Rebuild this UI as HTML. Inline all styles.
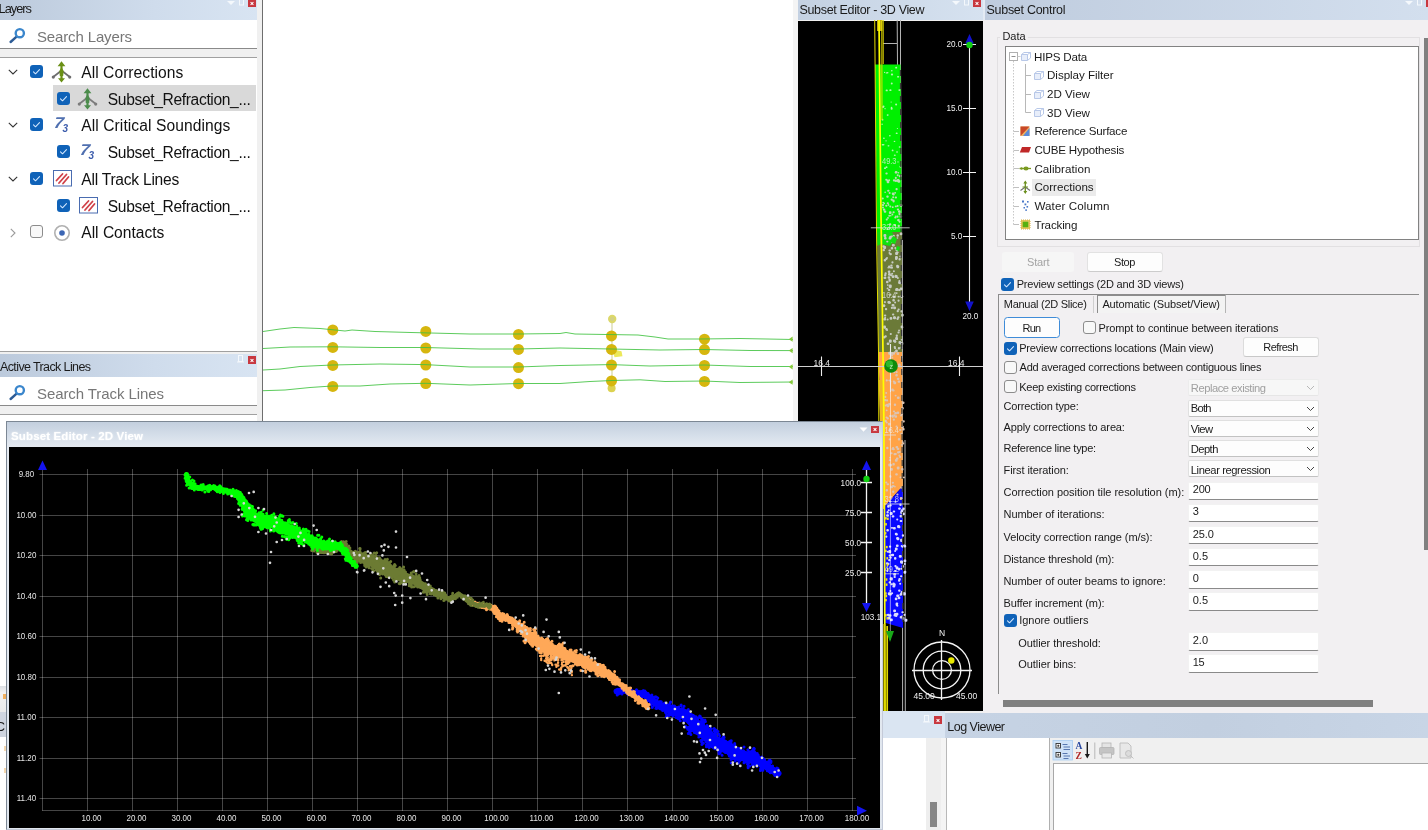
<!DOCTYPE html><html><head><meta charset="utf-8"><title>Subset Editor</title><style>
*{box-sizing:border-box;margin:0;padding:0}
html,body{width:1428px;height:830px;overflow:hidden;background:#f0f0f0;font-family:"Liberation Sans",sans-serif;}
.abs{position:absolute}
#root{position:relative;width:1428px;height:830px;overflow:hidden;background:#f0f0f0;will-change:transform;-webkit-font-smoothing:antialiased}
.hdr{position:absolute;background:linear-gradient(90deg,#bccadc 0%,#cfdcec 60%,#d8e4f2 100%)}
.t{position:absolute;white-space:nowrap}
.close{position:absolute;width:8px;height:8px;background:#c8383f}
.close:before,.close:after{content:"";position:absolute;left:2px;top:3.5px;width:4px;height:1px;background:#fff;transform:rotate(45deg)}
.close:after{transform:rotate(-45deg)}
.cb{position:absolute;width:13px;height:13px;border-radius:3px;background:#0f62b8}
.cb svg{position:absolute;left:0;top:0}
.cbe{position:absolute;width:13px;height:13px;border-radius:3px;background:#f8f8f8;border:1px solid #8c8c8c}
</style></head><body><div id="root">
<div class="abs" style="left:0;top:0;width:257px;height:352px;background:#fff"></div><div class="hdr" style="left:0;top:0;width:257px;height:20px"></div><div class="t" style="left:-1.5px;top:2.3px;font-size:12.8px;line-height:14.7072px;color:#1a1a1a;letter-spacing:-0.983px;">Layers</div><div class="close" style="left:248px;top:-1px"></div><svg class="abs" style="left:226px;top:0" width="20" height="8"><path d="M1 1 H9 L5 5Z" fill="#f4f8fc"/><rect x="13.5" y="-1" width="4" height="6" fill="none" stroke="#f4f8fc"/></svg><div class="t" style="left:37.0px;top:28.4px;font-size:15px;line-height:17.235px;color:#777;letter-spacing:-0.143px;">Search Layers</div><svg class="abs" style="left:8.3px;top:25.6px" width="20" height="20" viewBox="0 0 20 20"><path d="M8.6 10.6 L2.6 16" stroke="#2d5c96" stroke-width="2.4" stroke-linecap="round"/><circle cx="11.8" cy="7.2" r="4.1" fill="#fff" stroke="#3a86cc" stroke-width="2.4"/></svg><div class="abs" style="left:0;top:48px;width:257px;height:1px;background:#8a8a8a"></div><div class="abs" style="left:0;top:49px;width:257px;height:8px;background:#f0f0f0"></div><div class="abs" style="left:0;top:57px;width:257px;height:1px;background:#a0a0a0"></div><div class="abs" style="left:0;top:351px;width:257px;height:1px;background:#a0a0a0"></div><div class="abs" style="left:53px;top:85px;width:203px;height:26px;background:#d9d9d9"></div><div class="cb" style="left:30px;top:64.9px"><svg width="13" height="13" viewBox="0 0 13 13"><path d="M3.5 6.8 L5.5 8.8 L9.5 4.6" fill="none" stroke="#d4e8ff" stroke-width="1.05" stroke-linecap="round" stroke-linejoin="round"/></svg></div><svg class="abs" style="left:50.8px;top:60.8px" width="21" height="22" viewBox="0 0 21 22"><path d="M10.5 9.5 L2.2 16 M10.5 9.5 L18.8 16" stroke="#6e6e6e" stroke-width="1.7" stroke-linecap="round" fill="none"/><circle cx="2.3" cy="16.1" r="1.6" fill="#6e6e6e"/><circle cx="18.7" cy="16.1" r="1.6" fill="#6e6e6e"/><path d="M10.5 3 V19" stroke="#6a9016" stroke-width="2.2"/><path d="M10.5 6 L12.6 10 L12.2 15 H8.8 L8.4 10Z" fill="#6a9016"/><path d="M10.5 0.3 L14.4 5.2 H6.6Z M10.5 21.6 L14 17.2 H7Z" fill="#6a9016"/></svg><div class="t" style="left:81.3px;top:64.0px;font-size:15.6px;line-height:17.9244px;color:#111;letter-spacing:0.041px;">All Corrections</div><svg class="abs" style="left:7.8px;top:68.8px" width="10" height="6" viewBox="0 0 10 6"><path d="M0.8 0.8 L5 5 L9.2 0.8" fill="none" stroke="#333" stroke-width="1.1"/></svg><div class="cb" style="left:56.5px;top:91.62px"><svg width="13" height="13" viewBox="0 0 13 13"><path d="M3.5 6.8 L5.5 8.8 L9.5 4.6" fill="none" stroke="#d4e8ff" stroke-width="1.05" stroke-linecap="round" stroke-linejoin="round"/></svg></div><svg class="abs" style="left:77.3px;top:87.52px" width="21" height="22" viewBox="0 0 21 22"><path d="M10.5 9.5 L2.2 16 M10.5 9.5 L18.8 16" stroke="#7c7c7c" stroke-width="1.7" stroke-linecap="round" fill="none"/><circle cx="2.3" cy="16.1" r="1.6" fill="#7c7c7c"/><circle cx="18.7" cy="16.1" r="1.6" fill="#7c7c7c"/><path d="M10.5 3 V19" stroke="#4c8c4c" stroke-width="2.2"/><path d="M10.5 6 L12.6 10 L12.2 15 H8.8 L8.4 10Z" fill="#4c8c4c"/><path d="M10.5 0.3 L14.4 5.2 H6.6Z M10.5 21.6 L14 17.2 H7Z" fill="#4c8c4c"/></svg><div class="t" style="left:107.8px;top:90.7px;font-size:15.6px;line-height:17.9244px;color:#111;letter-spacing:-0.351px;">Subset_Refraction_...</div><div class="cb" style="left:30px;top:118.34px"><svg width="13" height="13" viewBox="0 0 13 13"><path d="M3.5 6.8 L5.5 8.8 L9.5 4.6" fill="none" stroke="#d4e8ff" stroke-width="1.05" stroke-linecap="round" stroke-linejoin="round"/></svg></div><svg class="abs" style="left:52.5px;top:115.24px" width="20" height="20" viewBox="0 0 20 20"><text x="2.2" y="12.6" font-family="Liberation Sans,sans-serif" font-size="15.5" font-style="italic" font-weight="bold" fill="#5070b0" transform="skewX(-8)" textLength="9.5" lengthAdjust="spacingAndGlyphs">7</text><text x="9.6" y="17.3" font-family="Liberation Sans,sans-serif" font-size="10" font-weight="bold" font-style="italic" fill="#3c5cac">3</text></svg><div class="t" style="left:81.3px;top:117.4px;font-size:15.6px;line-height:17.9244px;color:#111;letter-spacing:0.076px;">All Critical Soundings</div><svg class="abs" style="left:7.8px;top:122.24px" width="10" height="6" viewBox="0 0 10 6"><path d="M0.8 0.8 L5 5 L9.2 0.8" fill="none" stroke="#333" stroke-width="1.1"/></svg><div class="cb" style="left:56.5px;top:145.06px"><svg width="13" height="13" viewBox="0 0 13 13"><path d="M3.5 6.8 L5.5 8.8 L9.5 4.6" fill="none" stroke="#d4e8ff" stroke-width="1.05" stroke-linecap="round" stroke-linejoin="round"/></svg></div><svg class="abs" style="left:79px;top:141.96px" width="20" height="20" viewBox="0 0 20 20"><text x="2.2" y="12.6" font-family="Liberation Sans,sans-serif" font-size="15.5" font-style="italic" font-weight="bold" fill="#5070b0" transform="skewX(-8)" textLength="9.5" lengthAdjust="spacingAndGlyphs">7</text><text x="9.6" y="17.3" font-family="Liberation Sans,sans-serif" font-size="10" font-weight="bold" font-style="italic" fill="#3c5cac">3</text></svg><div class="t" style="left:107.8px;top:144.1px;font-size:15.6px;line-height:17.9244px;color:#111;letter-spacing:-0.351px;">Subset_Refraction_...</div><div class="cb" style="left:30px;top:171.78px"><svg width="13" height="13" viewBox="0 0 13 13"><path d="M3.5 6.8 L5.5 8.8 L9.5 4.6" fill="none" stroke="#d4e8ff" stroke-width="1.05" stroke-linecap="round" stroke-linejoin="round"/></svg></div><svg class="abs" style="left:52.5px;top:170.18px" width="20" height="18" viewBox="0 0 20 18"><rect x="0.5" y="0.5" width="18" height="15.5" fill="#fff" stroke="#4a6cb0" stroke-width="1"/><path d="M3.5 10.5 L9.5 4 M6 13 L13.5 4.5 M10 13.5 L15.5 7" stroke="#d04048" stroke-width="1.8" stroke-linecap="round"/></svg><div class="t" style="left:81.3px;top:170.9px;font-size:15.6px;line-height:17.9244px;color:#111;letter-spacing:-0.245px;">All Track Lines</div><svg class="abs" style="left:7.8px;top:175.68px" width="10" height="6" viewBox="0 0 10 6"><path d="M0.8 0.8 L5 5 L9.2 0.8" fill="none" stroke="#333" stroke-width="1.1"/></svg><div class="cb" style="left:56.5px;top:198.5px"><svg width="13" height="13" viewBox="0 0 13 13"><path d="M3.5 6.8 L5.5 8.8 L9.5 4.6" fill="none" stroke="#d4e8ff" stroke-width="1.05" stroke-linecap="round" stroke-linejoin="round"/></svg></div><svg class="abs" style="left:79px;top:196.9px" width="20" height="18" viewBox="0 0 20 18"><rect x="0.5" y="0.5" width="18" height="15.5" fill="#fff" stroke="#4a6cb0" stroke-width="1"/><path d="M3.5 10.5 L9.5 4 M6 13 L13.5 4.5 M10 13.5 L15.5 7" stroke="#d04048" stroke-width="1.8" stroke-linecap="round"/></svg><div class="t" style="left:107.8px;top:197.6px;font-size:15.6px;line-height:17.9244px;color:#111;letter-spacing:-0.351px;">Subset_Refraction_...</div><div class="cbe" style="left:30px;top:225.22px"></div><svg class="abs" style="left:52.5px;top:223.62px" width="18" height="18" viewBox="0 0 18 18"><circle cx="9" cy="9" r="7.2" fill="#fff" stroke="#b0b0b0" stroke-width="1.6"/><circle cx="9" cy="9" r="2.8" fill="#3c66b4"/></svg><div class="t" style="left:81.3px;top:224.3px;font-size:15.6px;line-height:17.9244px;color:#111;letter-spacing:-0.021px;">All Contacts</div><svg class="abs" style="left:10px;top:227.62px" width="6" height="10" viewBox="0 0 6 10"><path d="M0.8 0.8 L5 5 L0.8 9.2" fill="none" stroke="#9a9a9a" stroke-width="1.1"/></svg>
<div class="abs" style="left:0;top:352px;width:257px;height:69px;background:#f0f0f0"></div><div class="hdr" style="left:0;top:354px;width:257px;height:23px"></div><div class="t" style="left:0.0px;top:359.9px;font-size:12.5px;line-height:14.3625px;color:#1a1a1a;letter-spacing:-0.613px;">Active Track Lines</div><div class="close" style="left:248px;top:356px"></div><svg class="abs" style="left:236px;top:355px" width="10" height="9"><rect x="2.5" y="0.5" width="4" height="6" fill="none" stroke="#f4f8fc"/><path d="M1 7 H8" stroke="#f4f8fc"/></svg><div class="abs" style="left:0;top:377px;width:257px;height:28px;background:#fff"></div><div class="t" style="left:37.0px;top:385.4px;font-size:15px;line-height:17.235px;color:#777;letter-spacing:-0.082px;">Search Track Lines</div><svg class="abs" style="left:8.3px;top:382.8px" width="20" height="20" viewBox="0 0 20 20"><path d="M8.6 10.6 L2.6 16" stroke="#2d5c96" stroke-width="2.4" stroke-linecap="round"/><circle cx="11.8" cy="7.2" r="4.1" fill="#fff" stroke="#3a86cc" stroke-width="2.4"/></svg><div class="abs" style="left:0;top:405px;width:257px;height:1px;background:#8a8a8a"></div><div class="abs" style="left:0;top:414px;width:257px;height:1px;background:#a0a0a0"></div><div class="abs" style="left:0;top:415px;width:257px;height:8px;background:#fff"></div>
<div class="abs" style="left:261.5px;top:0;width:1.5px;height:421px;background:#6e6e6e"></div><div class="abs" style="left:263px;top:0;width:530px;height:421px;background:#fff"></div><div class="abs" style="left:793px;top:0;width:5px;height:421px;background:#f4f4f4"></div><svg class="abs" style="left:263px;top:300px" width="535" height="110" viewBox="263 300 535 110"><path d="M612 319 V388" stroke="#e6e6c8" stroke-width="2"/><circle cx="612.2" cy="319" r="4.2" fill="#dcd86a"/><circle cx="612.2" cy="319" r="2" fill="#c8c8a8" opacity=".5"/><circle cx="611.6" cy="388.3" r="4" fill="#dcd250"/><path d="M612.5 349.3 L621.5 351.3 L622.5 356.3 L614.5 357.3Z" fill="#ece85a"/><circle cx="332.8" cy="329.9" r="5.5" fill="#d6b60e"/><circle cx="332.8" cy="347.4" r="5.5" fill="#d6b60e"/><circle cx="332.8" cy="365.4" r="5.5" fill="#d6b60e"/><circle cx="332.8" cy="386.4" r="5.5" fill="#d6b60e"/><circle cx="425.8" cy="331.4" r="5.5" fill="#d6b60e"/><circle cx="425.8" cy="348" r="5.5" fill="#d6b60e"/><circle cx="425.8" cy="365" r="5.5" fill="#d6b60e"/><circle cx="425.8" cy="383.6" r="5.5" fill="#d6b60e"/><circle cx="518.5" cy="334.4" r="5.5" fill="#d6b60e"/><circle cx="518.5" cy="349.4" r="5.5" fill="#d6b60e"/><circle cx="518.5" cy="367.6" r="5.5" fill="#d6b60e"/><circle cx="518.5" cy="383.7" r="5.5" fill="#d6b60e"/><circle cx="611.5" cy="335.9" r="5.5" fill="#d6b60e"/><circle cx="611.5" cy="349.4" r="5.5" fill="#d6b60e"/><circle cx="611.5" cy="365" r="5.5" fill="#d6b60e"/><circle cx="611.5" cy="380.9" r="5.5" fill="#d6b60e"/><circle cx="704.5" cy="339.2" r="5.5" fill="#d6b60e"/><circle cx="704.5" cy="349.6" r="5.5" fill="#d6b60e"/><circle cx="704.5" cy="365.4" r="5.5" fill="#d6b60e"/><circle cx="704.5" cy="381.4" r="5.5" fill="#d6b60e"/><polyline points="263,331.5 280,329 294,327.5 320,328.5 345,331 352,330 375,331.5 411,332.5 470,334 517,334 560,333.5 566,332.5 575,334 638,335 655,337 668,339 700,339 740,338.5 793,339.5" fill="none" stroke="#3fc23f" stroke-width="1" opacity=".85"/><polyline points="263,348.5 290,347 332,346.8 380,347.5 425,347.5 480,349 518,349 560,348 611,349 660,350 704,349.5 750,350.5 793,350.6" fill="none" stroke="#3fc23f" stroke-width="1" opacity=".85"/><polyline points="263,370 280,369 300,366.5 332,365 380,364 425,364.6 470,367 518,367 560,365.5 611,364.6 650,366 704,365 750,366.5 793,366.5" fill="none" stroke="#3fc23f" stroke-width="1" opacity=".85"/><polyline points="263,390.7 285,390 310,387.5 332,386 360,386 390,384 426,383.3 470,385 518,383.5 560,383.5 590,381.5 612,380.5 640,379.8 665,381.5 704,381 740,382.5 793,382" fill="none" stroke="#3fc23f" stroke-width="1" opacity=".85"/><path d="M788.8 339.2 L792.6 336.6 V341.8Z" fill="#86c83c"/><path d="M788.8 350.6 L792.6 348 V353.2Z" fill="#86c83c"/><path d="M788.8 366.8 L792.6 364.2 V369.4Z" fill="#86c83c"/><path d="M788.8 382.2 L792.6 379.6 V384.8Z" fill="#86c83c"/></svg>
<div class="hdr" style="left:798px;top:0;width:185px;height:20px;background:linear-gradient(90deg,#c4d1e2,#d6e2f0)"></div><div class="t" style="left:799.5px;top:2.7px;font-size:12.5px;line-height:14.3625px;color:#1a1a1a;letter-spacing:-0.339px;">Subset Editor - 3D View</div><div class="close" style="left:973px;top:-1px"></div><svg class="abs" style="left:951px;top:0" width="20" height="8"><path d="M1 1 H9 L5 5Z" fill="#f4f8fc"/><rect x="13.5" y="-1" width="4" height="6" fill="none" stroke="#f4f8fc"/></svg><div class="abs" style="left:798px;top:20.5px;width:185px;height:690.5px;background:#000"></div><div class="abs" style="left:983px;top:0;width:2px;height:20px;background:#e4ebf4"></div><svg class="abs" style="left:798px;top:20px" width="185" height="692" viewBox="798 20 185 692" font-family="Liberation Sans,sans-serif"><path d="M897.2 20 L897.5 66 M900.5 20 V66 M902.4 240 L902.6 712 M900.5 66 L902.4 352 M905 440 L905.3 712" stroke="#b4b4b4" stroke-width="1" fill="none"/><path d="M883 43.5 H897" stroke="#b4b4b4" stroke-width="1"/><path d="M875 64.5 H900.5 L901.8 232 H877Z" fill="#00f000"/><path d="M877 232 H901.8 L902 352 H878.5Z" fill="#6b7a38"/><path d="M877 232 H892 L895 238 L890 246 L881 244 L877.2 246Z" fill="#10e010"/><path d="M878.5 352 H902 L902.8 486 L893 497 L882.5 509 Z" fill="#ffa347"/><path d="M882.5 509 L893 497 L902.8 486 L903 628 L884 622.5 Z" fill="#0808ff"/><path d="M878.7 380 L884 380 L884.5 509 H882.5Z" fill="#f0b428"/><rect x="893.1" y="316.6" width="2.9" height="2.7" rx="1" fill="#c8ccc4"/><rect x="894.0" y="347.3" width="2.1" height="2.0" rx="1" fill="#c8ccc4"/><rect x="883.5" y="234.1" width="2.8" height="2.8" rx="1" fill="#c8ccc4"/><rect x="898.4" y="89.2" width="1.9" height="1.8" rx="1" fill="#b4f4b0"/><rect x="894.8" y="532.7" width="2.7" height="2.6" rx="1" fill="#dcdcff"/><rect x="904.5" y="618.7" width="2.9" height="3.0" rx="1" fill="#dcdcff"/><rect x="886.2" y="240.7" width="2.2" height="1.8" rx="1" fill="#c8ccc4"/><rect x="892.1" y="490.5" width="2.2" height="2.4" rx="1" fill="#dcc4b4"/><rect x="885.2" y="535.4" width="2.2" height="2.4" rx="1" fill="#dcdcff"/><rect x="901.0" y="326.4" width="2.3" height="1.9" rx="1" fill="#c8ccc4"/><rect x="886.7" y="114.3" width="2.0" height="1.6" rx="1" fill="#b4f4b0"/><rect x="883.4" y="202.5" width="1.7" height="1.7" rx="1" fill="#bcdcb4"/><rect x="894.7" y="171.6" width="1.7" height="1.7" rx="1" fill="#bcdcb4"/><rect x="899.6" y="215.5" width="2.5" height="2.2" rx="1" fill="#bcdcb4"/><rect x="889.3" y="556.2" width="2.4" height="2.6" rx="1" fill="#dcdcff"/><rect x="885.8" y="421.6" width="2.0" height="1.8" rx="1" fill="#dcc4b4"/><rect x="892.6" y="200.6" width="2.0" height="1.9" rx="1" fill="#bcdcb4"/><rect x="894.8" y="597.4" width="2.6" height="2.8" rx="1" fill="#dcdcff"/><rect x="884.0" y="167.3" width="2.0" height="1.8" rx="1" fill="#b4f4b0"/><rect x="894.9" y="171.1" width="2.6" height="2.3" rx="1" fill="#bcdcb4"/><rect x="902.1" y="592.4" width="2.7" height="2.5" rx="1" fill="#dcdcff"/><rect x="881.4" y="123.5" width="1.4" height="1.5" rx="1" fill="#b4f4b0"/><rect x="896.8" y="208.4" width="2.3" height="2.0" rx="1" fill="#bcdcb4"/><rect x="891.8" y="192.5" width="2.5" height="2.5" rx="1" fill="#bcdcb4"/><rect x="898.7" y="221.2" width="1.8" height="1.5" rx="1" fill="#bcdcb4"/><rect x="889.9" y="215.1" width="1.7" height="1.4" rx="1" fill="#bcdcb4"/><rect x="892.9" y="270.3" width="2.0" height="1.9" rx="1" fill="#c8ccc4"/><rect x="903.6" y="559.6" width="2.7" height="2.7" rx="1" fill="#dcdcff"/><rect x="897.0" y="75.9" width="2.2" height="1.7" rx="1" fill="#b4f4b0"/><rect x="892.8" y="418.4" width="2.1" height="2.3" rx="1" fill="#dcc4b4"/><rect x="890.6" y="107.7" width="2.1" height="2.1" rx="1" fill="#b4f4b0"/><rect x="899.0" y="455.8" width="2.2" height="2.2" rx="1" fill="#dcc4b4"/><rect x="901.6" y="565.1" width="2.5" height="2.6" rx="1" fill="#dcdcff"/><rect x="895.9" y="544.4" width="2.7" height="2.5" rx="1" fill="#dcdcff"/><rect x="902.3" y="420.2" width="2.5" height="2.3" rx="1" fill="#dcc4b4"/><rect x="895.2" y="473.2" width="2.6" height="2.2" rx="1" fill="#dcc4b4"/><rect x="885.1" y="481.6" width="2.3" height="2.0" rx="1" fill="#dcc4b4"/><rect x="893.5" y="452.9" width="2.7" height="2.4" rx="1" fill="#dcc4b4"/><rect x="885.7" y="72.3" width="1.4" height="1.2" rx="1" fill="#b4f4b0"/><rect x="897.8" y="567.8" width="2.5" height="2.7" rx="1" fill="#dcdcff"/><rect x="894.3" y="247.1" width="2.1" height="2.0" rx="1" fill="#c8ccc4"/><rect x="901.8" y="512.5" width="3.0" height="2.7" rx="1" fill="#dcdcff"/><rect x="898.5" y="341.0" width="2.8" height="2.9" rx="1" fill="#c8ccc4"/><rect x="890.9" y="592.3" width="2.2" height="2.0" rx="1" fill="#dcdcff"/><rect x="885.7" y="218.4" width="2.1" height="2.0" rx="1" fill="#bcdcb4"/><rect x="888.9" y="339.6" width="2.8" height="3.1" rx="1" fill="#c8ccc4"/><rect x="884.2" y="316.7" width="1.9" height="2.1" rx="1" fill="#c8ccc4"/><rect x="896.5" y="237.2" width="1.9" height="1.6" rx="1" fill="#c8ccc4"/><rect x="883.3" y="318.0" width="2.8" height="2.5" rx="1" fill="#c8ccc4"/><rect x="881.7" y="144.0" width="1.6" height="1.6" rx="1" fill="#b4f4b0"/><rect x="899.0" y="428.9" width="2.5" height="2.1" rx="1" fill="#dcc4b4"/><rect x="886.2" y="329.2" width="1.9" height="1.8" rx="1" fill="#c8ccc4"/><rect x="895.0" y="257.5" width="2.5" height="2.4" rx="1" fill="#c8ccc4"/><rect x="891.9" y="484.9" width="2.7" height="2.2" rx="1" fill="#dcc4b4"/><rect x="899.1" y="582.7" width="2.1" height="2.0" rx="1" fill="#dcdcff"/><rect x="900.7" y="412.6" width="2.4" height="2.5" rx="1" fill="#dcc4b4"/><rect x="902.3" y="507.4" width="2.5" height="2.5" rx="1" fill="#dcdcff"/><rect x="894.6" y="179.5" width="2.5" height="2.5" rx="1" fill="#bcdcb4"/><rect x="888.3" y="463.6" width="2.8" height="3.0" rx="1" fill="#dcc4b4"/><rect x="897.9" y="363.5" width="2.7" height="2.9" rx="1" fill="#dcc4b4"/><rect x="883.7" y="259.1" width="2.4" height="2.3" rx="1" fill="#c8ccc4"/><rect x="886.1" y="514.3" width="2.9" height="2.5" rx="1" fill="#dcdcff"/><rect x="896.6" y="251.6" width="2.1" height="1.7" rx="1" fill="#c8ccc4"/><rect x="896.6" y="352.2" width="2.5" height="2.7" rx="1" fill="#dcc4b4"/><rect x="900.6" y="338.9" width="2.0" height="1.7" rx="1" fill="#c8ccc4"/><rect x="888.6" y="357.8" width="2.4" height="2.3" rx="1" fill="#dcc4b4"/><rect x="895.5" y="533.4" width="2.3" height="2.1" rx="1" fill="#dcdcff"/><rect x="901.8" y="534.3" width="2.2" height="2.4" rx="1" fill="#dcdcff"/><rect x="895.6" y="602.5" width="2.6" height="2.3" rx="1" fill="#dcdcff"/><rect x="892.6" y="362.9" width="1.8" height="2.0" rx="1" fill="#dcc4b4"/><rect x="890.6" y="351.9" width="2.8" height="2.7" rx="1" fill="#c8ccc4"/><rect x="895.8" y="338.0" width="2.0" height="1.9" rx="1" fill="#c8ccc4"/><rect x="900.2" y="295.2" width="2.9" height="2.6" rx="1" fill="#c8ccc4"/><rect x="885.3" y="328.1" width="2.4" height="2.5" rx="1" fill="#c8ccc4"/><rect x="894.3" y="564.9" width="2.3" height="2.0" rx="1" fill="#dcdcff"/><rect x="894.1" y="191.9" width="2.0" height="1.8" rx="1" fill="#bcdcb4"/><rect x="885.7" y="409.4" width="1.9" height="1.8" rx="1" fill="#dcc4b4"/><rect x="885.2" y="204.8" width="2.2" height="2.0" rx="1" fill="#bcdcb4"/><rect x="890.0" y="274.2" width="2.5" height="2.1" rx="1" fill="#c8ccc4"/><rect x="892.9" y="179.2" width="2.3" height="2.2" rx="1" fill="#bcdcb4"/><rect x="896.5" y="537.6" width="2.9" height="2.6" rx="1" fill="#dcdcff"/><rect x="899.5" y="476.4" width="2.1" height="1.9" rx="1" fill="#dcc4b4"/><rect x="889.7" y="577.2" width="3.1" height="3.3" rx="1" fill="#dcdcff"/><rect x="885.3" y="140.2" width="1.5" height="1.2" rx="1" fill="#b4f4b0"/><rect x="892.9" y="527.0" width="2.9" height="2.4" rx="1" fill="#dcdcff"/><rect x="895.2" y="289.1" width="1.9" height="1.7" rx="1" fill="#c8ccc4"/><rect x="901.0" y="444.0" width="1.9" height="1.8" rx="1" fill="#dcc4b4"/><rect x="893.9" y="486.0" width="2.0" height="1.6" rx="1" fill="#dcc4b4"/><rect x="893.7" y="351.2" width="2.1" height="1.8" rx="1" fill="#c8ccc4"/><rect x="896.8" y="179.0" width="2.7" height="2.9" rx="1" fill="#bcdcb4"/><rect x="881.7" y="118.8" width="1.7" height="1.7" rx="1" fill="#b4f4b0"/><rect x="890.7" y="247.1" width="2.5" height="2.3" rx="1" fill="#c8ccc4"/><rect x="883.9" y="398.9" width="2.6" height="2.3" rx="1" fill="#dcc4b4"/><rect x="896.5" y="317.5" width="2.3" height="2.0" rx="1" fill="#c8ccc4"/><rect x="900.3" y="560.8" width="2.8" height="2.9" rx="1" fill="#dcdcff"/><rect x="891.3" y="414.7" width="2.3" height="2.5" rx="1" fill="#dcc4b4"/><rect x="889.7" y="511.9" width="3.0" height="3.1" rx="1" fill="#dcdcff"/><rect x="899.8" y="497.0" width="2.7" height="2.9" rx="1" fill="#dcc4b4"/><rect x="898.5" y="450.9" width="2.2" height="2.2" rx="1" fill="#dcc4b4"/><rect x="886.7" y="71.9" width="1.8" height="1.6" rx="1" fill="#b4f4b0"/><rect x="898.1" y="589.4" width="2.4" height="2.4" rx="1" fill="#dcdcff"/><rect x="893.4" y="381.5" width="2.8" height="2.8" rx="1" fill="#dcc4b4"/><rect x="898.4" y="454.5" width="1.8" height="1.8" rx="1" fill="#dcc4b4"/><rect x="889.3" y="475.3" width="1.9" height="1.6" rx="1" fill="#dcc4b4"/><rect x="884.1" y="274.1" width="2.2" height="2.3" rx="1" fill="#c8ccc4"/><rect x="892.8" y="370.7" width="2.4" height="2.6" rx="1" fill="#dcc4b4"/><rect x="888.6" y="581.3" width="2.5" height="2.1" rx="1" fill="#dcdcff"/><rect x="894.3" y="340.5" width="2.0" height="2.1" rx="1" fill="#c8ccc4"/><rect x="892.3" y="299.1" width="2.6" height="2.3" rx="1" fill="#c8ccc4"/><rect x="893.9" y="224.3" width="2.2" height="2.0" rx="1" fill="#bcdcb4"/><rect x="882.3" y="201.7" width="1.8" height="1.8" rx="1" fill="#bcdcb4"/><rect x="899.0" y="282.0" width="2.7" height="2.2" rx="1" fill="#c8ccc4"/><rect x="903.5" y="613.8" width="2.1" height="2.2" rx="1" fill="#dcdcff"/><rect x="891.5" y="304.0" width="3.0" height="2.6" rx="1" fill="#c8ccc4"/><rect x="900.6" y="355.9" width="2.3" height="2.5" rx="1" fill="#dcc4b4"/><rect x="896.2" y="518.4" width="2.1" height="2.1" rx="1" fill="#dcdcff"/><rect x="886.6" y="318.5" width="2.0" height="1.9" rx="1" fill="#c8ccc4"/><rect x="889.0" y="134.9" width="1.7" height="1.5" rx="1" fill="#b4f4b0"/><rect x="891.3" y="388.6" width="2.3" height="2.6" rx="1" fill="#dcc4b4"/><rect x="899.4" y="593.8" width="2.3" height="1.9" rx="1" fill="#dcdcff"/><rect x="900.0" y="560.6" width="2.7" height="2.4" rx="1" fill="#dcdcff"/><rect x="894.3" y="216.4" width="2.2" height="2.2" rx="1" fill="#bcdcb4"/><rect x="899.7" y="203.9" width="2.6" height="2.8" rx="1" fill="#bcdcb4"/><rect x="894.1" y="301.6" width="2.0" height="1.9" rx="1" fill="#c8ccc4"/><rect x="882.1" y="106.2" width="1.8" height="1.7" rx="1" fill="#b4f4b0"/><rect x="891.1" y="272.7" width="2.1" height="1.9" rx="1" fill="#c8ccc4"/><rect x="895.7" y="132.4" width="2.0" height="1.7" rx="1" fill="#b4f4b0"/><rect x="887.4" y="301.1" width="2.8" height="2.5" rx="1" fill="#c8ccc4"/><rect x="902.3" y="428.1" width="2.3" height="2.4" rx="1" fill="#dcc4b4"/><rect x="893.5" y="576.1" width="2.4" height="2.0" rx="1" fill="#dcdcff"/><rect x="886.8" y="550.8" width="2.1" height="2.0" rx="1" fill="#dcdcff"/><rect x="895.7" y="334.6" width="2.2" height="2.3" rx="1" fill="#c8ccc4"/><rect x="884.4" y="108.1" width="1.3" height="1.1" rx="1" fill="#b4f4b0"/><rect x="887.5" y="145.2" width="1.6" height="1.3" rx="1" fill="#b4f4b0"/><rect x="894.9" y="458.9" width="2.7" height="2.9" rx="1" fill="#dcc4b4"/><rect x="897.5" y="308.6" width="2.2" height="2.0" rx="1" fill="#c8ccc4"/><rect x="899.7" y="287.4" width="2.9" height="2.5" rx="1" fill="#c8ccc4"/><rect x="889.0" y="266.4" width="2.3" height="2.1" rx="1" fill="#c8ccc4"/><rect x="886.0" y="280.7" width="2.5" height="2.6" rx="1" fill="#c8ccc4"/><rect x="898.8" y="365.5" width="2.0" height="2.0" rx="1" fill="#dcc4b4"/><rect x="890.6" y="554.0" width="2.0" height="1.9" rx="1" fill="#dcdcff"/><rect x="893.8" y="367.5" width="2.5" height="2.6" rx="1" fill="#dcc4b4"/><rect x="890.5" y="101.5" width="1.3" height="1.1" rx="1" fill="#b4f4b0"/><rect x="886.5" y="417.3" width="2.4" height="2.1" rx="1" fill="#dcc4b4"/><rect x="895.5" y="188.1" width="2.2" height="2.2" rx="1" fill="#bcdcb4"/><rect x="888.7" y="284.5" width="3.0" height="3.0" rx="1" fill="#c8ccc4"/><rect x="893.0" y="339.5" width="2.7" height="2.7" rx="1" fill="#c8ccc4"/><rect x="893.2" y="572.9" width="2.9" height="2.9" rx="1" fill="#dcdcff"/><rect x="900.1" y="538.8" width="2.9" height="3.1" rx="1" fill="#dcdcff"/><rect x="897.7" y="596.6" width="2.6" height="2.6" rx="1" fill="#dcdcff"/><rect x="892.7" y="510.4" width="2.5" height="2.1" rx="1" fill="#dcdcff"/><rect x="902.9" y="476.6" width="2.0" height="1.7" rx="1" fill="#dcc4b4"/><rect x="888.0" y="301.4" width="3.0" height="2.4" rx="1" fill="#c8ccc4"/><rect x="884.0" y="236.9" width="2.6" height="2.7" rx="1" fill="#c8ccc4"/><rect x="894.7" y="196.4" width="2.3" height="2.0" rx="1" fill="#bcdcb4"/><rect x="890.4" y="485.7" width="2.6" height="2.5" rx="1" fill="#dcc4b4"/><rect x="898.0" y="210.3" width="2.6" height="2.4" rx="1" fill="#bcdcb4"/><rect x="901.1" y="369.2" width="2.0" height="1.6" rx="1" fill="#dcc4b4"/><rect x="900.6" y="590.9" width="2.4" height="2.3" rx="1" fill="#dcdcff"/><rect x="888.2" y="351.8" width="3.0" height="3.0" rx="1" fill="#c8ccc4"/><rect x="881.7" y="197.6" width="2.1" height="1.9" rx="1" fill="#bcdcb4"/><rect x="898.1" y="507.4" width="2.7" height="2.3" rx="1" fill="#dcdcff"/><rect x="894.9" y="547.6" width="2.7" height="3.0" rx="1" fill="#dcdcff"/><rect x="891.5" y="213.6" width="1.8" height="1.8" rx="1" fill="#bcdcb4"/><rect x="895.2" y="66.8" width="2.0" height="1.7" rx="1" fill="#b4f4b0"/><rect x="894.9" y="215.5" width="1.7" height="1.6" rx="1" fill="#bcdcb4"/><rect x="900.6" y="325.6" width="2.5" height="2.7" rx="1" fill="#c8ccc4"/><rect x="896.5" y="234.2" width="2.4" height="2.5" rx="1" fill="#c8ccc4"/><rect x="890.9" y="526.9" width="2.3" height="1.9" rx="1" fill="#dcdcff"/><rect x="890.5" y="235.4" width="2.7" height="2.4" rx="1" fill="#c8ccc4"/><rect x="886.2" y="446.7" width="2.3" height="2.5" rx="1" fill="#dcc4b4"/><rect x="897.2" y="525.7" width="2.0" height="1.8" rx="1" fill="#dcdcff"/><rect x="888.7" y="459.3" width="2.3" height="1.8" rx="1" fill="#dcc4b4"/><rect x="900.9" y="615.4" width="2.2" height="2.2" rx="1" fill="#dcdcff"/><rect x="888.7" y="226.9" width="2.2" height="2.0" rx="1" fill="#bcdcb4"/><rect x="889.3" y="252.9" width="2.6" height="2.3" rx="1" fill="#c8ccc4"/><rect x="894.8" y="176.8" width="2.0" height="2.1" rx="1" fill="#bcdcb4"/><rect x="896.8" y="377.8" width="2.6" height="2.2" rx="1" fill="#dcc4b4"/><rect x="882.6" y="144.0" width="1.9" height="1.6" rx="1" fill="#b4f4b0"/><rect x="898.0" y="288.9" width="2.6" height="2.1" rx="1" fill="#c8ccc4"/><rect x="884.3" y="191.5" width="1.7" height="1.6" rx="1" fill="#bcdcb4"/><rect x="895.1" y="349.4" width="2.7" height="2.9" rx="1" fill="#c8ccc4"/><rect x="888.5" y="279.8" width="2.4" height="1.9" rx="1" fill="#c8ccc4"/><rect x="895.4" y="288.0" width="3.0" height="3.1" rx="1" fill="#c8ccc4"/><rect x="888.4" y="249.4" width="2.6" height="2.2" rx="1" fill="#c8ccc4"/><rect x="891.7" y="275.2" width="2.8" height="2.9" rx="1" fill="#c8ccc4"/><rect x="886.7" y="404.7" width="2.7" height="2.6" rx="1" fill="#dcc4b4"/><rect x="891.4" y="261.3" width="2.1" height="2.1" rx="1" fill="#c8ccc4"/><rect x="895.6" y="612.7" width="2.8" height="2.9" rx="1" fill="#dcdcff"/><rect x="898.7" y="175.3" width="2.3" height="2.0" rx="1" fill="#bcdcb4"/><rect x="890.4" y="452.2" width="2.2" height="2.0" rx="1" fill="#dcc4b4"/><rect x="895.6" y="566.8" width="2.6" height="2.5" rx="1" fill="#dcdcff"/><rect x="898.5" y="212.5" width="2.7" height="2.8" rx="1" fill="#bcdcb4"/><rect x="886.0" y="399.2" width="2.1" height="2.2" rx="1" fill="#dcc4b4"/><rect x="892.1" y="199.4" width="2.5" height="2.2" rx="1" fill="#bcdcb4"/><rect x="899.4" y="165.8" width="1.9" height="1.7" rx="1" fill="#b4f4b0"/><rect x="897.8" y="437.9" width="2.4" height="2.5" rx="1" fill="#dcc4b4"/><rect x="889.6" y="380.7" width="1.8" height="1.8" rx="1" fill="#dcc4b4"/><rect x="898.7" y="146.2" width="1.7" height="1.5" rx="1" fill="#b4f4b0"/><rect x="896.6" y="411.6" width="2.6" height="2.4" rx="1" fill="#dcc4b4"/><rect x="901.6" y="617.0" width="2.9" height="2.7" rx="1" fill="#dcdcff"/><rect x="893.1" y="306.4" width="2.9" height="2.8" rx="1" fill="#c8ccc4"/><rect x="891.2" y="356.9" width="2.1" height="1.7" rx="1" fill="#dcc4b4"/><rect x="901.1" y="468.0" width="2.4" height="2.5" rx="1" fill="#dcc4b4"/><rect x="892.9" y="234.8" width="2.0" height="1.7" rx="1" fill="#c8ccc4"/><rect x="892.0" y="313.6" width="2.3" height="1.9" rx="1" fill="#c8ccc4"/><rect x="889.2" y="235.7" width="2.2" height="1.8" rx="1" fill="#c8ccc4"/><rect x="903.5" y="570.9" width="2.7" height="2.9" rx="1" fill="#dcdcff"/><rect x="897.5" y="299.5" width="2.1" height="2.2" rx="1" fill="#c8ccc4"/><rect x="887.1" y="505.0" width="2.6" height="2.8" rx="1" fill="#dcdcff"/><rect x="883.2" y="245.9" width="2.9" height="3.0" rx="1" fill="#c8ccc4"/><rect x="889.0" y="286.1" width="2.5" height="2.1" rx="1" fill="#c8ccc4"/><rect x="900.3" y="342.1" width="3.0" height="2.8" rx="1" fill="#c8ccc4"/><rect x="886.7" y="180.4" width="2.6" height="2.8" rx="1" fill="#bcdcb4"/><rect x="896.7" y="174.3" width="2.0" height="1.9" rx="1" fill="#bcdcb4"/><rect x="897.3" y="161.2" width="1.4" height="1.4" rx="1" fill="#b4f4b0"/><rect x="897.5" y="172.1" width="1.7" height="1.4" rx="1" fill="#bcdcb4"/><rect x="890.2" y="468.1" width="2.7" height="2.7" rx="1" fill="#dcc4b4"/><rect x="893.7" y="140.7" width="1.6" height="1.4" rx="1" fill="#b4f4b0"/><rect x="887.1" y="189.7" width="2.4" height="2.0" rx="1" fill="#bcdcb4"/><rect x="885.5" y="166.3" width="2.0" height="1.8" rx="1" fill="#b4f4b0"/><rect x="900.4" y="432.8" width="2.0" height="1.8" rx="1" fill="#dcc4b4"/><rect x="898.0" y="579.4" width="2.3" height="2.3" rx="1" fill="#dcdcff"/><rect x="886.5" y="511.0" width="2.3" height="2.4" rx="1" fill="#dcdcff"/><rect x="886.7" y="202.2" width="2.2" height="1.9" rx="1" fill="#bcdcb4"/><rect x="903.8" y="563.0" width="2.0" height="1.9" rx="1" fill="#dcdcff"/><rect x="891.7" y="481.8" width="2.3" height="2.0" rx="1" fill="#dcc4b4"/><rect x="895.3" y="374.0" width="2.5" height="2.5" rx="1" fill="#dcc4b4"/><rect x="892.5" y="352.3" width="2.5" height="2.4" rx="1" fill="#dcc4b4"/><rect x="889.0" y="593.1" width="2.9" height="2.4" rx="1" fill="#dcdcff"/><rect x="888.1" y="402.9" width="2.6" height="2.7" rx="1" fill="#dcc4b4"/><rect x="889.2" y="504.3" width="2.5" height="2.2" rx="1" fill="#dcdcff"/><rect x="896.9" y="396.6" width="2.7" height="2.3" rx="1" fill="#dcc4b4"/><rect x="890.8" y="306.8" width="2.2" height="2.3" rx="1" fill="#c8ccc4"/><rect x="893.4" y="240.2" width="2.5" height="2.2" rx="1" fill="#c8ccc4"/><rect x="885.2" y="392.1" width="2.0" height="1.7" rx="1" fill="#dcc4b4"/><rect x="893.8" y="154.5" width="2.0" height="1.6" rx="1" fill="#b4f4b0"/><rect x="889.3" y="293.5" width="2.1" height="2.3" rx="1" fill="#c8ccc4"/><rect x="889.3" y="89.3" width="2.2" height="1.8" rx="1" fill="#b4f4b0"/><rect x="896.6" y="318.2" width="1.9" height="1.7" rx="1" fill="#c8ccc4"/><rect x="888.1" y="559.1" width="2.4" height="2.2" rx="1" fill="#dcdcff"/><rect x="884.0" y="301.1" width="1.9" height="2.1" rx="1" fill="#c8ccc4"/><rect x="891.8" y="206.3" width="1.9" height="1.8" rx="1" fill="#bcdcb4"/><rect x="892.4" y="582.6" width="2.4" height="2.6" rx="1" fill="#dcdcff"/><rect x="884.5" y="404.4" width="2.4" height="2.0" rx="1" fill="#dcc4b4"/><rect x="895.0" y="256.1" width="2.9" height="2.8" rx="1" fill="#c8ccc4"/><rect x="894.0" y="557.1" width="2.4" height="2.6" rx="1" fill="#dcdcff"/><rect x="896.8" y="277.1" width="2.1" height="1.9" rx="1" fill="#c8ccc4"/><rect x="885.2" y="178.8" width="2.1" height="1.9" rx="1" fill="#bcdcb4"/><rect x="901.1" y="313.7" width="2.6" height="2.8" rx="1" fill="#c8ccc4"/><rect x="888.4" y="179.3" width="1.7" height="1.7" rx="1" fill="#bcdcb4"/><rect x="887.3" y="267.0" width="1.9" height="1.6" rx="1" fill="#c8ccc4"/><rect x="888.9" y="211.3" width="2.6" height="2.7" rx="1" fill="#bcdcb4"/><rect x="888.3" y="214.8" width="1.8" height="1.9" rx="1" fill="#bcdcb4"/><rect x="896.4" y="265.3" width="2.7" height="2.9" rx="1" fill="#c8ccc4"/><rect x="886.8" y="284.3" width="1.9" height="1.6" rx="1" fill="#c8ccc4"/><rect x="884.2" y="395.8" width="2.2" height="2.1" rx="1" fill="#dcc4b4"/><rect x="886.5" y="179.5" width="2.4" height="2.2" rx="1" fill="#bcdcb4"/><rect x="898.4" y="280.1" width="2.1" height="1.9" rx="1" fill="#c8ccc4"/><rect x="886.1" y="257.1" width="1.9" height="1.6" rx="1" fill="#c8ccc4"/><rect x="894.3" y="415.2" width="2.8" height="2.5" rx="1" fill="#dcc4b4"/><rect x="896.6" y="447.8" width="2.7" height="2.3" rx="1" fill="#dcc4b4"/><rect x="885.5" y="416.4" width="2.2" height="1.8" rx="1" fill="#dcc4b4"/><rect x="888.4" y="278.4" width="2.4" height="2.2" rx="1" fill="#c8ccc4"/><rect x="891.7" y="149.5" width="1.8" height="1.8" rx="1" fill="#b4f4b0"/><rect x="893.9" y="340.5" width="2.4" height="2.2" rx="1" fill="#c8ccc4"/><rect x="882.0" y="206.4" width="2.0" height="2.1" rx="1" fill="#bcdcb4"/><rect x="888.3" y="379.4" width="2.0" height="1.9" rx="1" fill="#dcc4b4"/><rect x="901.4" y="406.9" width="2.4" height="2.6" rx="1" fill="#dcc4b4"/><rect x="896.3" y="493.4" width="2.2" height="2.0" rx="1" fill="#dcc4b4"/><rect x="897.1" y="219.0" width="2.6" height="2.3" rx="1" fill="#bcdcb4"/><rect x="886.3" y="569.9" width="2.1" height="2.0" rx="1" fill="#dcdcff"/><rect x="888.6" y="237.0" width="3.0" height="2.5" rx="1" fill="#c8ccc4"/><rect x="885.4" y="172.6" width="2.3" height="2.0" rx="1" fill="#bcdcb4"/><rect x="890.6" y="198.6" width="2.3" height="2.2" rx="1" fill="#bcdcb4"/><rect x="894.2" y="411.9" width="2.8" height="2.5" rx="1" fill="#dcc4b4"/><rect x="898.5" y="258.1" width="2.2" height="2.3" rx="1" fill="#c8ccc4"/><rect x="897.0" y="451.2" width="2.6" height="2.2" rx="1" fill="#dcc4b4"/><rect x="892.9" y="410.4" width="2.2" height="1.9" rx="1" fill="#dcc4b4"/><rect x="887.6" y="204.1" width="1.8" height="1.7" rx="1" fill="#bcdcb4"/><rect x="897.1" y="316.2" width="2.4" height="2.1" rx="1" fill="#c8ccc4"/><rect x="901.4" y="545.9" width="2.1" height="1.8" rx="1" fill="#dcdcff"/><rect x="897.8" y="347.1" width="2.3" height="2.4" rx="1" fill="#c8ccc4"/><rect x="894.8" y="205.5" width="2.0" height="1.8" rx="1" fill="#bcdcb4"/><rect x="900.2" y="486.6" width="2.4" height="2.2" rx="1" fill="#dcc4b4"/><rect x="895.9" y="457.6" width="2.6" height="2.2" rx="1" fill="#dcc4b4"/><rect x="894.7" y="274.8" width="2.2" height="1.8" rx="1" fill="#c8ccc4"/><rect x="890.9" y="73.6" width="2.2" height="1.8" rx="1" fill="#b4f4b0"/><rect x="892.0" y="446.9" width="2.2" height="2.4" rx="1" fill="#dcc4b4"/><rect x="886.9" y="613.8" width="2.8" height="2.3" rx="1" fill="#dcdcff"/><rect x="885.6" y="89.5" width="2.2" height="1.8" rx="1" fill="#b4f4b0"/><rect x="882.5" y="248.9" width="2.5" height="2.4" rx="1" fill="#c8ccc4"/><rect x="888.0" y="272.9" width="2.8" height="2.9" rx="1" fill="#c8ccc4"/><rect x="889.0" y="223.2" width="2.3" height="2.3" rx="1" fill="#bcdcb4"/><rect x="893.2" y="609.5" width="2.8" height="2.7" rx="1" fill="#dcdcff"/><rect x="887.6" y="509.3" width="2.2" height="1.8" rx="1" fill="#dcdcff"/><rect x="890.4" y="583.2" width="2.5" height="2.1" rx="1" fill="#dcdcff"/><rect x="882.4" y="245.3" width="2.5" height="2.1" rx="1" fill="#c8ccc4"/><rect x="889.7" y="333.1" width="2.2" height="1.8" rx="1" fill="#c8ccc4"/><rect x="889.8" y="618.4" width="3.0" height="2.8" rx="1" fill="#dcdcff"/><rect x="897.5" y="295.7" width="2.3" height="1.9" rx="1" fill="#c8ccc4"/><rect x="895.5" y="371.0" width="2.1" height="2.2" rx="1" fill="#dcc4b4"/><rect x="903.7" y="545.0" width="2.5" height="2.6" rx="1" fill="#dcdcff"/><rect x="896.2" y="264.8" width="2.2" height="2.1" rx="1" fill="#c8ccc4"/><rect x="884.0" y="71.8" width="1.2" height="1.2" rx="1" fill="#b4f4b0"/><rect x="899.6" y="514.8" width="2.8" height="2.6" rx="1" fill="#dcdcff"/><rect x="900.2" y="510.9" width="2.8" height="3.1" rx="1" fill="#dcdcff"/><rect x="889.0" y="456.7" width="1.8" height="1.8" rx="1" fill="#dcc4b4"/><rect x="888.6" y="191.9" width="2.0" height="2.0" rx="1" fill="#bcdcb4"/><rect x="891.7" y="515.2" width="2.7" height="2.4" rx="1" fill="#dcdcff"/><rect x="898.5" y="220.7" width="2.0" height="1.6" rx="1" fill="#bcdcb4"/><rect x="895.8" y="251.5" width="2.1" height="2.2" rx="1" fill="#c8ccc4"/><rect x="882.8" y="304.6" width="2.5" height="2.3" rx="1" fill="#c8ccc4"/><rect x="891.9" y="244.1" width="2.9" height="2.5" rx="1" fill="#c8ccc4"/><rect x="891.3" y="553.8" width="2.8" height="2.4" rx="1" fill="#dcdcff"/><rect x="894.0" y="613.1" width="3.1" height="2.6" rx="1" fill="#dcdcff"/><rect x="895.6" y="292.2" width="2.1" height="1.8" rx="1" fill="#c8ccc4"/><rect x="901.7" y="441.2" width="2.0" height="1.8" rx="1" fill="#dcc4b4"/><rect x="888.8" y="614.2" width="2.7" height="2.5" rx="1" fill="#dcdcff"/><rect x="887.9" y="422.7" width="2.7" height="2.8" rx="1" fill="#dcc4b4"/><rect x="893.2" y="414.3" width="1.9" height="2.0" rx="1" fill="#dcc4b4"/><rect x="892.6" y="448.2" width="2.2" height="2.0" rx="1" fill="#dcc4b4"/><rect x="892.5" y="193.4" width="2.2" height="2.1" rx="1" fill="#bcdcb4"/><rect x="894.6" y="394.7" width="2.0" height="1.8" rx="1" fill="#dcc4b4"/><rect x="899.7" y="616.1" width="2.3" height="2.4" rx="1" fill="#dcdcff"/><rect x="893.5" y="614.1" width="3.0" height="2.5" rx="1" fill="#dcdcff"/><rect x="895.1" y="614.5" width="2.3" height="2.4" rx="1" fill="#dcdcff"/><rect x="901.3" y="425.7" width="2.6" height="2.5" rx="1" fill="#dcc4b4"/><rect x="887.3" y="616.5" width="3.0" height="3.0" rx="1" fill="#dcdcff"/><rect x="896.5" y="204.9" width="2.1" height="2.0" rx="1" fill="#bcdcb4"/><rect x="888.9" y="545.5" width="2.3" height="2.3" rx="1" fill="#dcdcff"/><rect x="890.7" y="106.7" width="1.7" height="1.5" rx="1" fill="#b4f4b0"/><rect x="900.7" y="509.2" width="2.8" height="2.7" rx="1" fill="#dcdcff"/><rect x="900.3" y="567.8" width="2.2" height="2.0" rx="1" fill="#dcdcff"/><rect x="900.7" y="545.1" width="2.1" height="1.8" rx="1" fill="#dcdcff"/><rect x="898.1" y="281.3" width="2.6" height="2.8" rx="1" fill="#c8ccc4"/><rect x="900.1" y="414.6" width="2.0" height="2.0" rx="1" fill="#dcc4b4"/><rect x="882.9" y="304.6" width="2.3" height="2.0" rx="1" fill="#c8ccc4"/><rect x="889.0" y="414.9" width="2.5" height="2.1" rx="1" fill="#dcc4b4"/><rect x="883.0" y="137.5" width="1.8" height="1.6" rx="1" fill="#b4f4b0"/><rect x="899.6" y="174.7" width="2.4" height="2.4" rx="1" fill="#bcdcb4"/><rect x="888.0" y="265.6" width="2.3" height="2.0" rx="1" fill="#c8ccc4"/><rect x="891.7" y="415.7" width="2.2" height="2.1" rx="1" fill="#dcc4b4"/><rect x="900.5" y="346.6" width="2.3" height="2.3" rx="1" fill="#c8ccc4"/><rect x="892.2" y="196.2" width="1.9" height="2.0" rx="1" fill="#bcdcb4"/><rect x="897.6" y="224.7" width="2.3" height="2.2" rx="1" fill="#bcdcb4"/><rect x="892.9" y="583.3" width="2.8" height="2.8" rx="1" fill="#dcdcff"/><rect x="883.9" y="314.4" width="2.4" height="2.1" rx="1" fill="#c8ccc4"/><rect x="900.4" y="310.3" width="2.2" height="2.2" rx="1" fill="#c8ccc4"/><rect x="888.6" y="438.3" width="1.9" height="2.1" rx="1" fill="#dcc4b4"/><rect x="889.3" y="205.4" width="2.0" height="2.1" rx="1" fill="#bcdcb4"/><rect x="896.1" y="537.1" width="2.6" height="2.2" rx="1" fill="#dcdcff"/><rect x="887.1" y="562.7" width="2.4" height="2.2" rx="1" fill="#dcdcff"/><rect x="896.8" y="466.6" width="2.7" height="2.9" rx="1" fill="#dcc4b4"/><rect x="890.8" y="266.4" width="2.2" height="2.3" rx="1" fill="#c8ccc4"/><rect x="901.7" y="401.5" width="2.8" height="2.6" rx="1" fill="#dcc4b4"/><rect x="897.1" y="525.1" width="2.8" height="3.0" rx="1" fill="#dcdcff"/><rect x="888.1" y="429.5" width="2.0" height="1.8" rx="1" fill="#dcc4b4"/><rect x="888.2" y="145.2" width="1.3" height="1.1" rx="1" fill="#b4f4b0"/><rect x="895.5" y="425.5" width="2.1" height="2.1" rx="1" fill="#dcc4b4"/><rect x="883.2" y="325.6" width="2.8" height="3.1" rx="1" fill="#c8ccc4"/><rect x="885.9" y="562.3" width="2.4" height="2.3" rx="1" fill="#dcdcff"/><rect x="885.3" y="361.7" width="2.1" height="2.0" rx="1" fill="#dcc4b4"/><rect x="889.3" y="496.7" width="1.9" height="1.6" rx="1" fill="#dcc4b4"/><rect x="893.1" y="316.2" width="2.4" height="2.5" rx="1" fill="#c8ccc4"/><rect x="895.6" y="603.6" width="2.4" height="2.4" rx="1" fill="#dcdcff"/><rect x="903.1" y="544.6" width="2.5" height="2.0" rx="1" fill="#dcdcff"/><rect x="896.1" y="151.2" width="1.9" height="1.6" rx="1" fill="#b4f4b0"/><rect x="899.7" y="232.6" width="2.6" height="2.7" rx="1" fill="#c8ccc4"/><rect x="883.7" y="210.5" width="2.6" height="2.3" rx="1" fill="#bcdcb4"/><rect x="895.1" y="336.9" width="2.9" height="3.1" rx="1" fill="#c8ccc4"/><rect x="892.8" y="380.6" width="2.2" height="2.0" rx="1" fill="#dcc4b4"/><rect x="889.3" y="475.6" width="2.2" height="2.1" rx="1" fill="#dcc4b4"/><rect x="890.2" y="264.6" width="2.4" height="2.0" rx="1" fill="#c8ccc4"/><rect x="886.3" y="529.0" width="2.6" height="2.5" rx="1" fill="#dcdcff"/><rect x="886.6" y="287.5" width="2.0" height="1.8" rx="1" fill="#c8ccc4"/><rect x="890.9" y="240.2" width="2.2" height="2.2" rx="1" fill="#c8ccc4"/><rect x="883.2" y="336.0" width="2.3" height="2.6" rx="1" fill="#c8ccc4"/><rect x="891.0" y="69.9" width="1.6" height="1.5" rx="1" fill="#b4f4b0"/><rect x="887.8" y="270.4" width="2.6" height="2.5" rx="1" fill="#c8ccc4"/><rect x="891.1" y="240.6" width="2.5" height="2.5" rx="1" fill="#c8ccc4"/><rect x="896.4" y="215.6" width="2.1" height="2.2" rx="1" fill="#bcdcb4"/><rect x="887.8" y="288.9" width="2.6" height="2.2" rx="1" fill="#c8ccc4"/><rect x="901.4" y="611.2" width="2.4" height="2.1" rx="1" fill="#dcdcff"/><rect x="899.6" y="519.9" width="2.7" height="2.2" rx="1" fill="#dcdcff"/><rect x="885.6" y="489.0" width="2.4" height="2.5" rx="1" fill="#dcc4b4"/><rect x="884.3" y="419.8" width="2.6" height="2.5" rx="1" fill="#dcc4b4"/><rect x="902.4" y="442.5" width="1.9" height="1.9" rx="1" fill="#dcc4b4"/><rect x="896.6" y="310.0" width="2.3" height="2.2" rx="1" fill="#c8ccc4"/><rect x="884.9" y="308.0" width="2.3" height="2.3" rx="1" fill="#c8ccc4"/><rect x="882.6" y="105.6" width="1.9" height="1.8" rx="1" fill="#b4f4b0"/><rect x="896.2" y="594.4" width="3.0" height="2.6" rx="1" fill="#dcdcff"/><rect x="892.5" y="295.8" width="2.8" height="2.4" rx="1" fill="#c8ccc4"/><rect x="894.1" y="550.0" width="2.0" height="1.9" rx="1" fill="#dcdcff"/><rect x="894.8" y="275.1" width="2.9" height="2.8" rx="1" fill="#c8ccc4"/><rect x="891.4" y="448.0" width="1.9" height="1.9" rx="1" fill="#dcc4b4"/><rect x="885.2" y="257.8" width="2.3" height="2.2" rx="1" fill="#c8ccc4"/><rect x="890.4" y="354.1" width="2.6" height="2.4" rx="1" fill="#dcc4b4"/><rect x="892.5" y="389.4" width="2.1" height="2.1" rx="1" fill="#dcc4b4"/><rect x="886.3" y="195.4" width="2.4" height="2.3" rx="1" fill="#bcdcb4"/><rect x="882.8" y="208.4" width="2.5" height="2.3" rx="1" fill="#bcdcb4"/><rect x="892.4" y="462.9" width="2.4" height="2.6" rx="1" fill="#dcc4b4"/><rect x="894.0" y="569.9" width="2.5" height="2.2" rx="1" fill="#dcdcff"/><rect x="886.5" y="483.2" width="2.6" height="2.1" rx="1" fill="#dcc4b4"/><rect x="894.8" y="453.0" width="2.1" height="1.8" rx="1" fill="#dcc4b4"/><rect x="900.0" y="592.8" width="2.9" height="2.4" rx="1" fill="#dcdcff"/><rect x="888.8" y="500.4" width="2.2" height="2.1" rx="1" fill="#dcdcff"/><rect x="886.0" y="403.8" width="2.4" height="2.5" rx="1" fill="#dcc4b4"/><rect x="898.4" y="577.9" width="2.4" height="2.6" rx="1" fill="#dcdcff"/><rect x="889.8" y="464.1" width="2.5" height="2.2" rx="1" fill="#dcc4b4"/><rect x="881.9" y="204.1" width="2.2" height="1.9" rx="1" fill="#bcdcb4"/><rect x="886.5" y="228.3" width="1.7" height="1.6" rx="1" fill="#bcdcb4"/><rect x="887.0" y="217.0" width="1.9" height="1.8" rx="1" fill="#bcdcb4"/><rect x="888.3" y="550.1" width="2.9" height="3.1" rx="1" fill="#dcdcff"/><rect x="893.8" y="403.6" width="2.3" height="2.3" rx="1" fill="#dcc4b4"/><rect x="900.0" y="575.3" width="2.3" height="1.9" rx="1" fill="#dcdcff"/><rect x="892.4" y="584.9" width="2.9" height="2.5" rx="1" fill="#dcdcff"/><rect x="889.6" y="316.9" width="2.7" height="2.9" rx="1" fill="#c8ccc4"/><rect x="893.6" y="346.1" width="2.3" height="2.0" rx="1" fill="#c8ccc4"/><rect x="887.9" y="592.2" width="3.0" height="3.0" rx="1" fill="#dcdcff"/><rect x="885.7" y="379.2" width="2.1" height="2.2" rx="1" fill="#dcc4b4"/><rect x="890.8" y="82.4" width="1.9" height="2.0" rx="1" fill="#b4f4b0"/><rect x="894.4" y="500.8" width="2.1" height="2.0" rx="1" fill="#dcdcff"/><rect x="886.7" y="342.4" width="2.7" height="2.5" rx="1" fill="#c8ccc4"/><rect x="884.4" y="335.2" width="2.4" height="2.4" rx="1" fill="#c8ccc4"/><rect x="896.3" y="604.8" width="2.1" height="1.9" rx="1" fill="#dcdcff"/><rect x="895.1" y="251.9" width="2.9" height="3.2" rx="1" fill="#c8ccc4"/><rect x="902.9" y="592.3" width="2.9" height="3.2" rx="1" fill="#dcdcff"/><rect x="895.5" y="445.9" width="2.7" height="2.3" rx="1" fill="#dcc4b4"/><rect x="896.8" y="127.9" width="1.2" height="1.0" rx="1" fill="#b4f4b0"/><rect x="897.8" y="525.7" width="2.6" height="2.5" rx="1" fill="#dcdcff"/><rect x="895.1" y="103.6" width="2.0" height="1.9" rx="1" fill="#b4f4b0"/><rect x="888.5" y="251.9" width="1.9" height="2.0" rx="1" fill="#c8ccc4"/><rect x="892.5" y="211.3" width="2.2" height="2.0" rx="1" fill="#bcdcb4"/><rect x="888.6" y="554.6" width="2.2" height="1.9" rx="1" fill="#dcdcff"/><rect x="897.4" y="331.4" width="2.3" height="2.0" rx="1" fill="#c8ccc4"/><rect x="888.8" y="428.5" width="2.1" height="2.2" rx="1" fill="#dcc4b4"/><rect x="895.5" y="248.6" width="2.6" height="2.7" rx="1" fill="#c8ccc4"/><rect x="884.8" y="365.2" width="2.0" height="1.8" rx="1" fill="#dcc4b4"/><rect x="900.9" y="295.6" width="2.3" height="2.1" rx="1" fill="#c8ccc4"/><rect x="903.9" y="570.7" width="2.4" height="2.0" rx="1" fill="#dcdcff"/><rect x="899.3" y="503.4" width="2.4" height="2.5" rx="1" fill="#dcdcff"/><rect x="887.6" y="276.2" width="2.6" height="2.6" rx="1" fill="#c8ccc4"/><rect x="898.1" y="329.6" width="1.9" height="1.8" rx="1" fill="#c8ccc4"/><rect x="883.5" y="276.7" width="2.9" height="2.4" rx="1" fill="#c8ccc4"/><rect x="897.5" y="179.9" width="2.7" height="2.9" rx="1" fill="#bcdcb4"/><rect x="899.3" y="255.4" width="2.1" height="2.1" rx="1" fill="#c8ccc4"/><rect x="889.3" y="589.9" width="2.1" height="2.2" rx="1" fill="#dcdcff"/><rect x="898.8" y="554.9" width="3.0" height="2.8" rx="1" fill="#dcdcff"/><rect x="884.5" y="272.3" width="2.2" height="2.4" rx="1" fill="#c8ccc4"/><rect x="897.6" y="380.5" width="2.7" height="2.3" rx="1" fill="#dcc4b4"/><path d="M881 246 L886 241 L893 247 L898 240 L901.8 244 V232 H885Z" fill="#6b7a38" opacity=".0"/><path d="M893 236 l4 3 l-2 5 l-5 -2z M897 246 l3 1 l-1 4 l-3 -1z" fill="#10e010"/><rect x="877" y="20" width="5.4" height="11" fill="#c4ae10"/><path d="M874.7 20 L876.6 240 L878.5 352 L879 470 M881.8 20 L882 120 M883.2 20 V64" stroke="#e4dc00" stroke-width="1" fill="none"/><path d="M879 20 L880.8 200 L882.8 340 L883.7 400 L884.5 520 L885 712" stroke="#ffff00" stroke-width="1.7" fill="none"/><path d="M884.3 624 V712 M887.2 626 V712" stroke="#e0d800" stroke-width="1.7" fill="none"/><rect x="885.1" y="523.1" width="1.8" height="2.4" fill="#e8e030"/><rect x="885.3" y="594.9" width="1.8" height="2.4" fill="#e8e030"/><rect x="886.8" y="567.9" width="1.8" height="2.4" fill="#e8e030"/><rect x="884.9" y="549.7" width="1.8" height="2.4" fill="#e8e030"/><rect x="885.9" y="545.9" width="1.8" height="2.4" fill="#e8e030"/><rect x="886.5" y="617.1" width="1.8" height="2.4" fill="#e8e030"/><rect x="885.6" y="578.3" width="1.8" height="2.4" fill="#e8e030"/><rect x="886.6" y="563.8" width="1.8" height="2.4" fill="#e8e030"/><rect x="885.0" y="614.1" width="1.8" height="2.4" fill="#e8e030"/><rect x="886.9" y="517.6" width="1.8" height="2.4" fill="#e8e030"/><rect x="886.4" y="557.1" width="1.8" height="2.4" fill="#e8e030"/><rect x="884.6" y="532.1" width="1.8" height="2.4" fill="#e8e030"/><rect x="884.9" y="592.3" width="1.8" height="2.4" fill="#e8e030"/><rect x="885.0" y="517.1" width="1.8" height="2.4" fill="#e8e030"/><rect x="885.0" y="598.9" width="1.8" height="2.4" fill="#e8e030"/><rect x="885.7" y="583.5" width="1.8" height="2.4" fill="#e8e030"/><path d="M890.5 392 L890.3 640" stroke="#fff" stroke-width="1" opacity=".55"/><rect x="899.8" y="70" width="1.2" height="6" fill="#3a3a3a"/><rect x="899.9" y="83" width="1.2" height="6" fill="#3a3a3a"/><rect x="899.9" y="96" width="1.2" height="6" fill="#3a3a3a"/><rect x="900.0" y="109" width="1.2" height="6" fill="#3a3a3a"/><rect x="900.1" y="122" width="1.2" height="6" fill="#3a3a3a"/><rect x="900.1" y="135" width="1.2" height="6" fill="#3a3a3a"/><rect x="900.2" y="148" width="1.2" height="6" fill="#3a3a3a"/><rect x="900.2" y="161" width="1.2" height="6" fill="#3a3a3a"/><rect x="900.3" y="174" width="1.2" height="6" fill="#3a3a3a"/><rect x="900.4" y="187" width="1.2" height="6" fill="#3a3a3a"/><rect x="900.4" y="200" width="1.2" height="6" fill="#3a3a3a"/><rect x="900.5" y="213" width="1.2" height="6" fill="#3a3a3a"/><rect x="900.5" y="226" width="1.2" height="6" fill="#3a3a3a"/><rect x="900.6" y="239" width="1.2" height="6" fill="#3a3a3a"/><rect x="900.6" y="252" width="1.2" height="6" fill="#3a3a3a"/><rect x="900.7" y="265" width="1.2" height="6" fill="#3a3a3a"/><rect x="900.8" y="278" width="1.2" height="6" fill="#3a3a3a"/><rect x="900.8" y="291" width="1.2" height="6" fill="#3a3a3a"/><rect x="900.9" y="304" width="1.2" height="6" fill="#3a3a3a"/><rect x="900.9" y="317" width="1.2" height="6" fill="#3a3a3a"/><rect x="901.0" y="330" width="1.2" height="6" fill="#3a3a3a"/><rect x="901.1" y="343" width="1.2" height="6" fill="#3a3a3a"/><rect x="901.1" y="356" width="1.2" height="6" fill="#3a3a3a"/><rect x="901.2" y="369" width="1.2" height="6" fill="#3a3a3a"/><rect x="901.2" y="382" width="1.2" height="6" fill="#3a3a3a"/><rect x="901.3" y="395" width="1.2" height="6" fill="#3a3a3a"/><rect x="901.3" y="408" width="1.2" height="6" fill="#3a3a3a"/><rect x="901.4" y="421" width="1.2" height="6" fill="#3a3a3a"/><rect x="901.5" y="434" width="1.2" height="6" fill="#3a3a3a"/><rect x="901.5" y="447" width="1.2" height="6" fill="#3a3a3a"/><rect x="901.6" y="460" width="1.2" height="6" fill="#3a3a3a"/><rect x="901.6" y="473" width="1.2" height="6" fill="#3a3a3a"/><rect x="901.7" y="486" width="1.2" height="6" fill="#3a3a3a"/><rect x="901.8" y="499" width="1.2" height="6" fill="#3a3a3a"/><rect x="901.8" y="512" width="1.2" height="6" fill="#3a3a3a"/><rect x="901.9" y="525" width="1.2" height="6" fill="#3a3a3a"/><rect x="901.9" y="538" width="1.2" height="6" fill="#3a3a3a"/><rect x="902.0" y="551" width="1.2" height="6" fill="#3a3a3a"/><rect x="902.0" y="564" width="1.2" height="6" fill="#3a3a3a"/><rect x="902.1" y="577" width="1.2" height="6" fill="#3a3a3a"/><rect x="902.2" y="590" width="1.2" height="6" fill="#3a3a3a"/><rect x="902.2" y="603" width="1.2" height="6" fill="#3a3a3a"/><rect x="902.3" y="616" width="1.2" height="6" fill="#3a3a3a"/><path d="M798 366.5 H983" stroke="#cfcfcf" stroke-width="1"/><path d="M821.5 356.5 V376 M959.5 356.5 V376 M890.5 344 V392" stroke="#ececec" stroke-width="1.1"/><circle cx="891" cy="366" r="6.8" fill="#0c8a0c"/><circle cx="889.5" cy="364" r="3.6" fill="#2cb82c"/><text x="889.5" y="369" font-size="7" fill="#bfe8bf">z</text><text x="813.5" y="366" font-size="8.5" fill="#e8e8e8">16.4</text><text x="948" y="366" font-size="8.5" fill="#e8e8e8">16.4</text><text x="882" y="164.2" font-size="8.4" fill="#ececec" opacity=".75" textLength="14.5" lengthAdjust="spacingAndGlyphs">49.3</text><text x="882" y="230.4" font-size="8.4" fill="#ececec" opacity=".75" textLength="14.5" lengthAdjust="spacingAndGlyphs">32.0</text><path d="M870.8 227.8 H909.7" stroke="#e0e0e0" stroke-width="1" opacity=".8"/><text x="882" y="298.2" font-size="8.4" fill="#ececec" opacity=".75" textLength="14.5" lengthAdjust="spacingAndGlyphs">16.4</text><text x="884.5" y="433.4" font-size="8.4" fill="#ececec" opacity=".75" textLength="14.5" lengthAdjust="spacingAndGlyphs">16.4</text><path d="M884 435 H896" stroke="#e0e0e0" stroke-width="1" opacity=".8"/><text x="884.5" y="502.4" font-size="8.4" fill="#ececec" opacity=".75" textLength="14.5" lengthAdjust="spacingAndGlyphs">32.8</text><path d="M884 504 H909.5" stroke="#e0e0e0" stroke-width="1" opacity=".8"/><text x="884.5" y="572.2" font-size="8.4" fill="#ececec" opacity=".75" textLength="14.5" lengthAdjust="spacingAndGlyphs">49.2</text><path d="M885 573.8 H899" stroke="#e0e0e0" stroke-width="1" opacity=".8"/><path d="M969.5 45 V303 M963 44.5 H976 M963 108.5 H976 M963 172.5 H976 M963 236.5 H976" stroke="#f4f4f4" stroke-width="1.1"/><path d="M969.5 34 L973.8 43.5 H965.2Z M969.5 311 L973.8 301.5 H965.2Z" fill="#1212cc"/><circle cx="969.5" cy="45" r="3.2" fill="#10d010"/><text x="962.3" y="47.3" font-size="8.6" fill="#f0f0f0" text-anchor="end" textLength="15.9" lengthAdjust="spacingAndGlyphs">20.0</text><text x="962.3" y="111.3" font-size="8.6" fill="#f0f0f0" text-anchor="end" textLength="15.9" lengthAdjust="spacingAndGlyphs">15.0</text><text x="962.3" y="175.3" font-size="8.6" fill="#f0f0f0" text-anchor="end" textLength="15.9" lengthAdjust="spacingAndGlyphs">10.0</text><text x="962.3" y="239.3" font-size="8.6" fill="#f0f0f0" text-anchor="end" textLength="11.4" lengthAdjust="spacingAndGlyphs">5.0</text><text x="962.5" y="318.5" font-size="8.6" fill="#f0f0f0" text-anchor="start" textLength="15.9" lengthAdjust="spacingAndGlyphs">20.0</text><path d="M886 631 H894 L890 642Z" fill="#18a818"/><g stroke="#f4f4f4" stroke-width="1.3" fill="none"><circle cx="942" cy="670" r="28"/><circle cx="942" cy="670" r="18.8"/><circle cx="942" cy="670" r="9.4"/><path d="M941.5 640 V700 M912 670.5 H972"/></g><circle cx="951.3" cy="660.5" r="3.2" fill="#e8e800"/><text x="942" y="636" font-size="8.5" fill="#f0f0f0" text-anchor="middle">N</text><text x="913.5" y="698.5" font-size="8.5" fill="#f0f0f0">45.00</text><text x="956" y="698.5" font-size="8.5" fill="#f0f0f0">45.00</text></svg>
<div class="hdr" style="left:985px;top:0;width:443px;height:20px;background:linear-gradient(90deg,#bfccde,#d3dfee)"></div><div class="t" style="left:986.5px;top:2.5px;font-size:12.5px;line-height:14.3625px;color:#1a1a1a;letter-spacing:-0.283px;">Subset Control</div><svg class="abs" style="left:1404px;top:0" width="24" height="8"><path d="M1 1 H9 L5 5Z" fill="#f4f8fc"/><rect x="13.5" y="-1" width="4" height="6" fill="none" stroke="#f4f8fc"/></svg><div class="close" style="left:1426px;top:-1px"></div><div class="abs" style="left:983px;top:20px;width:445px;height:693px;background:#f2f0f2"></div><div class="abs" style="left:997px;top:36.5px;width:423px;height:210px;border:1px solid #e2e0e2"></div><div class="abs" style="left:1000px;top:30px;width:28px;height:12px;background:#f2f0f2"></div><div class="t" style="left:1002.5px;top:30.0px;font-size:11px;line-height:12.639px;color:#1a1a1a;letter-spacing:-0.078px;">Data</div><div class="abs" style="left:1005px;top:46px;width:414px;height:194px;background:#fff;border:1px solid #828282"></div><div class="abs" style="left:1424px;top:38px;width:4px;height:512px;background:#808080"></div>
<svg class="abs" style="left:1005px;top:46px" width="60" height="194" viewBox="1005 46 60 194"><path d="M1013.5 61 V224.5" stroke="#c8c8c8" stroke-width="1" stroke-dasharray="1.5 1.5"/><path d="M1013.5 131.5 H1019" stroke="#c0c0c0" stroke-width="1"/><path d="M1013.5 150.5 H1019" stroke="#c0c0c0" stroke-width="1"/><path d="M1013.5 168.5 H1019" stroke="#c0c0c0" stroke-width="1"/><path d="M1013.5 187.5 H1019" stroke="#c0c0c0" stroke-width="1"/><path d="M1013.5 206.5 H1019" stroke="#c0c0c0" stroke-width="1"/><path d="M1013.5 224.5 H1019" stroke="#c0c0c0" stroke-width="1"/><path d="M1025.5 64 V112.5 H1031 M1025.5 75.5 H1031 M1025.5 94.5 H1031" stroke="#b8b8b8" stroke-width="1" fill="none"/><rect x="1009.5" y="52.5" width="8" height="8" fill="#fff" stroke="#b0b0b0"/><path d="M1011.5 56.5 H1015.5" stroke="#909090"/><path d="M1017.5 56.5 H1020.5" stroke="#c8c8c8"/></svg><svg class="abs" style="left:1021px;top:52px" width="10" height="9" viewBox="0 0 10 9"><path d="M0.5 2.5 H6.5 V8.5 H0.5Z" fill="#e8eefa" stroke="#b8c8e8" stroke-width="1"/><path d="M0.5 2.5 L3 0.5 H9.5 V6 L6.5 8.5 M6.5 2.5 L9.5 0.5" fill="none" stroke="#b8c8e8" stroke-width="1"/></svg><svg class="abs" style="left:1034px;top:70.5px" width="10" height="9" viewBox="0 0 10 9"><path d="M0.5 2.5 H6.5 V8.5 H0.5Z" fill="#e8eefa" stroke="#b8c8e8" stroke-width="1"/><path d="M0.5 2.5 L3 0.5 H9.5 V6 L6.5 8.5 M6.5 2.5 L9.5 0.5" fill="none" stroke="#b8c8e8" stroke-width="1"/></svg><svg class="abs" style="left:1034px;top:89.5px" width="10" height="9" viewBox="0 0 10 9"><path d="M0.5 2.5 H6.5 V8.5 H0.5Z" fill="#e8eefa" stroke="#b8c8e8" stroke-width="1"/><path d="M0.5 2.5 L3 0.5 H9.5 V6 L6.5 8.5 M6.5 2.5 L9.5 0.5" fill="none" stroke="#b8c8e8" stroke-width="1"/></svg><svg class="abs" style="left:1034px;top:108px" width="10" height="9" viewBox="0 0 10 9"><path d="M0.5 2.5 H6.5 V8.5 H0.5Z" fill="#e8eefa" stroke="#b8c8e8" stroke-width="1"/><path d="M0.5 2.5 L3 0.5 H9.5 V6 L6.5 8.5 M6.5 2.5 L9.5 0.5" fill="none" stroke="#b8c8e8" stroke-width="1"/></svg><div class="t" style="left:1034.0px;top:49.7px;font-size:11.6px;line-height:13.3284px;color:#1a1a1a;letter-spacing:-0.187px;">HIPS Data</div><div class="t" style="left:1047.0px;top:68.4px;font-size:11.6px;line-height:13.3284px;color:#1a1a1a;letter-spacing:-0.033px;">Display Filter</div><div class="t" style="left:1047.0px;top:87.1px;font-size:11.6px;line-height:13.3284px;color:#1a1a1a;letter-spacing:0.003px;">2D View</div><div class="t" style="left:1047.0px;top:105.7px;font-size:11.6px;line-height:13.3284px;color:#1a1a1a;letter-spacing:0.003px;">3D View</div><div class="abs" style="left:1032px;top:179px;width:64px;height:17px;background:#ebebeb"></div><div class="t" style="left:1034.4px;top:124.4px;font-size:11.6px;line-height:13.3284px;color:#1a1a1a;letter-spacing:-0.232px;">Reference Surface</div><div class="t" style="left:1034.4px;top:143.1px;font-size:11.6px;line-height:13.3284px;color:#1a1a1a;letter-spacing:-0.202px;">CUBE Hypothesis</div><div class="t" style="left:1034.4px;top:161.7px;font-size:11.6px;line-height:13.3284px;color:#1a1a1a;letter-spacing:0.055px;">Calibration</div><div class="t" style="left:1034.4px;top:180.4px;font-size:11.6px;line-height:13.3284px;color:#1a1a1a;letter-spacing:-0.001px;">Corrections</div><div class="t" style="left:1034.4px;top:199.0px;font-size:11.6px;line-height:13.3284px;color:#1a1a1a;letter-spacing:0.118px;">Water Column</div><div class="t" style="left:1034.4px;top:217.6px;font-size:11.6px;line-height:13.3284px;color:#1a1a1a;letter-spacing:-0.150px;">Tracking</div><svg class="abs" style="left:1019px;top:125px" width="14" height="106" viewBox="1019 125 14 106"><rect x="1020.5" y="126.5" width="9" height="9.5" fill="#f0b060"/><path d="M1020.5 126.5 H1029.5 L1020.5 136Z" fill="#c84828"/><path d="M1029.5 128 V136 H1023Z" fill="#5a8ad8"/><path d="M1022 147 H1031 L1029 152.5 H1019.8Z" fill="#c02828"/><path d="M1019.5 168.5 H1031" stroke="#7a9a20" stroke-width="1.3"/><ellipse cx="1026" cy="168.5" rx="2.6" ry="2" fill="#7a9a20"/><circle cx="1021.5" cy="168.5" r="1.2" fill="#7a9a20"/><path d="M1025.3 182 V192.5" stroke="#6a8f1c" stroke-width="1.3"/><path d="M1025.3 180.5 L1027.3 183.5 H1023.3Z M1025.3 194 L1027.2 191 H1023.4Z" fill="#6a8f1c"/><path d="M1025.3 187 L1020.5 190.5 M1025.3 187 L1030 190.5" stroke="#707070" stroke-width="1.1"/><path d="M1022.5 187 H1028" stroke="#6a8f1c" stroke-width="1"/><g fill="#4a78c8"><rect x="1022" y="200.5" width="2" height="2"/><rect x="1027" y="201" width="1.6" height="1.6"/><rect x="1024.5" y="203.5" width="1.8" height="1.8"/><rect x="1026.5" y="206" width="1.6" height="1.6"/><rect x="1023.5" y="207" width="1.5" height="1.5"/><rect x="1025.3" y="209.3" width="1.6" height="1.6"/></g><rect x="1021" y="220" width="9" height="9" fill="#e8c860" stroke="#d8b040" stroke-width="1" stroke-dasharray="1 1"/><rect x="1022.7" y="221.7" width="5.6" height="5.6" fill="#58b010"/></svg><div class="abs" style="left:1002px;top:252px;width:72px;height:19.5px;background:#f6f6f6;border-radius:3px"></div><div class="t" style="left:1027.0px;top:255.8px;font-size:11px;line-height:12.639px;color:#a4a4a4;letter-spacing:-0.157px;">Start</div><div class="abs" style="left:1086.5px;top:252px;width:76.5px;height:19.5px;background:#fdfdfd;border:1px solid #e2e2e2;border-bottom-color:#cccccc;border-radius:3px"></div><div class="t" style="left:1114.0px;top:255.8px;font-size:11px;line-height:12.639px;color:#1a1a1a;letter-spacing:-0.442px;">Stop</div><div class="cb" style="left:1001px;top:278px"><svg width="13" height="13" viewBox="0 0 13 13"><path d="M3.5 6.8 L5.5 8.8 L9.5 4.6" fill="none" stroke="#d4e8ff" stroke-width="1.05" stroke-linecap="round" stroke-linejoin="round"/></svg></div><div class="t" style="left:1016.7px;top:278.2px;font-size:11px;line-height:12.639px;color:#1a1a1a;letter-spacing:-0.191px;">Preview settings (2D and 3D views)</div><div class="abs" style="left:998px;top:294px;width:421px;height:1.2px;background:#8c8c8c"></div><div class="abs" style="left:997.5px;top:294.5px;width:1.2px;height:399px;background:#8c8c8c"></div><div class="abs" style="left:1093px;top:296px;width:1px;height:16.5px;background:#cfcfcf"></div><div class="abs" style="left:1097.3px;top:294px;width:128.4px;height:18.5px;border:1px solid #b4b4b4;border-left-color:#8c8c8c;border-top:2.2px solid #8c8c8c;border-bottom:none;background:#f3f3f3"></div><div class="t" style="left:1003.8px;top:298.0px;font-size:11px;line-height:12.639px;color:#1a1a1a;letter-spacing:-0.276px;">Manual (2D Slice)</div><div class="t" style="left:1102.4px;top:298.0px;font-size:11px;line-height:12.639px;color:#1a1a1a;letter-spacing:-0.120px;">Automatic (Subset/View)</div><div class="abs" style="left:1004px;top:317px;width:55.8px;height:20.5px;background:#fdfdfd;border:1.3px solid #3f8cd8;border-radius:3.5px"></div><div class="t" style="left:1022.4px;top:321.5px;font-size:11px;line-height:12.639px;color:#1a1a1a;letter-spacing:-0.689px;">Run</div><div class="cbe" style="left:1082.5px;top:321px"></div><div class="t" style="left:1098.6px;top:321.5px;font-size:11px;line-height:12.639px;color:#1a1a1a;letter-spacing:-0.135px;">Prompt to continue between iterations</div><div class="cb" style="left:1003.5px;top:342px"><svg width="13" height="13" viewBox="0 0 13 13"><path d="M3.5 6.8 L5.5 8.8 L9.5 4.6" fill="none" stroke="#d4e8ff" stroke-width="1.05" stroke-linecap="round" stroke-linejoin="round"/></svg></div><div class="t" style="left:1019.2px;top:342.2px;font-size:11px;line-height:12.639px;color:#1a1a1a;letter-spacing:-0.181px;">Preview corrections locations (Main view)</div><div class="abs" style="left:1242.5px;top:337px;width:76.5px;height:19.5px;background:#fdfdfd;border:1px solid #dcdcdc;border-bottom-color:#c8c8c8;border-radius:3px"></div><div class="t" style="left:1263.3px;top:341.0px;font-size:11px;line-height:12.639px;color:#1a1a1a;letter-spacing:-0.586px;">Refresh</div><div class="cbe" style="left:1003.5px;top:361px"></div><div class="t" style="left:1019.5px;top:361.0px;font-size:11px;line-height:12.639px;color:#1a1a1a;letter-spacing:-0.207px;">Add averaged corrections between contiguous lines</div><div class="cbe" style="left:1003.5px;top:380px"></div><div class="t" style="left:1019.2px;top:380.5px;font-size:11px;line-height:12.639px;color:#1a1a1a;letter-spacing:-0.258px;">Keep existing corrections</div><div class="abs" style="left:1188px;top:379.2px;width:131px;height:17px;background:#f7f7f7;border:1px solid #ececec;border-bottom-color:#e6e6e6;border-radius:2px"></div><div class="t" style="left:1190.8px;top:381.7px;font-size:11.2px;line-height:12.8688px;color:#a0a0a0;letter-spacing:-0.458px;">Replace existing</div><svg class="abs" style="left:1306px;top:385.2px" width="9" height="6" viewBox="0 0 9 6"><path d="M1 1 L4.5 4.5 L8 1" fill="none" stroke="#b8b8b8" stroke-width="1"/></svg><div class="abs" style="left:1188px;top:399.8px;width:131px;height:17px;background:#fdfdfd;border:1px solid #e0e0e0;border-bottom-color:#c2c2c2;border-radius:2px"></div><div class="t" style="left:1190.8px;top:401.9px;font-size:11.2px;line-height:12.8688px;color:#1a1a1a;letter-spacing:-0.780px;">Both</div><svg class="abs" style="left:1306px;top:405.8px" width="9" height="6" viewBox="0 0 9 6"><path d="M1 1 L4.5 4.5 L8 1" fill="none" stroke="#444" stroke-width="1"/></svg><div class="abs" style="left:1188px;top:420px;width:131px;height:17px;background:#fdfdfd;border:1px solid #e0e0e0;border-bottom-color:#c2c2c2;border-radius:2px"></div><div class="t" style="left:1190.8px;top:422.5px;font-size:11.2px;line-height:12.8688px;color:#1a1a1a;letter-spacing:-0.591px;">View</div><svg class="abs" style="left:1306px;top:426px" width="9" height="6" viewBox="0 0 9 6"><path d="M1 1 L4.5 4.5 L8 1" fill="none" stroke="#444" stroke-width="1"/></svg><div class="abs" style="left:1188px;top:440px;width:131px;height:17px;background:#fdfdfd;border:1px solid #e0e0e0;border-bottom-color:#c2c2c2;border-radius:2px"></div><div class="t" style="left:1190.8px;top:442.9px;font-size:11.2px;line-height:12.8688px;color:#1a1a1a;letter-spacing:-0.571px;">Depth</div><svg class="abs" style="left:1306px;top:446px" width="9" height="6" viewBox="0 0 9 6"><path d="M1 1 L4.5 4.5 L8 1" fill="none" stroke="#444" stroke-width="1"/></svg><div class="abs" style="left:1188px;top:460.4px;width:131px;height:17px;background:#fdfdfd;border:1px solid #e0e0e0;border-bottom-color:#c2c2c2;border-radius:2px"></div><div class="t" style="left:1190.8px;top:463.5px;font-size:11.2px;line-height:12.8688px;color:#1a1a1a;letter-spacing:-0.408px;">Linear regression</div><svg class="abs" style="left:1306px;top:466.4px" width="9" height="6" viewBox="0 0 9 6"><path d="M1 1 L4.5 4.5 L8 1" fill="none" stroke="#444" stroke-width="1"/></svg><div class="t" style="left:1003.5px;top:399.5px;font-size:11px;line-height:12.639px;color:#1a1a1a;letter-spacing:-0.156px;">Correction type:</div><div class="t" style="left:1003.5px;top:421.3px;font-size:11px;line-height:12.639px;color:#1a1a1a;letter-spacing:-0.133px;">Apply corrections to area:</div><div class="t" style="left:1003.5px;top:442.0px;font-size:11px;line-height:12.639px;color:#1a1a1a;letter-spacing:-0.275px;">Reference line type:</div><div class="t" style="left:1003.5px;top:463.8px;font-size:11px;line-height:12.639px;color:#1a1a1a;letter-spacing:-0.088px;">First iteration:</div><div class="abs" style="left:1187.6px;top:481.5px;width:131.6px;height:18.5px;background:#fff;border:1px solid #f2f2f2;border-bottom:1px solid #8a8a8a;border-radius:2px"></div><div class="t" style="left:1192.7px;top:483.3px;font-size:11px;line-height:12.639px;color:#1a1a1a;letter-spacing:-0.176px;">200</div><div class="t" style="left:1003.5px;top:486.0px;font-size:11px;line-height:12.639px;color:#1a1a1a;letter-spacing:-0.038px;">Correction position tile resolution (m):</div><div class="abs" style="left:1187.6px;top:503.5px;width:131.6px;height:18.5px;background:#fff;border:1px solid #f2f2f2;border-bottom:1px solid #8a8a8a;border-radius:2px"></div><div class="t" style="left:1192.7px;top:505.3px;font-size:11px;line-height:12.639px;color:#1a1a1a;">3</div><div class="t" style="left:1003.5px;top:508.0px;font-size:11px;line-height:12.639px;color:#1a1a1a;letter-spacing:-0.055px;">Number of iterations:</div><div class="abs" style="left:1187.6px;top:525.7px;width:131.6px;height:18.5px;background:#fff;border:1px solid #f2f2f2;border-bottom:1px solid #8a8a8a;border-radius:2px"></div><div class="t" style="left:1192.7px;top:527.5px;font-size:11px;line-height:12.639px;color:#1a1a1a;letter-spacing:-0.036px;">25.0</div><div class="t" style="left:1003.5px;top:531.0px;font-size:11px;line-height:12.639px;color:#1a1a1a;letter-spacing:-0.084px;">Velocity correction range (m/s):</div><div class="abs" style="left:1187.6px;top:547.8px;width:131.6px;height:18.5px;background:#fff;border:1px solid #f2f2f2;border-bottom:1px solid #8a8a8a;border-radius:2px"></div><div class="t" style="left:1192.7px;top:549.6px;font-size:11px;line-height:12.639px;color:#1a1a1a;letter-spacing:0.055px;">0.5</div><div class="t" style="left:1003.5px;top:553.0px;font-size:11px;line-height:12.639px;color:#1a1a1a;letter-spacing:-0.132px;">Distance threshold (m):</div><div class="abs" style="left:1187.6px;top:570px;width:131.6px;height:18.5px;background:#fff;border:1px solid #f2f2f2;border-bottom:1px solid #8a8a8a;border-radius:2px"></div><div class="t" style="left:1192.7px;top:571.8px;font-size:11px;line-height:12.639px;color:#1a1a1a;">0</div><div class="t" style="left:1003.5px;top:575.0px;font-size:11px;line-height:12.639px;color:#1a1a1a;letter-spacing:-0.073px;">Number of outer beams to ignore:</div><div class="abs" style="left:1187.6px;top:592px;width:131.6px;height:18.5px;background:#fff;border:1px solid #f2f2f2;border-bottom:1px solid #8a8a8a;border-radius:2px"></div><div class="t" style="left:1192.7px;top:593.8px;font-size:11px;line-height:12.639px;color:#1a1a1a;letter-spacing:0.055px;">0.5</div><div class="t" style="left:1003.5px;top:597.0px;font-size:11px;line-height:12.639px;color:#1a1a1a;letter-spacing:-0.105px;">Buffer increment (m):</div><div class="cb" style="left:1003.5px;top:614px"><svg width="13" height="13" viewBox="0 0 13 13"><path d="M3.5 6.8 L5.5 8.8 L9.5 4.6" fill="none" stroke="#d4e8ff" stroke-width="1.05" stroke-linecap="round" stroke-linejoin="round"/></svg></div><div class="t" style="left:1019.2px;top:614.3px;font-size:11px;line-height:12.639px;color:#1a1a1a;letter-spacing:-0.029px;">Ignore outliers</div><div class="abs" style="left:1187.6px;top:632.3px;width:131.6px;height:18.5px;background:#fff;border:1px solid #f2f2f2;border-bottom:1px solid #8a8a8a;border-radius:2px"></div><div class="t" style="left:1192.7px;top:634.1px;font-size:11px;line-height:12.639px;color:#1a1a1a;letter-spacing:0.055px;">2.0</div><div class="abs" style="left:1187.6px;top:654.3px;width:131.6px;height:18.5px;background:#fff;border:1px solid #f2f2f2;border-bottom:1px solid #8a8a8a;border-radius:2px"></div><div class="t" style="left:1192.7px;top:656.1px;font-size:11px;line-height:12.639px;color:#1a1a1a;letter-spacing:-0.234px;">15</div><div class="t" style="left:1018.3px;top:636.5px;font-size:11px;line-height:12.639px;color:#1a1a1a;letter-spacing:-0.074px;">Outlier threshold:</div><div class="t" style="left:1018.3px;top:657.5px;font-size:11px;line-height:12.639px;color:#1a1a1a;letter-spacing:-0.057px;">Outlier bins:</div><div class="abs" style="left:1003px;top:699.5px;width:370px;height:7.5px;background:#808080"></div>
<div class="abs" style="left:883px;top:713px;width:545px;height:25px;background:linear-gradient(90deg,#d4e0ee 0%,#c6d3e4 12%,#c2cfe0 60%,#c8d5e6 100%)"></div><div class="abs" style="left:883px;top:711px;width:62px;height:27px;background:#dae5f2"></div><div class="abs" style="left:883px;top:738px;width:42.5px;height:92px;background:#fff"></div><div class="abs" style="left:925.5px;top:738px;width:20.5px;height:92px;background:#eeeeee"></div><div class="abs" style="left:941px;top:738px;width:5px;height:92px;background:#f4f4f4"></div><div class="abs" style="left:930px;top:802px;width:7px;height:25px;background:#868686"></div><div class="close" style="left:934px;top:716px;width:7.5px;height:7.5px"></div><svg class="abs" style="left:922px;top:715px" width="10" height="9"><rect x="2.5" y="0.5" width="4" height="6" fill="none" stroke="#f4f8fc"/><path d="M1 7 H8" stroke="#f4f8fc"/></svg><div class="t" style="left:947.3px;top:720.0px;font-size:12.5px;line-height:14.3625px;color:#1a1a1a;letter-spacing:-0.512px;">Log Viewer</div><div class="abs" style="left:946px;top:738px;width:103.5px;height:92px;background:#fff;border-left:1px solid #b8b8b8;border-right:1px solid #b0b0b0"></div><div class="abs" style="left:1049.5px;top:738px;width:379px;height:25px;background:#f0f0f0"></div><div class="abs" style="left:1052.5px;top:762.5px;width:376px;height:68px;background:#fff;border-left:1px solid #a8a8a8;border-top:1px solid #a8a8a8"></div><svg class="abs" style="left:1052px;top:739px" width="90" height="23" viewBox="1052 739 90 23" font-family="Liberation Serif,serif"><rect x="1053" y="740.5" width="19.5" height="19.5" fill="#cfe3f8" stroke="#a8ccf0" stroke-width=".8"/><g fill="none" stroke="#303030" stroke-width=".9"><rect x="1056" y="743.5" width="4.5" height="4.5" fill="#fff"/><rect x="1056" y="752.5" width="4.5" height="4.5" fill="#fff"/><path d="M1057.2 745.8 h2.2 M1058.3 744.7 v2.2 M1057.2 754.8 h2.2 M1058.3 753.7 v2.2"/></g><path d="M1062.5 744.5 h5 M1063.5 747 h6.5 M1063.5 749.5 h6.5 M1062.5 753.5 h5 M1063.5 756 h6.5 M1063.5 758.5 h5" stroke="#5878b0" stroke-width="1"/><text x="1075.5" y="749" font-size="9.5" font-weight="bold" fill="#2848a0">A</text><text x="1075.5" y="758.8" font-size="9.5" font-weight="bold" fill="#b02828">Z</text><path d="M1087.3 742 V755" stroke="#181818" stroke-width="1.4"/><path d="M1084.8 754 H1089.8 L1087.3 758.5Z" fill="#181818"/><path d="M1094.8 742.5 V759" stroke="#b8b8b8" stroke-width="1"/><g fill="#c4c4c4" stroke="#b4b4b4" stroke-width=".8"><rect x="1102" y="743" width="9" height="5" fill="#e4e4e4"/><rect x="1099.5" y="747.5" width="14.5" height="7" rx="1"/><rect x="1102" y="753" width="9.5" height="5" fill="#e8e8e8"/></g><g fill="#e8e8e8" stroke="#bcbcbc" stroke-width=".9"><path d="M1120 743 H1128 L1131 746 V758 H1120Z"/><circle cx="1128.5" cy="753.5" r="3" fill="#dcdcdc"/><path d="M1130.5 755.5 L1133.5 758.5"/></g></svg>
<div class="abs" style="left:0;top:421px;width:7px;height:409px;background:#fff"></div><div class="abs" style="left:0;top:686px;width:7px;height:26px;background:linear-gradient(#dcdfe4,#f2f2f2 25%,#eaeaea)"></div><div class="abs" style="left:3px;top:694px;width:4px;height:5px;background:#f0b060"></div><div class="abs" style="left:0;top:712px;width:7px;height:25px;background:#cfd5e0"></div><div class="t" style="left:-4.0px;top:719.7px;font-size:12.5px;line-height:14.3625px;color:#1a1a1a;">C</div><div class="abs" style="left:4px;top:746px;width:2px;height:5px;background:#f4d8b0"></div><div class="abs" style="left:4px;top:768px;width:2px;height:5px;background:#f4d8b0"></div>
<div class="abs" style="left:6px;top:420.5px;width:876.5px;height:409px;background:linear-gradient(180deg,#c3cfde 0px,#d6dfea 14px,#e6ebf2 26px,#e0e6ee 100%);border:1px solid #7c8794;border-right-color:#c4cad8;border-bottom-color:#c4cad8"></div><div class="abs" style="left:9px;top:447px;width:871px;height:381px;background:#000"></div><div class="t" style="left:11.0px;top:429.6px;font-size:11.5px;line-height:13.2135px;color:#fff;font-weight:bold;letter-spacing:0.143px;text-shadow:0 0 2px rgba(255,255,255,.7);">Subset Editor - 2D View</div><div class="close" style="left:871px;top:425.5px;width:7.5px;height:7.5px"></div><svg class="abs" style="left:859px;top:427px" width="10" height="6"><path d="M0.5 0.5 H8.5 L4.5 4.8Z" fill="#fff"/></svg><svg class="abs" style="left:9px;top:447px" width="871" height="380" viewBox="9 447 871 380" font-family="Liberation Sans,sans-serif"><path d="M42.5 469 V811 M87.5 469 V811 M132.5 469 V811 M177.5 469 V811 M222.5 469 V811 M267.5 469 V811 M312.5 469 V811 M357.5 469 V811 M402.5 469 V811 M447.5 469 V811 M492.5 469 V811 M537.5 469 V811 M582.5 469 V811 M627.5 469 V811 M672.5 469 V811 M717.5 469 V811 M762.5 469 V811 M807.5 469 V811 M852.5 469 V811 " stroke="#fff" stroke-opacity=".27" stroke-width="1" fill="none"/><path d="M39.5 474.5 H856 M39.5 515.5 H856 M39.5 555.5 H856 M39.5 596.5 H856 M39.5 636.5 H856 M39.5 677.5 H856 M39.5 717.5 H856 M39.5 758.5 H856 M39.5 798.5 H856 M42.5 810.5 H858" stroke="#fff" stroke-opacity=".27" stroke-width="1" fill="none"/><text x="26.4" y="477.4" font-size="8.4" fill="#e6e6e6" text-anchor="middle" textLength="15.5" lengthAdjust="spacingAndGlyphs">9.80</text><text x="26.4" y="517.9" font-size="8.4" fill="#e6e6e6" text-anchor="middle" textLength="20.0" lengthAdjust="spacingAndGlyphs">10.00</text><text x="26.4" y="558.4" font-size="8.4" fill="#e6e6e6" text-anchor="middle" textLength="20.0" lengthAdjust="spacingAndGlyphs">10.20</text><text x="26.4" y="598.9" font-size="8.4" fill="#e6e6e6" text-anchor="middle" textLength="20.0" lengthAdjust="spacingAndGlyphs">10.40</text><text x="26.4" y="639.4" font-size="8.4" fill="#e6e6e6" text-anchor="middle" textLength="20.0" lengthAdjust="spacingAndGlyphs">10.60</text><text x="26.4" y="679.9" font-size="8.4" fill="#e6e6e6" text-anchor="middle" textLength="20.0" lengthAdjust="spacingAndGlyphs">10.80</text><text x="26.4" y="720.4" font-size="8.4" fill="#e6e6e6" text-anchor="middle" textLength="19.4" lengthAdjust="spacingAndGlyphs">11.00</text><text x="26.4" y="760.9" font-size="8.4" fill="#e6e6e6" text-anchor="middle" textLength="19.4" lengthAdjust="spacingAndGlyphs">11.20</text><text x="26.4" y="801.4" font-size="8.4" fill="#e6e6e6" text-anchor="middle" textLength="19.4" lengthAdjust="spacingAndGlyphs">11.40</text><text x="91.5" y="821.3" font-size="8.4" fill="#e6e6e6" text-anchor="middle" textLength="20.0" lengthAdjust="spacingAndGlyphs">10.00</text><text x="136.5" y="821.3" font-size="8.4" fill="#e6e6e6" text-anchor="middle" textLength="20.0" lengthAdjust="spacingAndGlyphs">20.00</text><text x="181.5" y="821.3" font-size="8.4" fill="#e6e6e6" text-anchor="middle" textLength="20.0" lengthAdjust="spacingAndGlyphs">30.00</text><text x="226.5" y="821.3" font-size="8.4" fill="#e6e6e6" text-anchor="middle" textLength="20.0" lengthAdjust="spacingAndGlyphs">40.00</text><text x="271.5" y="821.3" font-size="8.4" fill="#e6e6e6" text-anchor="middle" textLength="20.0" lengthAdjust="spacingAndGlyphs">50.00</text><text x="316.5" y="821.3" font-size="8.4" fill="#e6e6e6" text-anchor="middle" textLength="20.0" lengthAdjust="spacingAndGlyphs">60.00</text><text x="361.5" y="821.3" font-size="8.4" fill="#e6e6e6" text-anchor="middle" textLength="20.0" lengthAdjust="spacingAndGlyphs">70.00</text><text x="406.5" y="821.3" font-size="8.4" fill="#e6e6e6" text-anchor="middle" textLength="20.0" lengthAdjust="spacingAndGlyphs">80.00</text><text x="451.5" y="821.3" font-size="8.4" fill="#e6e6e6" text-anchor="middle" textLength="20.0" lengthAdjust="spacingAndGlyphs">90.00</text><text x="496.5" y="821.3" font-size="8.4" fill="#e6e6e6" text-anchor="middle" textLength="24.4" lengthAdjust="spacingAndGlyphs">100.00</text><text x="541.5" y="821.3" font-size="8.4" fill="#e6e6e6" text-anchor="middle" textLength="23.8" lengthAdjust="spacingAndGlyphs">110.00</text><text x="586.5" y="821.3" font-size="8.4" fill="#e6e6e6" text-anchor="middle" textLength="24.4" lengthAdjust="spacingAndGlyphs">120.00</text><text x="631.5" y="821.3" font-size="8.4" fill="#e6e6e6" text-anchor="middle" textLength="24.4" lengthAdjust="spacingAndGlyphs">130.00</text><text x="676.5" y="821.3" font-size="8.4" fill="#e6e6e6" text-anchor="middle" textLength="24.4" lengthAdjust="spacingAndGlyphs">140.00</text><text x="721.5" y="821.3" font-size="8.4" fill="#e6e6e6" text-anchor="middle" textLength="24.4" lengthAdjust="spacingAndGlyphs">150.00</text><text x="766.5" y="821.3" font-size="8.4" fill="#e6e6e6" text-anchor="middle" textLength="24.4" lengthAdjust="spacingAndGlyphs">160.00</text><text x="811.5" y="821.3" font-size="8.4" fill="#e6e6e6" text-anchor="middle" textLength="24.4" lengthAdjust="spacingAndGlyphs">170.00</text><text x="857" y="821.3" font-size="8.4" fill="#e6e6e6" text-anchor="middle" textLength="24.4" lengthAdjust="spacingAndGlyphs">180.00</text><path d="M42.5 460.5 L47 470 H38Z M867 810.7 L857 805.8 V815.6Z" fill="#1414f0"/><path d="M866.5 468 V605 M861 482.5 H872 M861 512.5 H872 M861 542.5 H872 M861 572.5 H872" stroke="#f4f4f4" stroke-width="1.3"/><path d="M866.5 460.5 L871 470 H862Z M866.5 612 L871 603 H862Z" fill="#1414f0"/><circle cx="866.5" cy="479" r="3.2" fill="#10d010"/><text x="861" y="485.7" font-size="8.6" fill="#ececec" text-anchor="end" textLength="20.4" lengthAdjust="spacingAndGlyphs">100.0</text><text x="861" y="515.7" font-size="8.6" fill="#ececec" text-anchor="end" textLength="15.9" lengthAdjust="spacingAndGlyphs">75.0</text><text x="861" y="545.7" font-size="8.6" fill="#ececec" text-anchor="end" textLength="15.9" lengthAdjust="spacingAndGlyphs">50.0</text><text x="861" y="575.7" font-size="8.6" fill="#ececec" text-anchor="end" textLength="15.9" lengthAdjust="spacingAndGlyphs">25.0</text><text x="860.7" y="619.8" font-size="8.6" fill="#ececec" text-anchor="start" textLength="20.4" lengthAdjust="spacingAndGlyphs">103.1</text><path d="M313.0 547.5L321.8 551.5" stroke="#6c7b33" stroke-width="4.6" stroke-linecap="round"/><path d="M321.8 551.5L333.0 551.0" stroke="#6c7b33" stroke-width="5.0" stroke-linecap="round"/><path d="M333.0 551.0L340.0 546.0" stroke="#6c7b33" stroke-width="5.0" stroke-linecap="round"/><path d="M340.0 546.0L343.5 543.1" stroke="#6c7b33" stroke-width="4.8" stroke-linecap="round"/><path d="M343.5 543.1L347.2 551.8" stroke="#6c7b33" stroke-width="5.1" stroke-linecap="round"/><path d="M347.2 551.8L354.0 555.0" stroke="#6c7b33" stroke-width="6.4" stroke-linecap="round"/><path d="M354.0 555.0L361.7 557.6" stroke="#6c7b33" stroke-width="8.2" stroke-linecap="round"/><path d="M361.7 557.6L376.2 563.4" stroke="#6c7b33" stroke-width="10.3" stroke-linecap="round"/><path d="M376.2 563.4L387.7 569.2" stroke="#6c7b33" stroke-width="11.4" stroke-linecap="round"/><path d="M387.7 569.2L400.7 576.4" stroke="#6c7b33" stroke-width="10.7" stroke-linecap="round"/><path d="M400.7 576.4L412.3 579.3" stroke="#6c7b33" stroke-width="9.3" stroke-linecap="round"/><path d="M412.3 579.3L421.0 585.0" stroke="#6c7b33" stroke-width="7.8" stroke-linecap="round"/><path d="M421.0 585.0L432.6 590.9" stroke="#6c7b33" stroke-width="6.6" stroke-linecap="round"/><path d="M432.6 590.9L444.1 596.6" stroke="#6c7b33" stroke-width="5.6" stroke-linecap="round"/><path d="M444.1 596.6L449.9 599.5" stroke="#6c7b33" stroke-width="4.8" stroke-linecap="round"/><path d="M449.9 599.5L458.6 593.8" stroke="#6c7b33" stroke-width="4.4" stroke-linecap="round"/><path d="M458.6 593.8L465.8 598.8" stroke="#6c7b33" stroke-width="4.4" stroke-linecap="round"/><path d="M465.8 598.8L476.0 605.3" stroke="#6c7b33" stroke-width="4.8" stroke-linecap="round"/><path d="M476.0 605.3L487.5 605.3" stroke="#6c7b33" stroke-width="4.8" stroke-linecap="round"/><path d="M487.5 605.3L490.4 606.8" stroke="#6c7b33" stroke-width="4.4" stroke-linecap="round"/><path d="M319.4 552.6h0M321.8 550.3h0M317.0 552.5h0M315.2 548.0h0M316.2 547.4h0M313.0 550.1h0M316.0 544.7h0M314.1 551.0h0M321.7 551.0h0M321.8 552.5h0M315.5 547.3h0M314.2 546.0h0M319.1 549.7h0M317.6 548.8h0M311.7 550.4h0M321.9 548.4h0M318.6 546.5h0M322.2 551.1h0M321.3 550.8h0M321.2 548.8h0M322.2 548.2h0M316.4 549.2h0M320.8 551.1h0M315.2 545.9h0M332.1 549.5h0M327.3 550.8h0M330.9 550.1h0M331.9 548.8h0M324.0 552.7h0M330.4 547.9h0M331.1 550.7h0M331.4 553.9h0M329.6 550.8h0M324.2 551.6h0M328.6 550.5h0M325.5 552.6h0M331.0 553.2h0M330.6 549.8h0M327.6 552.3h0M332.6 551.2h0M328.1 549.5h0M331.5 551.8h0M329.6 552.9h0M331.6 554.0h0M332.6 550.6h0M331.3 554.0h0M329.4 553.4h0M328.2 552.7h0M330.9 551.3h0M323.8 550.7h0M328.8 552.2h0M323.6 548.7h0M323.0 549.8h0M326.2 551.3h0M337.6 543.9h0M335.7 547.8h0M333.1 551.5h0M336.3 550.1h0M336.7 549.5h0M334.5 551.5h0M339.9 547.2h0M331.5 549.0h0M335.1 550.8h0M335.2 548.9h0M337.2 550.5h0M336.3 551.6h0M336.4 550.7h0M335.9 547.6h0M336.3 549.8h0M337.0 548.2h0M333.4 549.5h0M335.3 550.2h0M337.1 549.1h0M334.9 549.3h0M336.4 548.7h0M335.8 546.6h0M340.7 547.3h0M342.5 543.7h0M342.8 543.9h0M342.0 545.8h0M341.5 541.5h0M341.3 544.6h0M340.5 545.5h0M340.3 544.3h0M340.0 545.3h0M340.8 542.5h0M343.7 544.8h0M341.9 546.2h0M340.6 544.3h0M341.3 544.0h0M346.2 541.6h0M343.6 544.4h0M344.2 544.2h0M342.5 547.8h0M348.3 548.3h0M346.7 550.8h0M347.4 547.3h0M345.7 543.8h0M342.9 544.6h0M347.7 548.1h0M341.8 546.0h0M349.6 548.1h0M341.2 545.3h0M340.9 546.0h0M342.9 544.3h0M343.7 546.1h0M341.9 545.8h0M343.0 547.9h0M344.1 548.0h0M345.0 543.1h0M342.9 547.9h0M345.9 551.1h0M345.7 542.7h0M342.0 547.1h0M346.5 544.1h0M348.8 545.9h0M353.1 556.3h0M355.4 551.3h0M350.7 554.6h0M347.6 549.8h0M354.1 553.7h0M348.8 553.6h0M349.0 554.0h0M348.4 554.4h0M352.1 553.7h0M353.6 554.5h0M346.3 555.7h0M347.7 550.0h0M348.3 549.9h0M349.9 548.1h0M350.9 552.4h0M350.5 551.2h0M350.1 554.4h0M351.0 553.3h0M351.7 554.5h0M349.2 553.9h0M350.9 550.9h0M349.7 550.3h0M348.1 551.1h0M346.2 553.0h0M348.9 551.8h0M348.7 554.9h0M357.9 560.3h0M360.4 559.2h0M360.9 553.6h0M355.6 551.6h0M359.5 554.3h0M360.1 548.5h0M356.0 560.5h0M355.8 554.7h0M354.4 556.1h0M354.1 555.8h0M355.7 562.0h0M354.9 560.2h0M356.8 560.1h0M360.4 559.2h0M360.1 549.1h0M359.1 556.0h0M355.8 553.8h0M355.3 558.7h0M355.0 560.6h0M358.7 555.7h0M359.7 548.5h0M357.3 562.4h0M356.4 558.1h0M359.8 555.7h0M360.0 551.4h0M354.6 553.5h0M360.6 556.0h0M360.7 559.6h0M360.8 555.9h0M358.5 552.3h0M356.8 557.2h0M354.5 560.7h0M354.1 558.0h0M360.8 559.7h0M360.2 552.8h0M364.1 561.6h0M361.8 556.5h0M372.8 568.0h0M362.5 560.8h0M364.7 564.3h0M365.9 559.4h0M368.8 564.8h0M368.8 565.4h0M368.2 559.6h0M367.0 558.3h0M365.2 555.3h0M371.7 556.8h0M370.2 563.8h0M367.6 564.7h0M373.8 564.4h0M369.0 567.8h0M364.8 555.7h0M373.4 555.8h0M371.7 568.6h0M375.7 564.1h0M364.8 552.8h0M367.7 562.2h0M367.1 559.9h0M371.3 559.3h0M372.6 569.4h0M373.3 557.5h0M366.4 562.2h0M366.2 559.7h0M370.8 558.9h0M371.4 554.4h0M374.1 553.1h0M366.0 566.9h0M377.1 558.4h0M360.3 560.1h0M365.3 558.8h0M364.7 554.2h0M370.5 555.3h0M370.9 561.6h0M373.7 561.4h0M369.4 562.8h0M374.2 560.8h0M376.4 561.8h0M377.0 557.9h0M372.7 569.7h0M365.4 559.2h0M364.9 554.0h0M365.8 564.5h0M361.1 562.0h0M365.4 556.4h0M363.7 553.4h0M374.1 558.7h0M367.1 566.0h0M362.4 559.7h0M368.9 561.1h0M371.2 558.3h0M364.0 557.4h0M373.6 560.6h0M376.7 552.7h0M367.3 557.5h0M368.0 562.2h0M369.0 564.1h0M376.6 561.3h0M363.5 557.4h0M364.7 565.6h0M376.0 556.1h0M371.3 556.5h0M363.2 556.9h0M366.5 558.1h0M364.9 561.0h0M372.0 557.9h0M365.3 565.3h0M361.3 560.2h0M360.6 562.6h0M361.2 559.3h0M369.5 563.5h0M365.6 552.5h0M363.1 558.1h0M376.0 553.3h0M361.9 560.8h0M360.5 561.4h0M369.9 555.1h0M389.6 562.4h0M377.9 563.0h0M380.3 560.6h0M381.5 566.4h0M379.4 565.5h0M381.1 569.8h0M387.1 564.0h0M378.3 568.9h0M379.5 574.4h0M381.8 562.9h0M387.4 559.2h0M381.4 570.3h0M380.8 562.7h0M378.1 569.7h0M376.2 570.1h0M385.1 559.5h0M375.7 563.9h0M379.2 573.4h0M374.8 567.9h0M373.6 571.0h0M379.9 565.2h0M379.2 564.6h0M380.0 573.9h0M384.6 561.2h0M382.6 565.4h0M384.1 562.4h0M379.8 569.4h0M377.9 565.9h0M390.7 561.4h0M381.1 567.1h0M387.2 561.5h0M382.5 561.1h0M386.4 565.5h0M379.5 571.7h0M378.0 568.0h0M377.6 571.6h0M382.4 572.0h0M378.8 567.6h0M383.9 572.0h0M380.5 570.2h0M377.3 564.7h0M381.7 573.2h0M384.1 561.1h0M389.1 563.4h0M379.5 566.7h0M375.3 566.0h0M382.2 565.6h0M380.5 566.4h0M386.9 561.7h0M380.0 559.0h0M377.6 563.9h0M380.8 567.0h0M384.6 570.0h0M382.1 571.8h0M380.7 578.0h0M381.4 561.6h0M380.9 559.8h0M384.9 566.7h0M384.0 572.4h0M381.3 564.7h0M384.1 571.2h0M382.8 574.0h0M380.3 568.3h0M384.3 566.5h0M378.8 565.8h0M379.3 571.5h0M383.7 564.4h0M378.6 557.9h0M376.7 564.7h0M377.7 567.8h0M379.5 557.7h0M379.3 571.4h0M382.4 567.4h0M378.7 569.9h0M401.5 568.9h0M394.9 575.8h0M394.5 570.9h0M389.8 573.8h0M388.4 571.9h0M388.1 569.6h0M390.9 567.2h0M398.3 569.5h0M388.2 576.4h0M388.5 576.9h0M389.2 572.2h0M400.4 573.1h0M401.7 569.5h0M388.8 575.0h0M393.1 575.1h0M395.2 575.5h0M390.4 569.2h0M391.9 572.5h0M391.8 573.5h0M393.5 580.1h0M397.6 570.2h0M394.7 570.4h0M393.5 575.5h0M401.0 570.9h0M399.2 568.5h0M395.1 581.0h0M394.7 582.1h0M397.2 573.3h0M390.7 575.7h0M396.4 572.8h0M395.3 565.4h0M391.0 571.0h0M397.0 579.1h0M398.6 568.8h0M395.1 570.6h0M387.8 576.2h0M394.9 568.7h0M401.8 572.5h0M386.3 576.5h0M396.1 578.3h0M393.8 565.8h0M395.6 570.0h0M397.5 578.9h0M395.6 571.9h0M390.3 564.9h0M390.4 567.1h0M393.2 575.1h0M392.4 570.4h0M396.4 578.5h0M386.5 570.0h0M393.1 568.1h0M396.9 570.7h0M402.8 570.9h0M397.9 574.5h0M399.8 567.6h0M397.0 569.6h0M394.3 572.5h0M394.7 573.9h0M391.7 571.1h0M389.9 569.1h0M385.4 575.1h0M394.6 564.6h0M390.1 575.8h0M394.9 575.7h0M388.4 576.0h0M393.4 572.8h0M397.3 574.5h0M398.4 577.8h0M398.0 571.3h0M395.2 575.7h0M395.4 577.1h0M394.2 575.5h0M390.7 571.1h0M398.6 574.1h0M392.3 578.1h0M404.1 570.0h0M394.0 574.8h0M393.9 574.2h0M395.0 579.3h0M410.1 585.4h0M409.8 579.1h0M410.7 581.9h0M406.1 578.9h0M412.5 575.8h0M401.1 582.3h0M411.1 575.9h0M410.9 578.3h0M405.5 572.0h0M404.4 579.5h0M404.3 575.0h0M401.6 576.6h0M410.7 575.1h0M405.8 582.4h0M399.2 583.4h0M402.9 582.3h0M411.2 573.1h0M409.2 585.8h0M406.9 576.0h0M406.6 578.1h0M407.2 575.2h0M406.3 574.0h0M408.1 578.6h0M406.5 575.7h0M401.7 575.4h0M404.9 574.9h0M402.0 580.5h0M400.0 583.7h0M410.4 576.0h0M409.0 576.0h0M407.8 575.1h0M407.5 575.1h0M411.6 578.3h0M410.3 585.1h0M402.8 582.3h0M409.4 583.7h0M404.2 578.9h0M401.6 573.0h0M403.1 576.9h0M404.4 582.9h0M413.9 571.5h0M402.6 580.2h0M405.5 579.8h0M403.6 573.3h0M412.1 576.6h0M409.3 579.2h0M413.1 572.0h0M408.0 577.0h0M407.7 578.5h0M404.8 583.4h0M411.2 581.4h0M409.4 575.8h0M399.8 579.7h0M403.6 567.0h0M405.9 580.0h0M401.3 582.8h0M419.4 581.8h0M420.3 581.1h0M416.3 584.1h0M411.6 587.0h0M415.9 583.2h0M412.9 581.5h0M416.9 585.3h0M416.0 581.8h0M420.1 579.5h0M418.8 583.9h0M416.1 576.0h0M411.8 583.6h0M419.1 576.4h0M417.0 583.5h0M416.1 585.7h0M412.6 583.2h0M417.1 578.0h0M419.7 585.4h0M417.8 582.5h0M419.0 575.5h0M417.7 584.6h0M416.7 579.6h0M412.1 586.6h0M417.7 587.1h0M413.9 586.8h0M415.6 585.9h0M411.5 582.4h0M416.3 577.1h0M419.0 582.6h0M422.9 583.3h0M419.5 582.5h0M419.1 581.2h0M418.8 580.1h0M416.0 573.8h0M419.7 577.7h0M414.5 582.6h0M416.7 584.3h0M416.3 576.5h0M409.6 584.4h0M418.2 583.0h0M418.2 583.0h0M420.1 585.2h0M432.6 589.6h0M425.9 586.7h0M428.6 586.3h0M423.3 592.2h0M423.9 585.2h0M433.2 590.9h0M430.3 585.9h0M423.9 585.8h0M427.6 585.7h0M421.8 585.4h0M422.7 588.8h0M430.3 593.7h0M424.5 591.6h0M423.0 588.8h0M428.8 588.2h0M426.6 585.3h0M425.2 591.9h0M429.3 590.4h0M427.1 587.8h0M429.0 587.0h0M431.3 594.1h0M422.7 582.9h0M427.8 585.9h0M423.8 583.5h0M422.1 587.1h0M427.4 592.2h0M424.2 585.9h0M432.3 590.2h0M422.9 584.3h0M424.2 584.9h0M423.8 591.5h0M424.4 586.9h0M421.8 587.0h0M428.5 587.7h0M422.9 585.7h0M424.6 590.7h0M423.5 586.8h0M427.1 587.5h0M425.2 587.8h0M425.2 584.4h0M429.9 587.0h0M425.4 583.8h0M421.9 586.5h0M427.2 594.4h0M436.3 595.8h0M441.6 592.0h0M436.2 590.4h0M442.2 591.9h0M440.8 597.0h0M442.6 595.6h0M443.6 597.1h0M433.3 592.2h0M435.0 594.1h0M437.4 593.3h0M437.2 593.1h0M434.3 592.2h0M440.9 598.7h0M437.1 593.5h0M437.9 598.0h0M438.2 592.0h0M434.1 594.7h0M444.6 595.4h0M436.5 593.0h0M435.3 593.2h0M441.3 593.5h0M442.2 594.1h0M434.0 593.2h0M434.8 594.0h0M435.5 592.2h0M437.4 591.8h0M435.7 595.1h0M434.8 594.5h0M437.5 594.4h0M441.3 593.8h0M444.7 593.1h0M436.4 594.3h0M433.5 590.3h0M439.8 594.5h0M432.6 592.2h0M434.2 594.0h0M443.0 592.1h0M444.6 598.3h0M445.5 598.6h0M451.3 598.5h0M449.9 598.3h0M443.8 600.4h0M447.7 597.4h0M444.5 599.9h0M449.5 601.0h0M447.3 598.0h0M448.0 597.6h0M447.7 598.6h0M448.3 599.0h0M448.6 599.1h0M446.8 598.0h0M445.0 599.0h0M445.6 594.8h0M445.4 598.3h0M448.3 599.9h0M449.2 597.9h0M451.9 600.9h0M457.3 597.3h0M455.4 598.7h0M457.1 595.7h0M452.9 598.8h0M452.1 601.1h0M452.3 598.6h0M452.5 596.7h0M452.3 595.5h0M450.7 596.5h0M456.8 594.0h0M452.7 593.3h0M453.5 598.0h0M454.5 598.6h0M452.5 599.4h0M457.9 594.6h0M452.9 598.3h0M456.4 595.6h0M451.5 598.4h0M452.5 597.0h0M458.1 594.0h0M455.8 595.7h0M452.5 598.8h0M452.8 598.0h0M462.2 595.2h0M463.8 599.3h0M465.7 597.0h0M464.9 596.0h0M465.5 597.4h0M464.9 595.8h0M463.0 597.1h0M464.5 597.4h0M458.3 595.0h0M464.3 598.6h0M463.0 598.5h0M461.5 596.8h0M462.2 596.7h0M462.5 597.1h0M465.7 596.6h0M459.1 593.5h0M464.6 597.5h0M461.6 595.9h0M460.4 595.0h0M463.1 598.0h0M462.1 596.8h0M466.7 600.8h0M467.9 602.2h0M472.5 602.0h0M470.1 604.3h0M468.4 597.7h0M472.3 605.6h0M468.7 598.7h0M469.5 601.5h0M468.4 597.8h0M472.5 602.1h0M472.6 601.0h0M472.1 600.8h0M468.4 603.4h0M466.8 600.7h0M473.7 602.9h0M474.7 601.7h0M470.7 601.3h0M470.8 605.3h0M471.4 598.5h0M467.9 598.4h0M469.0 597.5h0M469.6 598.2h0M468.8 603.3h0M467.1 601.4h0M472.7 599.9h0M475.0 602.4h0M472.9 603.6h0M471.6 599.6h0M473.7 602.0h0M472.4 600.4h0M470.2 598.0h0M479.3 602.8h0M479.0 605.1h0M486.1 605.5h0M477.2 606.5h0M486.0 605.7h0M483.2 603.0h0M478.2 607.2h0M485.9 606.5h0M479.7 603.6h0M483.6 604.5h0M478.5 606.1h0M486.2 605.4h0M479.8 607.5h0M482.6 602.7h0M486.9 604.2h0M486.9 606.1h0M482.3 607.2h0M484.2 608.0h0M482.4 603.9h0M484.4 605.5h0M476.9 603.3h0M477.0 603.9h0M483.4 602.3h0M477.3 606.6h0M476.2 605.2h0M480.8 606.4h0M477.4 606.3h0M486.6 605.5h0M484.9 605.8h0M487.6 606.6h0M489.5 604.0h0M491.0 605.0h0M490.4 605.7h0M489.1 604.3h0M490.1 605.8h0M489.9 604.3h0M488.8 607.4h0M488.2 607.1h0" fill="none" stroke="#6c7b33" stroke-width="3" stroke-linecap="round"/><path d="M186.6 474.5L188.0 481.7" stroke="#00ff00" stroke-width="5.0" stroke-linecap="round"/><path d="M188.0 481.7L193.9 486.8" stroke="#00ff00" stroke-width="5.3" stroke-linecap="round"/><path d="M193.9 486.8L201.8 488.2" stroke="#00ff00" stroke-width="5.0" stroke-linecap="round"/><path d="M201.8 488.2L213.4 487.5" stroke="#00ff00" stroke-width="4.8" stroke-linecap="round"/><path d="M213.4 487.5L222.0 490.4" stroke="#00ff00" stroke-width="4.8" stroke-linecap="round"/><path d="M222.0 490.4L232.2 492.5" stroke="#00ff00" stroke-width="5.0" stroke-linecap="round"/><path d="M232.2 492.5L239.4 495.4" stroke="#00ff00" stroke-width="5.6" stroke-linecap="round"/><path d="M239.4 495.4L243.8 502.0" stroke="#00ff00" stroke-width="6.6" stroke-linecap="round"/><path d="M243.8 502.0L246.6 509.2" stroke="#00ff00" stroke-width="7.5" stroke-linecap="round"/><path d="M246.6 509.2L252.4 515.7" stroke="#00ff00" stroke-width="8.6" stroke-linecap="round"/><path d="M252.4 515.7L259.7 520.0" stroke="#00ff00" stroke-width="10.0" stroke-linecap="round"/><path d="M259.7 520.0L268.3 520.7" stroke="#00ff00" stroke-width="11.1" stroke-linecap="round"/><path d="M268.3 520.7L274.1 522.2" stroke="#00ff00" stroke-width="11.8" stroke-linecap="round"/><path d="M274.1 522.2L282.8 528.0" stroke="#00ff00" stroke-width="12.1" stroke-linecap="round"/><path d="M282.8 528.0L291.5 530.9" stroke="#00ff00" stroke-width="11.8" stroke-linecap="round"/><path d="M291.5 530.9L300.2 535.2" stroke="#00ff00" stroke-width="10.7" stroke-linecap="round"/><path d="M300.2 535.2L307.4 538.8" stroke="#00ff00" stroke-width="9.6" stroke-linecap="round"/><path d="M307.4 538.8L316.0 542.4" stroke="#00ff00" stroke-width="8.9" stroke-linecap="round"/><path d="M316.0 542.4L324.7 545.3" stroke="#00ff00" stroke-width="8.2" stroke-linecap="round"/><path d="M324.7 545.3L334.9 545.3" stroke="#00ff00" stroke-width="7.5" stroke-linecap="round"/><path d="M334.9 545.3L340.6 546.0" stroke="#00ff00" stroke-width="6.4" stroke-linecap="round"/><path d="M340.6 546.0L345.0 552.6" stroke="#00ff00" stroke-width="5.1" stroke-linecap="round"/><path d="M345.0 552.6L349.3 559.8" stroke="#00ff00" stroke-width="4.6" stroke-linecap="round"/><path d="M349.3 559.8L356.5 566.3" stroke="#00ff00" stroke-width="4.6" stroke-linecap="round"/><path d="M186.4 478.1h0M186.5 478.4h0M185.9 475.3h0M187.6 479.1h0M189.6 480.9h0M187.0 477.2h0M186.1 480.7h0M189.6 481.4h0M188.1 478.4h0M187.7 475.6h0M189.8 477.1h0M186.8 477.0h0M186.6 477.5h0M187.5 479.8h0M188.7 480.0h0M185.0 475.0h0M187.2 475.9h0M185.1 478.3h0M187.3 476.4h0M190.7 481.1h0M186.6 485.3h0M190.7 485.6h0M192.8 484.3h0M188.1 482.6h0M192.8 483.3h0M188.5 482.3h0M187.0 485.1h0M195.1 483.8h0M189.0 483.2h0M194.0 487.2h0M192.2 487.9h0M194.0 481.0h0M190.4 485.0h0M192.4 479.9h0M192.1 486.9h0M189.2 484.2h0M189.8 481.2h0M194.2 485.2h0M191.8 488.6h0M190.1 487.8h0M189.1 488.1h0M191.4 485.0h0M198.7 486.8h0M195.2 488.6h0M200.7 489.5h0M194.1 489.3h0M199.4 488.9h0M199.6 488.5h0M194.9 484.3h0M197.1 488.9h0M199.6 489.6h0M196.9 487.3h0M196.0 488.5h0M198.8 487.0h0M196.9 488.4h0M194.3 489.9h0M199.2 487.6h0M200.2 486.7h0M197.9 489.4h0M195.6 486.4h0M198.8 488.3h0M201.0 485.1h0M198.9 487.7h0M195.9 488.3h0M203.5 488.2h0M203.2 484.4h0M213.5 486.8h0M208.3 485.8h0M213.6 488.1h0M213.4 488.3h0M207.9 491.2h0M203.8 487.8h0M211.6 488.0h0M210.6 489.7h0M211.3 487.5h0M202.7 484.8h0M203.5 486.2h0M204.9 491.9h0M208.8 491.6h0M212.6 488.0h0M209.5 486.2h0M213.1 486.6h0M207.7 486.4h0M204.7 488.1h0M207.9 486.0h0M209.8 486.9h0M204.2 487.6h0M208.5 489.1h0M213.7 486.8h0M207.9 487.7h0M202.1 490.0h0M207.4 489.9h0M209.8 485.3h0M211.8 488.5h0M214.5 488.2h0M220.0 492.5h0M220.6 486.5h0M219.8 485.8h0M217.5 487.6h0M218.7 488.1h0M218.4 490.7h0M218.5 490.8h0M215.8 488.1h0M215.0 486.1h0M221.1 490.7h0M215.7 489.6h0M213.6 485.6h0M213.8 487.1h0M216.1 490.4h0M217.3 491.7h0M214.5 486.1h0M218.7 486.8h0M217.3 491.4h0M214.9 489.6h0M218.7 486.9h0M221.3 487.7h0M214.2 487.5h0M215.3 488.5h0M226.0 488.9h0M223.4 489.6h0M227.8 490.5h0M223.7 488.8h0M227.8 493.5h0M230.6 491.6h0M230.0 490.0h0M222.2 488.2h0M230.2 492.8h0M227.5 490.9h0M225.3 491.3h0M222.8 490.5h0M223.0 489.8h0M231.5 494.3h0M231.6 492.0h0M223.2 491.5h0M227.7 494.0h0M230.7 494.1h0M233.0 489.3h0M231.3 492.7h0M224.6 489.0h0M223.4 493.4h0M231.6 492.7h0M223.7 490.1h0M223.9 492.2h0M230.0 491.7h0M230.4 492.9h0M227.3 489.2h0M236.8 492.3h0M236.6 495.1h0M239.2 491.9h0M237.3 491.4h0M238.2 496.1h0M233.7 496.0h0M236.4 490.6h0M233.1 494.3h0M237.3 496.4h0M235.4 495.0h0M235.8 492.3h0M235.3 496.0h0M237.4 498.5h0M232.3 494.0h0M238.3 491.6h0M236.8 492.9h0M234.8 494.2h0M235.0 496.6h0M240.4 492.5h0M234.4 490.7h0M234.1 495.3h0M235.5 495.6h0M237.0 496.1h0M238.9 498.5h0M242.0 499.3h0M240.1 497.9h0M240.7 502.0h0M237.7 497.2h0M238.6 503.6h0M241.8 494.4h0M239.1 502.5h0M243.1 502.3h0M243.9 497.5h0M239.0 496.6h0M241.4 495.9h0M240.7 502.1h0M240.0 497.0h0M237.2 497.3h0M244.2 500.6h0M238.6 496.4h0M242.0 495.4h0M238.1 496.1h0M242.7 498.6h0M243.0 498.9h0M240.5 496.5h0M241.2 497.4h0M238.6 500.0h0M241.4 497.4h0M239.9 496.1h0M243.7 501.9h0M242.0 501.5h0M241.6 505.0h0M246.5 506.7h0M245.7 503.1h0M246.4 501.3h0M247.6 505.0h0M244.6 504.5h0M242.5 506.9h0M248.0 504.2h0M247.5 503.9h0M247.0 504.0h0M248.4 506.4h0M242.1 509.3h0M249.4 504.8h0M249.5 505.1h0M243.0 506.6h0M244.7 507.1h0M246.7 504.3h0M247.3 503.1h0M243.4 502.4h0M242.8 507.1h0M248.7 505.9h0M243.7 508.3h0M240.2 505.3h0M242.5 506.2h0M243.9 509.7h0M242.7 504.5h0M244.5 508.8h0M242.3 508.4h0M240.4 505.3h0M249.8 506.2h0M250.0 509.1h0M246.8 516.2h0M248.6 518.2h0M250.7 511.0h0M252.5 506.5h0M247.0 515.6h0M245.0 515.9h0M244.2 514.1h0M246.5 515.3h0M251.2 505.9h0M246.5 519.7h0M247.1 518.7h0M245.9 514.5h0M244.8 512.2h0M251.9 509.0h0M251.7 509.7h0M250.9 513.5h0M247.8 514.3h0M253.0 512.2h0M249.6 508.8h0M247.2 517.5h0M252.3 514.5h0M247.8 520.4h0M248.5 515.3h0M243.1 514.4h0M252.9 512.3h0M250.6 516.1h0M249.7 515.6h0M252.8 509.4h0M253.5 509.6h0M245.5 511.5h0M251.7 514.4h0M247.3 515.7h0M248.6 515.1h0M252.7 508.7h0M247.5 515.5h0M249.6 515.1h0M250.9 509.1h0M242.5 516.1h0M256.3 515.7h0M255.6 510.8h0M253.9 513.5h0M256.0 516.5h0M255.5 520.3h0M251.2 519.3h0M260.5 516.7h0M260.7 513.4h0M258.2 517.1h0M260.7 516.4h0M251.4 517.3h0M255.2 517.3h0M253.8 524.2h0M251.1 519.9h0M257.6 523.0h0M260.1 515.3h0M255.6 525.0h0M256.3 517.1h0M254.6 519.2h0M259.0 512.8h0M258.5 517.0h0M252.1 518.8h0M258.5 516.8h0M256.1 514.6h0M253.8 516.3h0M260.9 517.4h0M257.4 516.7h0M259.2 518.0h0M253.6 525.1h0M255.4 520.2h0M256.3 524.9h0M258.1 517.8h0M257.9 516.6h0M253.6 515.2h0M257.3 524.6h0M255.4 519.1h0M256.6 517.6h0M255.3 518.2h0M257.5 523.6h0M259.1 516.3h0M254.9 513.6h0M252.8 524.4h0M260.4 517.7h0M263.8 526.7h0M264.0 524.5h0M264.8 517.8h0M260.8 521.2h0M260.4 527.0h0M260.9 526.0h0M261.9 523.5h0M263.2 509.9h0M262.3 527.3h0M266.4 525.0h0M265.7 525.4h0M266.7 524.2h0M261.1 512.3h0M260.0 525.2h0M264.5 516.8h0M266.6 513.6h0M265.1 522.3h0M259.5 525.5h0M264.3 525.6h0M261.1 519.7h0M263.9 523.9h0M263.4 519.2h0M261.0 529.2h0M268.8 518.8h0M263.1 519.1h0M261.3 529.3h0M267.0 522.3h0M266.9 516.7h0M265.5 525.1h0M265.1 526.4h0M267.0 527.8h0M261.3 520.9h0M264.4 526.8h0M260.4 527.7h0M264.9 517.4h0M259.4 522.2h0M267.1 520.0h0M268.0 519.9h0M260.3 516.5h0M261.2 513.0h0M262.1 526.1h0M265.0 526.8h0M262.3 520.8h0M262.7 528.0h0M263.1 516.4h0M267.8 522.9h0M262.5 528.7h0M261.6 517.3h0M263.1 514.3h0M270.0 521.7h0M270.2 519.9h0M270.7 518.5h0M269.3 527.7h0M270.3 516.1h0M267.5 522.6h0M271.4 526.6h0M272.7 517.3h0M269.7 523.6h0M269.8 519.2h0M271.9 515.2h0M268.4 525.6h0M269.7 522.2h0M270.8 525.8h0M270.0 519.1h0M271.0 518.3h0M269.9 524.9h0M269.1 518.5h0M270.4 525.4h0M271.2 526.3h0M270.0 517.5h0M271.7 526.5h0M269.7 526.7h0M273.6 519.2h0M275.0 516.4h0M272.2 521.0h0M269.6 522.1h0M269.1 520.9h0M269.0 524.1h0M274.3 520.2h0M270.6 525.5h0M271.3 521.2h0M269.4 519.2h0M271.3 519.4h0M271.4 517.4h0M273.9 513.8h0M270.6 524.4h0M273.0 529.4h0M281.1 521.7h0M281.0 524.0h0M277.0 528.9h0M273.3 530.5h0M282.0 522.1h0M276.8 530.7h0M279.5 530.8h0M279.3 518.6h0M282.4 522.8h0M277.7 530.5h0M285.0 522.8h0M282.9 516.2h0M281.8 526.1h0M277.4 531.2h0M280.6 522.2h0M273.1 524.9h0M283.6 526.6h0M276.1 526.9h0M280.3 523.9h0M279.2 530.5h0M282.3 522.8h0M277.5 528.9h0M277.5 529.9h0M280.4 531.5h0M280.9 516.0h0M284.7 524.3h0M279.4 530.8h0M277.3 521.9h0M279.7 525.6h0M282.1 521.8h0M274.8 529.9h0M280.3 520.2h0M273.4 530.1h0M279.2 523.3h0M272.4 526.3h0M274.4 526.1h0M274.7 521.0h0M282.0 525.3h0M270.4 531.0h0M282.7 516.2h0M278.3 532.0h0M277.9 528.1h0M279.5 532.7h0M281.3 530.2h0M278.5 526.9h0M279.5 516.4h0M281.6 524.6h0M280.5 523.2h0M274.2 524.0h0M280.4 515.0h0M277.3 527.8h0M278.8 526.0h0M274.7 526.9h0M275.7 522.4h0M273.8 526.3h0M269.9 529.1h0M282.2 515.8h0M275.2 522.4h0M281.8 520.3h0M273.7 530.9h0M278.1 524.7h0M285.0 523.6h0M282.6 525.3h0M288.3 520.5h0M286.6 539.2h0M282.4 531.8h0M285.6 529.2h0M290.4 529.6h0M290.1 522.6h0M288.1 538.8h0M284.7 524.2h0M282.3 536.2h0M287.6 524.4h0M286.5 529.2h0M287.6 537.3h0M282.4 532.3h0M286.5 533.7h0M288.8 528.1h0M286.4 533.6h0M289.4 532.7h0M284.8 527.2h0M285.3 532.4h0M284.8 529.5h0M291.0 527.9h0M287.6 522.5h0M288.8 525.9h0M284.7 526.4h0M284.4 531.6h0M289.0 533.5h0M289.5 521.2h0M291.4 523.0h0M285.8 536.7h0M283.3 528.9h0M290.8 529.0h0M288.7 539.8h0M286.1 537.1h0M289.3 527.0h0M284.0 530.7h0M292.1 523.3h0M291.6 526.4h0M288.3 525.8h0M287.7 525.5h0M289.9 527.0h0M282.7 530.8h0M284.4 536.6h0M291.1 526.3h0M282.4 532.9h0M280.9 533.0h0M289.4 519.4h0M292.9 522.4h0M283.5 530.3h0M284.3 529.4h0M289.3 534.6h0M286.7 530.9h0M283.2 532.8h0M286.1 538.6h0M287.0 531.1h0M289.4 521.6h0M300.4 535.3h0M295.4 534.9h0M293.3 531.6h0M296.3 523.4h0M293.9 526.7h0M295.9 535.9h0M295.6 531.5h0M299.5 531.6h0M292.4 537.6h0M301.7 531.6h0M297.3 540.6h0M294.6 537.2h0M296.5 537.9h0M289.7 535.7h0M297.0 539.6h0M296.2 535.9h0M296.8 526.1h0M294.2 537.3h0M298.3 532.1h0M296.1 534.7h0M299.6 533.0h0M295.1 528.5h0M298.6 534.8h0M294.0 527.8h0M289.6 538.3h0M298.3 532.7h0M297.2 527.8h0M300.1 530.7h0M298.5 534.4h0M297.7 535.1h0M295.3 535.5h0M299.4 536.2h0M293.4 529.2h0M298.0 535.3h0M294.2 534.1h0M300.0 531.0h0M299.2 530.9h0M295.3 537.0h0M299.3 528.9h0M295.7 534.4h0M295.4 530.6h0M296.0 528.1h0M290.5 536.3h0M298.5 528.5h0M297.1 527.7h0M301.2 530.9h0M297.7 536.7h0M294.8 533.8h0M297.7 535.1h0M298.4 540.0h0M298.4 537.9h0M299.4 528.1h0M300.4 531.6h0M303.8 531.5h0M308.6 533.9h0M305.3 540.4h0M301.0 541.5h0M306.5 531.5h0M298.6 542.9h0M307.4 534.7h0M305.2 529.7h0M304.7 534.4h0M307.5 536.1h0M306.0 529.2h0M305.4 533.2h0M306.0 530.4h0M306.0 530.2h0M303.8 545.0h0M309.1 531.4h0M305.6 539.9h0M309.0 534.7h0M301.8 532.4h0M301.5 534.9h0M304.3 531.6h0M301.4 537.7h0M303.8 538.6h0M303.1 544.9h0M300.0 538.7h0M305.3 534.7h0M308.0 530.9h0M300.8 543.6h0M301.6 538.4h0M305.2 542.0h0M304.4 539.7h0M302.1 543.8h0M303.9 535.6h0M302.0 541.2h0M306.1 535.6h0M303.7 533.5h0M299.2 540.2h0M303.3 529.1h0M302.5 532.9h0M302.5 536.6h0M314.7 538.5h0M312.6 548.9h0M309.8 535.7h0M307.5 541.1h0M310.8 538.2h0M313.2 548.0h0M308.6 535.5h0M313.4 545.3h0M312.2 544.2h0M318.9 535.3h0M315.2 538.1h0M311.9 543.7h0M307.9 542.7h0M313.8 546.7h0M309.3 539.0h0M311.2 544.0h0M309.7 537.7h0M310.0 536.9h0M317.6 535.3h0M316.2 538.2h0M307.8 542.7h0M310.2 544.9h0M311.7 547.1h0M307.9 540.4h0M311.3 536.8h0M312.3 536.4h0M310.0 536.6h0M313.4 542.2h0M314.5 545.1h0M314.3 541.1h0M310.6 540.1h0M312.5 543.0h0M313.2 546.9h0M314.1 538.0h0M313.3 545.8h0M313.8 538.7h0M314.0 542.9h0M312.1 535.8h0M314.3 540.3h0M312.6 539.8h0M308.7 544.1h0M311.0 536.0h0M308.2 538.5h0M321.6 543.2h0M322.6 544.6h0M321.9 548.7h0M319.6 545.7h0M320.7 542.0h0M321.8 536.9h0M320.6 538.6h0M320.4 543.5h0M320.5 542.9h0M317.5 550.4h0M318.6 540.0h0M318.6 547.3h0M323.1 549.2h0M317.5 544.5h0M323.7 542.7h0M323.6 541.0h0M320.9 543.8h0M323.9 543.3h0M318.8 541.1h0M320.8 538.7h0M318.2 541.3h0M323.6 546.1h0M320.8 547.2h0M322.2 546.1h0M324.5 544.1h0M325.0 543.8h0M324.7 545.0h0M323.6 545.1h0M319.1 543.4h0M322.6 544.3h0M315.9 545.7h0M324.3 541.3h0M323.3 546.0h0M317.4 549.4h0M318.0 547.6h0M318.9 546.3h0M316.7 547.6h0M316.8 546.9h0M321.8 544.8h0M330.6 544.2h0M333.9 550.0h0M330.5 550.5h0M327.6 544.9h0M327.8 543.0h0M327.7 547.9h0M333.5 550.3h0M331.2 548.1h0M332.3 541.0h0M327.1 545.1h0M329.0 541.3h0M327.5 541.0h0M326.4 542.8h0M334.0 546.1h0M331.4 542.5h0M331.3 545.9h0M326.4 542.6h0M327.7 548.7h0M330.6 545.4h0M325.1 544.4h0M330.9 545.5h0M333.9 544.7h0M330.3 550.4h0M326.0 549.0h0M326.9 548.2h0M325.5 545.9h0M332.4 545.2h0M334.0 551.0h0M324.3 548.5h0M328.7 546.6h0M333.2 546.5h0M331.2 549.6h0M325.1 546.1h0M330.8 546.4h0M328.5 548.4h0M328.8 542.5h0M329.5 538.9h0M329.3 542.1h0M331.3 548.5h0M340.0 544.2h0M335.8 544.4h0M337.3 548.5h0M339.5 544.8h0M335.5 548.3h0M338.5 549.0h0M339.0 546.2h0M340.8 544.5h0M337.5 544.2h0M339.4 543.3h0M337.5 546.2h0M338.2 546.2h0M337.5 543.8h0M335.1 541.7h0M339.9 548.6h0M339.8 548.5h0M339.9 548.5h0M340.6 542.5h0M339.2 547.2h0M335.7 547.2h0M342.9 550.7h0M342.3 551.8h0M341.6 546.6h0M340.7 547.2h0M340.5 546.4h0M342.4 553.0h0M347.9 550.4h0M340.9 550.7h0M344.5 549.8h0M346.9 550.3h0M341.6 551.3h0M340.3 550.2h0M344.1 548.0h0M339.7 546.1h0M344.9 550.2h0M347.1 550.0h0M342.7 553.0h0M339.1 547.8h0M342.7 554.0h0M346.1 548.4h0M347.3 549.8h0M344.9 549.4h0M347.0 555.9h0M349.1 556.0h0M345.8 560.3h0M347.0 555.5h0M348.9 559.0h0M347.5 553.1h0M351.3 558.6h0M349.9 557.8h0M348.9 554.5h0M347.1 557.6h0M346.8 559.8h0M350.1 556.9h0M348.6 553.2h0M343.9 554.1h0M346.7 558.6h0M350.3 557.7h0M349.4 557.8h0M348.5 559.4h0M345.1 553.8h0M345.3 558.7h0M347.9 560.7h0M351.8 563.6h0M355.6 567.1h0M349.9 561.6h0M351.1 561.5h0M353.6 561.8h0M353.2 564.1h0M352.3 562.4h0M356.7 565.1h0M350.7 558.5h0M352.2 562.5h0M353.0 565.5h0M350.8 559.9h0M353.7 562.7h0M356.0 566.9h0M352.4 565.5h0M351.1 562.6h0M350.8 562.8h0M352.1 561.3h0M354.0 563.9h0M355.2 567.3h0M351.8 561.4h0M354.5 565.8h0M354.7 561.5h0M350.5 560.5h0" fill="none" stroke="#00ff00" stroke-width="3" stroke-linecap="round"/><path d="M616.5 691.5L621.7 690.5" stroke="#0000ff" stroke-width="5.9" stroke-linecap="round"/><path d="M621.7 690.5L630.0 692.5" stroke="#0000ff" stroke-width="5.2" stroke-linecap="round"/><path d="M630.0 692.5L643.4 693.1" stroke="#0000ff" stroke-width="5.6" stroke-linecap="round"/><path d="M643.4 693.1L652.0 700.4" stroke="#0000ff" stroke-width="6.7" stroke-linecap="round"/><path d="M652.0 700.4L660.7 706.2" stroke="#0000ff" stroke-width="7.1" stroke-linecap="round"/><path d="M660.7 706.2L672.3 710.5" stroke="#0000ff" stroke-width="7.9" stroke-linecap="round"/><path d="M672.3 710.5L682.4 713.4" stroke="#0000ff" stroke-width="9.5" stroke-linecap="round"/><path d="M682.4 713.4L691.1 719.2" stroke="#0000ff" stroke-width="10.7" stroke-linecap="round"/><path d="M691.1 719.2L698.3 727.8" stroke="#0000ff" stroke-width="11.5" stroke-linecap="round"/><path d="M698.3 727.8L707.0 735.0" stroke="#0000ff" stroke-width="12.3" stroke-linecap="round"/><path d="M707.0 735.0L714.2 742.3" stroke="#0000ff" stroke-width="12.7" stroke-linecap="round"/><path d="M714.2 742.3L722.9 745.2" stroke="#0000ff" stroke-width="12.3" stroke-linecap="round"/><path d="M722.9 745.2L730.2 749.5" stroke="#0000ff" stroke-width="11.5" stroke-linecap="round"/><path d="M730.2 749.5L738.8 753.9" stroke="#0000ff" stroke-width="11.1" stroke-linecap="round"/><path d="M738.8 753.9L750.4 758.2" stroke="#0000ff" stroke-width="10.7" stroke-linecap="round"/><path d="M750.4 758.2L760.5 761.1" stroke="#0000ff" stroke-width="9.5" stroke-linecap="round"/><path d="M760.5 761.1L767.7 766.9" stroke="#0000ff" stroke-width="8.2" stroke-linecap="round"/><path d="M767.7 766.9L777.9 773.4" stroke="#0000ff" stroke-width="7.1" stroke-linecap="round"/><path d="M618.0 689.4h0M621.6 690.5h0M617.4 693.0h0M618.0 692.8h0M621.7 693.5h0M621.7 692.5h0M622.0 693.9h0M620.7 693.2h0M617.7 692.6h0M617.6 689.5h0M618.4 694.0h0M620.7 691.5h0M617.6 689.3h0M619.8 691.1h0M620.9 692.9h0M620.9 691.1h0M617.6 690.3h0M617.2 695.0h0M624.7 690.8h0M627.1 690.1h0M629.0 689.1h0M622.6 690.5h0M622.8 690.7h0M621.7 690.9h0M628.8 692.7h0M627.5 693.2h0M626.1 690.0h0M628.8 692.6h0M628.0 694.5h0M621.7 693.4h0M624.1 689.0h0M629.4 691.8h0M621.9 689.5h0M629.0 693.5h0M626.7 692.5h0M623.5 692.0h0M628.9 694.1h0M626.5 688.6h0M624.0 689.0h0M628.0 689.1h0M624.3 689.9h0M627.3 692.6h0M637.1 691.8h0M629.8 690.5h0M637.8 693.7h0M637.3 690.7h0M635.7 693.6h0M636.1 690.7h0M635.9 692.8h0M635.7 692.3h0M638.5 692.4h0M637.7 695.0h0M638.7 696.4h0M630.9 694.3h0M631.2 691.6h0M637.5 694.3h0M634.7 692.0h0M641.9 694.2h0M637.1 692.7h0M637.0 694.2h0M631.6 691.4h0M640.9 695.5h0M632.7 691.1h0M642.3 692.8h0M642.6 694.7h0M633.3 691.5h0M643.4 690.8h0M642.8 691.7h0M637.2 690.9h0M631.3 690.4h0M631.4 691.6h0M633.4 693.0h0M636.2 691.5h0M636.5 689.7h0M640.1 695.9h0M635.0 692.0h0M631.1 694.3h0M636.6 692.4h0M631.7 690.6h0M636.1 694.6h0M634.2 695.1h0M641.8 695.2h0M642.0 693.6h0M644.6 691.9h0M641.5 696.8h0M652.1 696.4h0M649.6 698.2h0M645.2 697.3h0M644.5 695.8h0M645.3 694.4h0M648.1 698.1h0M648.0 694.7h0M649.5 699.8h0M645.0 697.4h0M650.2 699.3h0M642.6 696.4h0M644.6 692.1h0M654.8 697.1h0M647.6 697.3h0M645.4 693.2h0M650.0 700.3h0M643.3 694.7h0M648.1 693.6h0M645.3 694.4h0M647.6 698.4h0M646.8 699.5h0M651.9 695.1h0M643.7 693.8h0M644.2 695.7h0M651.3 695.6h0M644.4 696.6h0M645.7 694.9h0M650.2 700.4h0M646.5 693.0h0M644.2 694.6h0M645.2 692.6h0M646.9 700.9h0M647.8 696.3h0M649.7 699.2h0M644.9 691.1h0M651.6 703.6h0M659.5 703.1h0M652.1 699.4h0M661.3 701.8h0M655.7 704.5h0M651.3 704.7h0M659.1 706.8h0M658.2 706.6h0M656.9 700.6h0M656.3 696.9h0M653.4 699.8h0M659.6 703.7h0M655.8 708.3h0M652.7 702.7h0M659.0 704.3h0M661.2 702.3h0M657.4 703.4h0M655.8 696.7h0M659.8 702.5h0M656.6 708.6h0M655.7 704.0h0M660.7 702.8h0M660.1 701.4h0M658.6 706.9h0M651.2 702.1h0M654.1 701.0h0M652.4 707.1h0M652.3 707.5h0M650.5 703.7h0M659.4 706.2h0M654.4 705.2h0M655.1 703.3h0M654.6 697.3h0M654.6 697.2h0M652.7 703.4h0M655.0 702.0h0M657.8 698.0h0M658.1 707.5h0M650.6 704.3h0M667.0 707.7h0M666.4 709.2h0M660.7 705.2h0M664.6 703.0h0M671.2 710.8h0M665.5 712.4h0M664.7 704.3h0M664.5 704.4h0M670.5 712.1h0M667.8 705.3h0M669.1 707.6h0M666.9 704.7h0M664.0 705.4h0M662.3 706.7h0M669.4 706.2h0M667.1 708.5h0M661.6 705.5h0M667.0 706.3h0M666.2 716.4h0M671.8 708.8h0M661.3 705.9h0M664.3 704.9h0M662.7 710.6h0M660.8 705.5h0M669.1 712.8h0M670.2 710.2h0M669.2 706.8h0M671.2 707.5h0M670.6 706.0h0M672.6 705.7h0M661.0 706.1h0M672.7 706.9h0M668.6 705.0h0M668.4 715.5h0M663.5 706.0h0M663.7 704.0h0M665.4 709.3h0M666.2 713.6h0M662.6 705.5h0M665.5 706.9h0M670.2 703.1h0M663.3 710.1h0M668.8 715.6h0M667.0 715.0h0M666.4 714.0h0M670.8 712.4h0M670.6 708.0h0M670.6 702.1h0M661.3 708.4h0M665.7 709.3h0M680.7 712.3h0M676.1 717.5h0M674.4 709.1h0M678.0 708.2h0M677.6 710.1h0M673.6 713.6h0M674.5 706.1h0M678.8 717.6h0M680.6 711.3h0M672.5 709.1h0M674.2 711.3h0M679.7 718.1h0M676.0 715.0h0M682.6 709.2h0M676.3 714.7h0M673.1 715.9h0M684.1 706.2h0M678.3 713.8h0M675.2 714.2h0M681.4 715.1h0M674.9 713.7h0M675.9 711.1h0M674.9 711.2h0M675.1 707.8h0M673.5 714.7h0M676.8 707.4h0M675.1 714.7h0M678.8 706.9h0M678.2 710.3h0M674.9 712.1h0M681.1 705.1h0M672.9 711.5h0M673.2 711.4h0M682.2 708.6h0M671.8 714.3h0M676.2 710.3h0M670.9 714.7h0M678.1 711.9h0M680.1 716.8h0M680.3 720.8h0M672.7 709.2h0M674.7 713.1h0M677.5 718.0h0M680.0 716.3h0M682.2 710.8h0M680.1 711.2h0M683.0 708.6h0M672.2 708.8h0M681.1 705.8h0M675.1 709.8h0M672.5 712.6h0M680.5 717.1h0M689.0 722.6h0M692.8 716.1h0M693.0 717.9h0M686.9 718.1h0M683.7 718.0h0M685.9 719.5h0M691.3 715.8h0M683.0 717.6h0M689.0 714.2h0M685.7 715.7h0M685.7 716.0h0M684.3 714.3h0M689.8 720.1h0M684.6 717.5h0M678.3 718.7h0M682.9 715.9h0M686.1 717.8h0M687.7 719.3h0M687.3 714.9h0M682.4 714.7h0M686.0 710.9h0M687.4 711.1h0M684.8 718.7h0M687.1 713.8h0M684.7 718.9h0M686.4 717.0h0M689.4 722.0h0M687.9 718.7h0M689.4 715.1h0M683.2 718.2h0M691.9 717.4h0M683.8 720.7h0M691.7 718.2h0M688.3 709.5h0M687.4 710.4h0M688.7 714.7h0M691.4 715.4h0M689.6 714.3h0M687.8 720.6h0M685.8 717.9h0M688.7 717.2h0M684.1 715.9h0M686.5 717.8h0M683.5 716.9h0M687.8 714.0h0M689.3 715.6h0M692.2 717.2h0M687.5 712.4h0M683.3 718.7h0M687.4 717.1h0M692.1 716.6h0M684.0 714.1h0M682.5 715.1h0M688.5 711.5h0M689.0 721.9h0M683.3 717.5h0M687.8 727.4h0M694.7 730.0h0M700.3 722.6h0M694.9 729.1h0M697.5 721.1h0M701.4 722.9h0M701.2 718.0h0M702.6 719.5h0M693.8 720.1h0M690.9 734.5h0M688.3 733.6h0M697.4 723.6h0M693.9 723.7h0M696.0 716.7h0M687.8 729.2h0M689.8 722.8h0M691.7 722.8h0M689.5 732.6h0M691.8 728.3h0M691.7 730.7h0M689.4 728.9h0M695.0 726.4h0M691.4 722.2h0M705.4 721.4h0M699.7 715.9h0M688.6 728.2h0M689.6 727.4h0M701.5 719.8h0M691.2 730.7h0M695.6 723.5h0M689.0 733.1h0M694.0 727.1h0M693.1 722.0h0M700.2 716.2h0M694.6 717.6h0M689.9 723.0h0M691.2 731.0h0M698.5 717.7h0M697.6 720.1h0M701.9 723.8h0M691.4 728.8h0M690.3 725.6h0M700.9 721.8h0M697.8 727.3h0M698.1 727.2h0M689.0 727.3h0M701.6 719.8h0M693.5 721.0h0M694.7 727.4h0M685.6 726.2h0M686.4 727.6h0M704.2 720.6h0M697.6 725.4h0M693.4 730.2h0M696.5 718.1h0M699.4 722.4h0M689.2 730.6h0M704.9 720.0h0M695.6 726.5h0M697.9 721.3h0M689.4 720.7h0M696.2 720.8h0M696.7 727.7h0M692.6 722.3h0M689.3 728.2h0M705.4 734.4h0M697.4 733.7h0M706.2 736.9h0M700.5 731.6h0M700.3 728.9h0M704.1 731.4h0M704.6 733.8h0M703.8 721.5h0M701.3 736.3h0M701.5 740.7h0M704.4 736.2h0M700.6 727.9h0M700.5 729.4h0M697.8 729.1h0M701.0 733.5h0M704.4 728.1h0M702.6 737.5h0M699.3 734.9h0M700.0 729.3h0M698.0 733.5h0M711.3 729.1h0M699.2 735.0h0M704.5 727.4h0M700.8 733.6h0M706.7 731.4h0M703.9 725.2h0M698.7 734.5h0M707.0 725.5h0M706.2 726.7h0M707.4 729.5h0M704.3 728.6h0M704.6 728.2h0M700.8 740.4h0M697.9 730.6h0M697.7 729.3h0M694.4 732.6h0M705.7 727.0h0M706.7 733.7h0M704.4 733.6h0M700.2 735.3h0M698.8 737.0h0M700.7 729.8h0M699.4 733.5h0M703.0 723.0h0M701.8 725.0h0M703.1 737.4h0M702.6 723.2h0M699.9 729.8h0M708.3 729.0h0M701.9 725.7h0M698.6 733.1h0M702.6 728.9h0M711.0 728.5h0M708.7 731.5h0M698.0 733.2h0M698.8 734.8h0M707.1 729.8h0M695.9 733.1h0M706.6 734.1h0M709.1 732.5h0M702.8 737.1h0M710.0 729.2h0M710.3 730.0h0M704.0 726.1h0M703.5 723.5h0M707.7 726.4h0M707.3 729.6h0M703.4 730.3h0M700.3 727.2h0M707.7 727.8h0M711.9 734.5h0M718.0 731.6h0M709.2 747.6h0M717.9 731.6h0M711.0 736.2h0M713.6 740.1h0M706.2 742.0h0M706.4 745.1h0M702.3 740.6h0M710.4 735.0h0M708.3 735.4h0M717.6 739.6h0M714.2 728.5h0M715.1 731.9h0M713.4 736.3h0M709.2 734.8h0M716.6 738.4h0M709.5 736.2h0M715.4 733.0h0M715.5 730.6h0M715.9 730.0h0M704.0 738.3h0M709.4 744.7h0M714.1 731.0h0M709.3 738.7h0M712.1 737.1h0M712.1 742.2h0M717.5 731.3h0M714.1 742.2h0M717.0 738.8h0M709.6 739.9h0M706.5 737.5h0M701.3 741.4h0M713.0 735.7h0M714.6 730.7h0M705.9 736.6h0M708.8 746.2h0M712.9 734.2h0M711.9 736.7h0M708.6 744.6h0M712.9 741.5h0M708.5 736.9h0M706.8 746.0h0M706.8 735.1h0M713.3 742.5h0M711.3 743.1h0M706.4 746.7h0M712.3 741.1h0M704.9 737.0h0M701.9 744.6h0M711.7 737.0h0M718.8 734.3h0M703.4 743.2h0M709.5 745.6h0M715.3 738.9h0M708.0 737.6h0M702.0 742.2h0M716.6 737.9h0M715.6 736.0h0M707.5 745.8h0M705.4 738.4h0M711.9 740.5h0M715.9 734.5h0M706.1 736.1h0M708.3 734.4h0M717.8 743.0h0M719.3 749.6h0M715.7 747.0h0M717.7 747.4h0M719.1 753.7h0M721.7 741.7h0M722.8 742.2h0M716.7 740.5h0M719.1 748.6h0M717.7 741.8h0M721.9 741.4h0M723.2 737.0h0M719.6 735.8h0M719.3 742.8h0M724.1 737.4h0M720.6 740.2h0M717.0 739.8h0M720.3 740.0h0M719.9 742.1h0M723.7 736.4h0M719.0 738.2h0M714.3 742.2h0M721.9 740.9h0M717.2 740.5h0M716.7 747.3h0M716.0 739.6h0M718.9 751.6h0M721.6 745.2h0M721.7 738.8h0M719.4 739.5h0M720.0 752.9h0M722.8 739.0h0M720.2 752.7h0M722.3 745.1h0M723.1 742.2h0M716.5 746.8h0M714.7 741.2h0M713.6 745.9h0M716.0 746.4h0M720.8 739.8h0M716.7 745.9h0M717.5 738.2h0M715.1 748.8h0M718.0 749.6h0M718.9 752.4h0M723.6 745.0h0M723.0 745.0h0M717.7 748.2h0M713.9 748.1h0M715.3 748.5h0M719.2 746.3h0M718.9 747.1h0M718.2 739.1h0M714.2 746.1h0M720.2 742.7h0M719.8 744.2h0M715.8 745.5h0M720.1 750.6h0M723.7 746.5h0M729.6 746.1h0M730.4 740.9h0M722.2 750.8h0M727.5 744.2h0M722.1 755.3h0M725.9 750.3h0M720.5 748.0h0M724.8 743.2h0M725.5 745.2h0M725.4 752.6h0M722.5 747.6h0M728.9 749.8h0M723.8 746.6h0M729.3 751.0h0M725.7 752.2h0M724.0 747.5h0M731.7 744.5h0M721.9 749.3h0M731.3 740.7h0M731.0 742.8h0M729.3 741.7h0M726.1 742.9h0M723.7 746.9h0M729.0 747.5h0M730.0 748.5h0M730.0 746.6h0M725.3 750.5h0M728.1 750.4h0M730.1 748.4h0M727.7 748.8h0M720.1 750.5h0M723.7 751.2h0M728.3 751.8h0M724.3 745.4h0M727.2 752.6h0M725.1 752.2h0M732.0 746.8h0M727.9 743.0h0M724.6 746.9h0M726.9 748.1h0M727.0 752.2h0M727.9 745.0h0M728.5 742.6h0M730.8 743.9h0M729.0 749.6h0M727.7 748.5h0M725.0 745.3h0M729.4 750.4h0M735.9 755.8h0M734.3 753.8h0M732.1 759.1h0M730.5 753.4h0M728.2 753.2h0M738.5 748.2h0M731.1 750.8h0M729.0 752.4h0M732.6 749.9h0M736.3 755.9h0M731.2 754.2h0M734.6 750.4h0M729.3 756.0h0M734.2 757.7h0M733.0 745.7h0M734.0 747.2h0M731.5 749.4h0M733.8 757.5h0M735.6 749.7h0M734.9 759.3h0M733.1 746.8h0M732.5 745.9h0M735.1 760.9h0M734.0 746.3h0M734.8 744.9h0M735.5 758.1h0M731.2 747.8h0M735.4 758.7h0M734.3 749.5h0M731.2 748.2h0M731.2 762.7h0M732.0 748.2h0M734.0 753.5h0M735.9 751.0h0M739.9 749.7h0M734.5 758.8h0M732.6 746.9h0M731.0 759.5h0M738.0 752.1h0M739.8 749.5h0M732.1 757.2h0M736.3 747.8h0M735.2 749.2h0M728.4 753.9h0M736.7 751.0h0M734.7 743.6h0M732.3 754.4h0M730.9 755.7h0M730.5 748.7h0M730.9 750.0h0M730.8 756.8h0M729.7 749.5h0M734.3 752.4h0M739.6 749.7h0M744.3 762.8h0M741.1 750.9h0M741.4 754.3h0M737.9 760.1h0M744.0 760.6h0M748.1 755.9h0M743.1 755.5h0M746.4 755.1h0M743.5 750.7h0M744.5 760.3h0M748.7 753.0h0M751.7 751.6h0M751.6 753.6h0M739.5 750.8h0M748.8 754.0h0M739.0 758.2h0M746.3 761.6h0M742.0 756.0h0M739.6 761.1h0M738.4 762.9h0M743.9 754.5h0M745.4 753.6h0M738.8 757.6h0M744.3 753.4h0M742.8 759.3h0M747.9 749.7h0M744.0 747.0h0M748.6 751.2h0M743.5 757.1h0M751.5 751.2h0M739.9 752.2h0M750.3 756.1h0M747.5 763.9h0M743.7 757.3h0M744.7 757.3h0M751.1 752.3h0M741.4 759.8h0M753.1 749.2h0M747.4 757.8h0M747.5 756.6h0M739.1 757.5h0M742.8 755.1h0M744.0 762.8h0M740.8 753.3h0M742.7 758.4h0M747.6 754.9h0M748.6 762.9h0M746.5 760.2h0M744.0 762.5h0M749.9 759.9h0M744.0 758.1h0M742.3 751.5h0M741.3 757.2h0M745.5 757.3h0M748.1 754.5h0M750.8 757.0h0M743.2 759.4h0M742.9 758.1h0M743.4 753.6h0M750.4 753.7h0M746.6 756.0h0M739.4 756.1h0M749.1 753.6h0M742.6 756.6h0M743.5 759.1h0M746.4 755.1h0M740.0 753.6h0M758.3 755.2h0M752.4 764.8h0M754.5 759.2h0M761.7 758.3h0M752.9 764.0h0M756.8 760.2h0M756.7 753.7h0M754.3 754.6h0M749.7 765.9h0M757.8 758.8h0M752.2 764.0h0M755.9 761.7h0M753.1 753.1h0M754.3 760.3h0M758.6 761.1h0M751.5 757.6h0M758.1 755.1h0M755.2 764.2h0M754.1 751.3h0M752.9 764.6h0M753.9 764.0h0M748.3 765.9h0M754.3 748.8h0M751.9 756.0h0M757.5 758.0h0M751.5 756.7h0M758.8 762.7h0M753.8 750.8h0M758.7 758.5h0M749.7 760.6h0M757.6 754.9h0M754.9 758.3h0M754.8 752.3h0M761.8 757.1h0M754.9 759.3h0M754.8 763.4h0M750.5 761.5h0M760.0 761.5h0M757.6 762.5h0M750.5 761.5h0M748.1 766.7h0M758.5 763.7h0M753.9 748.2h0M757.3 753.4h0M751.9 758.4h0M756.1 763.2h0M756.0 754.2h0M758.4 764.0h0M748.1 767.7h0M748.2 766.7h0M751.7 758.3h0M764.1 759.9h0M765.6 767.6h0M767.1 762.2h0M760.4 770.4h0M764.1 759.7h0M760.8 766.2h0M761.8 761.7h0M763.3 758.4h0M771.0 761.2h0M765.5 762.1h0M763.9 767.7h0M766.6 762.4h0M768.0 764.7h0M762.6 767.8h0M763.4 763.8h0M764.3 760.2h0M757.0 766.2h0M760.8 762.5h0M767.4 765.4h0M765.6 762.4h0M757.7 764.5h0M759.8 763.4h0M762.9 770.2h0M770.9 762.5h0M761.6 768.2h0M761.9 759.6h0M760.6 768.9h0M768.6 764.8h0M764.6 760.0h0M770.1 760.2h0M769.0 760.4h0M763.6 760.5h0M760.5 766.2h0M762.8 762.4h0M762.7 761.0h0M761.2 762.4h0M760.2 762.9h0M764.1 763.0h0M769.0 762.0h0M771.9 768.0h0M774.6 774.9h0M773.6 770.8h0M770.2 768.8h0M769.1 771.6h0M774.4 773.0h0M776.7 772.7h0M776.9 768.0h0M773.0 772.3h0M775.0 768.9h0M777.9 771.5h0M777.7 770.9h0M771.2 770.3h0M772.4 768.1h0M778.0 768.4h0M772.1 767.1h0M769.8 769.0h0M771.9 769.2h0M771.8 766.2h0M771.9 770.7h0M770.5 771.4h0M772.6 765.9h0M775.4 772.6h0M778.5 770.4h0M772.5 768.4h0M770.3 772.8h0M770.3 767.4h0M767.3 770.8h0M773.2 773.0h0M770.0 770.8h0M769.3 770.9h0M774.8 775.6h0M774.6 774.8h0M776.2 774.3h0M772.2 771.1h0M772.9 768.0h0M771.1 772.5h0M767.6 768.8h0M777.8 768.9h0M772.8 769.0h0M776.4 770.2h0M773.3 771.4h0M773.1 771.4h0M770.4 766.4h0" fill="none" stroke="#0000ff" stroke-width="3" stroke-linecap="round"/><path d="M467.3 599.5L476.0 603.9" stroke="#ffa858" stroke-width="2.6" stroke-linecap="round"/><path d="M476.0 603.9L486.0 607.0" stroke="#ffa858" stroke-width="3.1" stroke-linecap="round"/><path d="M486.0 607.0L490.4 608.2" stroke="#ffa858" stroke-width="3.7" stroke-linecap="round"/><path d="M490.4 608.2L494.5 607.4" stroke="#ffa858" stroke-width="4.9" stroke-linecap="round"/><path d="M494.5 607.4L498.8 616.0" stroke="#ffa858" stroke-width="5.6" stroke-linecap="round"/><path d="M498.8 616.0L508.9 618.9" stroke="#ffa858" stroke-width="5.6" stroke-linecap="round"/><path d="M508.9 618.9L517.6 624.7" stroke="#ffa858" stroke-width="6.2" stroke-linecap="round"/><path d="M517.6 624.7L523.4 629.0" stroke="#ffa858" stroke-width="7.6" stroke-linecap="round"/><path d="M523.4 629.0L529.2 636.3" stroke="#ffa858" stroke-width="8.7" stroke-linecap="round"/><path d="M529.2 636.3L537.8 642.0" stroke="#ffa858" stroke-width="9.4" stroke-linecap="round"/><path d="M537.8 642.0L548.0 647.8" stroke="#ffa858" stroke-width="10.1" stroke-linecap="round"/><path d="M548.0 647.8L558.0 652.2" stroke="#ffa858" stroke-width="10.4" stroke-linecap="round"/><path d="M558.0 652.2L569.7 656.5" stroke="#ffa858" stroke-width="10.1" stroke-linecap="round"/><path d="M569.7 656.5L581.2 660.9" stroke="#ffa858" stroke-width="9.7" stroke-linecap="round"/><path d="M581.2 660.9L592.8 666.6" stroke="#ffa858" stroke-width="9.4" stroke-linecap="round"/><path d="M592.8 666.6L604.4 672.4" stroke="#ffa858" stroke-width="8.3" stroke-linecap="round"/><path d="M604.4 672.4L613.0 676.8" stroke="#ffa858" stroke-width="6.9" stroke-linecap="round"/><path d="M613.0 676.8L617.4 682.5" stroke="#ffa858" stroke-width="5.6" stroke-linecap="round"/><path d="M617.4 682.5L624.6 686.9" stroke="#ffa858" stroke-width="4.7" stroke-linecap="round"/><path d="M624.6 686.9L631.8 694.1" stroke="#ffa858" stroke-width="4.4" stroke-linecap="round"/><path d="M631.8 694.1L639.0 699.9" stroke="#ffa858" stroke-width="4.6" stroke-linecap="round"/><path d="M639.0 699.9L646.3 705.7" stroke="#ffa858" stroke-width="4.6" stroke-linecap="round"/><path d="M646.3 705.7L648.4 708.3" stroke="#ffa858" stroke-width="3.9" stroke-linecap="round"/><path d="M468.9 600.6h0M474.0 602.5h0M475.3 602.7h0M475.2 602.3h0M473.5 604.4h0M475.6 603.9h0M470.1 600.6h0M474.9 604.6h0M473.0 602.3h0M467.9 599.6h0M472.3 602.4h0M471.9 601.7h0M467.6 599.8h0M469.0 600.1h0M468.2 599.4h0M477.6 604.5h0M480.2 606.1h0M478.3 604.1h0M478.3 604.5h0M482.7 605.1h0M482.3 605.2h0M476.7 604.2h0M482.0 607.4h0M482.7 606.8h0M482.8 604.6h0M479.1 605.1h0M480.6 604.5h0M477.5 603.3h0M485.4 606.5h0M486.4 607.7h0M484.9 607.8h0M482.2 607.6h0M484.7 607.8h0M489.3 607.0h0M485.7 607.0h0M489.9 608.5h0M489.0 608.2h0M489.5 608.3h0M486.5 609.7h0M486.9 606.2h0M488.0 608.6h0M490.2 608.4h0M489.9 606.3h0M488.6 606.2h0M491.1 605.6h0M492.6 610.3h0M494.2 608.4h0M495.3 609.1h0M494.2 607.0h0M492.9 610.0h0M493.3 606.9h0M494.4 608.0h0M494.7 608.0h0M494.4 607.6h0M493.2 608.8h0M491.5 609.0h0M496.6 609.4h0M493.6 612.0h0M499.6 614.5h0M499.1 612.9h0M496.6 609.6h0M495.8 611.1h0M495.2 607.7h0M494.4 609.4h0M496.4 616.7h0M494.4 613.6h0M497.9 609.9h0M494.1 610.6h0M498.6 615.3h0M495.7 607.8h0M500.9 614.8h0M499.0 615.4h0M496.9 614.1h0M496.7 608.9h0M496.8 608.2h0M493.6 607.8h0M494.9 608.7h0M499.0 610.9h0M497.6 611.4h0M495.5 609.1h0M500.5 614.9h0M500.3 613.6h0M494.9 610.5h0M494.7 609.4h0M502.1 616.8h0M507.6 615.5h0M498.3 618.4h0M502.0 621.2h0M504.6 617.1h0M505.7 620.4h0M499.9 619.9h0M501.6 620.4h0M507.1 614.6h0M507.3 619.8h0M503.2 615.1h0M503.3 616.7h0M503.8 613.9h0M501.5 618.3h0M508.2 618.6h0M508.5 618.2h0M502.4 613.4h0M506.6 616.8h0M506.6 615.1h0M505.7 617.6h0M500.2 616.6h0M502.1 619.3h0M500.0 620.5h0M504.8 619.8h0M507.2 615.7h0M506.9 616.7h0M507.7 618.3h0M504.6 618.7h0M502.6 619.3h0M507.1 619.3h0M508.6 619.9h0M512.8 619.8h0M511.3 618.2h0M508.8 618.7h0M513.1 620.0h0M513.2 624.4h0M514.2 621.8h0M510.5 621.4h0M511.0 620.6h0M519.7 620.8h0M511.6 621.4h0M513.8 620.9h0M508.9 622.4h0M512.7 619.6h0M510.4 620.8h0M508.7 621.5h0M516.0 622.8h0M512.3 618.2h0M511.0 622.6h0M512.7 627.3h0M509.1 619.7h0M515.9 626.3h0M509.7 620.8h0M512.5 625.0h0M514.3 624.4h0M510.5 619.3h0M514.4 619.7h0M512.8 628.6h0M512.6 619.0h0M509.6 619.6h0M512.5 629.1h0M515.9 626.1h0M512.5 622.5h0M509.6 622.6h0M511.6 617.9h0M523.7 627.0h0M522.2 629.8h0M519.5 628.8h0M524.2 622.3h0M520.9 630.4h0M517.1 629.0h0M518.0 624.8h0M522.5 628.8h0M519.2 627.0h0M523.3 627.3h0M519.5 624.3h0M521.1 630.4h0M518.7 630.8h0M518.3 625.4h0M524.6 625.9h0M523.0 627.7h0M519.9 626.0h0M517.5 628.6h0M517.1 631.1h0M522.7 626.6h0M523.9 626.3h0M521.8 628.3h0M517.3 628.2h0M520.0 627.0h0M517.1 626.2h0M522.8 626.4h0M524.7 626.6h0M522.6 624.4h0M517.5 632.0h0M529.8 632.2h0M533.1 632.9h0M528.4 632.9h0M528.7 633.5h0M528.7 634.9h0M521.0 633.6h0M530.4 628.4h0M526.4 628.0h0M521.6 630.6h0M524.8 632.3h0M530.4 630.3h0M531.0 634.2h0M528.2 632.3h0M529.7 633.6h0M522.7 632.1h0M527.8 634.9h0M523.6 634.7h0M528.6 628.7h0M525.6 637.4h0M525.2 633.2h0M526.5 628.2h0M525.5 635.8h0M527.9 634.8h0M524.6 629.6h0M526.8 627.6h0M525.3 635.6h0M523.5 632.3h0M526.5 627.9h0M525.8 638.3h0M525.6 630.2h0M527.8 637.3h0M527.1 634.3h0M523.9 641.0h0M526.6 631.1h0M526.5 636.6h0M524.8 634.5h0M527.1 632.6h0M527.8 629.3h0M523.1 635.9h0M527.9 630.7h0M525.6 633.2h0M524.2 630.3h0M530.8 639.4h0M531.6 644.9h0M535.5 628.8h0M529.7 640.3h0M535.7 636.3h0M534.6 636.0h0M532.7 646.2h0M533.8 636.9h0M534.2 638.8h0M533.7 643.8h0M529.3 641.9h0M535.7 634.9h0M526.5 641.0h0M537.4 640.4h0M535.9 633.6h0M537.4 640.5h0M529.9 640.8h0M538.0 636.1h0M537.5 637.6h0M532.5 642.8h0M531.4 634.8h0M535.7 635.5h0M537.4 640.3h0M530.3 643.4h0M537.2 642.0h0M534.8 631.0h0M533.0 641.6h0M529.3 641.8h0M534.6 639.1h0M531.9 640.5h0M538.7 637.8h0M538.9 639.6h0M535.6 642.2h0M536.5 642.1h0M535.0 634.6h0M535.8 643.8h0M533.1 640.2h0M533.6 629.6h0M539.4 639.7h0M532.8 645.0h0M535.6 644.1h0M535.6 632.3h0M534.1 637.6h0M538.9 639.2h0M530.8 633.1h0M535.9 636.5h0M525.1 642.8h0M533.2 638.1h0M537.3 636.9h0M545.4 640.2h0M548.4 643.2h0M537.1 642.9h0M538.4 650.2h0M545.1 641.8h0M547.1 647.9h0M544.2 644.7h0M546.3 639.2h0M545.3 648.7h0M541.6 637.9h0M536.8 645.1h0M548.9 642.4h0M537.2 645.8h0M542.8 650.9h0M542.6 648.4h0M538.9 650.2h0M542.7 639.1h0M540.5 649.3h0M540.5 652.1h0M544.2 651.1h0M539.7 646.6h0M541.6 647.6h0M547.1 638.7h0M543.7 645.4h0M540.2 645.7h0M544.2 644.9h0M543.7 642.4h0M541.5 639.0h0M541.5 642.7h0M539.9 648.0h0M539.2 644.9h0M538.5 645.6h0M545.5 642.9h0M540.1 645.8h0M545.6 649.2h0M545.3 647.1h0M549.6 644.0h0M546.5 651.3h0M537.4 649.9h0M541.3 653.1h0M544.6 652.6h0M545.2 647.9h0M537.5 646.1h0M545.4 640.1h0M544.5 641.3h0M545.5 653.0h0M547.6 638.6h0M546.8 640.4h0M548.5 640.6h0M539.1 648.6h0M547.0 643.3h0M544.7 644.2h0M539.7 652.5h0M539.1 640.1h0M537.5 648.4h0M541.8 647.9h0M538.3 648.5h0M540.4 644.9h0M536.3 649.0h0M547.3 641.1h0M548.3 653.2h0M552.4 650.6h0M548.6 648.7h0M551.1 648.3h0M549.5 652.2h0M553.8 647.6h0M550.3 643.8h0M551.0 651.0h0M550.1 652.7h0M552.4 644.2h0M553.6 656.2h0M559.3 644.1h0M554.6 645.9h0M558.2 645.3h0M552.0 641.2h0M552.1 657.0h0M557.0 650.4h0M553.5 656.9h0M554.6 651.6h0M546.1 651.5h0M555.9 647.6h0M549.6 642.6h0M547.5 653.1h0M559.4 648.2h0M551.8 649.2h0M550.0 643.7h0M550.9 653.2h0M553.2 657.1h0M547.7 654.8h0M552.4 652.6h0M548.5 648.5h0M548.1 649.8h0M555.3 654.7h0M555.9 650.7h0M552.5 652.9h0M551.2 649.1h0M551.2 653.8h0M555.2 649.1h0M553.6 651.9h0M557.5 647.3h0M559.6 646.3h0M551.1 651.9h0M551.0 642.6h0M559.2 645.4h0M555.0 649.1h0M556.0 646.4h0M555.1 657.3h0M549.1 646.9h0M555.7 649.1h0M547.6 649.7h0M556.5 654.8h0M553.8 649.1h0M555.9 647.5h0M553.0 646.9h0M547.1 650.9h0M545.9 654.3h0M548.5 653.8h0M552.5 649.0h0M563.4 656.1h0M563.3 643.1h0M556.2 658.4h0M564.2 651.1h0M570.1 650.1h0M569.3 657.0h0M567.9 658.9h0M566.9 652.8h0M562.1 646.0h0M561.6 646.9h0M564.9 656.3h0M569.9 650.6h0M566.2 661.8h0M562.4 655.7h0M567.1 653.6h0M566.8 655.6h0M561.1 646.0h0M558.0 659.9h0M566.8 654.0h0M558.6 652.8h0M569.6 656.5h0M563.8 649.6h0M568.1 656.0h0M571.4 652.0h0M565.7 658.4h0M564.3 651.3h0M567.6 656.3h0M557.0 654.9h0M566.5 661.0h0M568.0 653.1h0M568.1 654.1h0M566.7 663.4h0M566.0 652.7h0M557.6 655.1h0M566.4 656.3h0M561.0 646.6h0M564.8 657.5h0M562.0 644.6h0M563.6 656.5h0M560.5 655.4h0M568.1 658.0h0M571.1 650.0h0M560.5 652.6h0M561.8 648.2h0M564.9 648.4h0M559.5 649.4h0M567.5 658.3h0M556.3 657.7h0M567.9 653.5h0M564.5 652.2h0M560.1 656.9h0M561.7 659.9h0M566.8 651.3h0M558.0 657.6h0M566.8 662.8h0M563.1 648.0h0M560.5 647.8h0M561.0 648.4h0M563.6 648.4h0M564.1 653.8h0M563.9 659.3h0M563.4 650.5h0M565.4 650.1h0M579.0 657.6h0M568.4 660.3h0M581.2 660.5h0M580.3 659.9h0M580.0 654.4h0M580.5 654.7h0M574.9 651.0h0M578.0 663.4h0M578.4 659.5h0M573.0 665.8h0M574.0 657.5h0M573.4 653.8h0M580.9 655.2h0M579.9 659.9h0M581.2 662.9h0M574.7 654.9h0M568.4 662.6h0M582.3 655.8h0M578.3 663.6h0M576.5 659.1h0M570.3 666.3h0M580.6 657.5h0M572.1 666.0h0M575.4 662.1h0M569.1 662.3h0M572.7 655.4h0M576.1 652.2h0M579.2 664.8h0M580.1 660.5h0M574.8 661.8h0M577.0 661.8h0M577.8 662.1h0M570.5 656.4h0M579.4 661.5h0M573.1 659.7h0M576.4 650.6h0M575.3 659.9h0M578.3 660.6h0M577.9 656.8h0M575.6 663.5h0M577.7 664.5h0M578.3 663.5h0M579.3 663.7h0M570.9 655.8h0M572.1 656.6h0M577.2 664.9h0M575.4 663.9h0M577.0 659.7h0M576.0 659.0h0M580.8 659.1h0M578.5 655.8h0M573.0 656.5h0M569.8 659.0h0M575.4 661.1h0M580.7 659.5h0M582.0 658.6h0M579.4 661.3h0M576.6 663.4h0M573.1 652.8h0M581.1 659.7h0M582.2 662.1h0M582.9 658.4h0M582.8 661.7h0M582.1 658.4h0M584.3 667.5h0M585.9 657.0h0M585.6 666.3h0M584.3 664.3h0M585.1 665.7h0M587.6 665.2h0M583.7 665.4h0M584.1 658.1h0M594.6 662.4h0M588.7 664.4h0M582.5 666.1h0M587.3 664.3h0M591.1 670.8h0M584.7 664.4h0M588.4 660.0h0M592.2 666.1h0M588.3 669.3h0M590.4 669.9h0M590.1 670.4h0M589.6 665.4h0M587.5 658.1h0M587.4 663.2h0M585.5 670.8h0M591.1 662.2h0M590.8 667.7h0M592.0 668.0h0M585.7 659.6h0M585.7 672.3h0M583.7 658.1h0M582.4 662.9h0M585.4 668.0h0M592.2 663.7h0M589.7 667.8h0M584.4 666.8h0M589.9 668.7h0M586.3 661.7h0M580.9 670.4h0M591.9 659.2h0M582.8 665.2h0M591.6 665.2h0M584.5 657.2h0M586.7 663.1h0M591.3 660.4h0M588.5 656.6h0M588.0 662.6h0M589.4 659.6h0M589.0 663.8h0M591.1 666.8h0M583.6 666.4h0M581.3 663.5h0M585.4 663.3h0M586.7 662.3h0M584.2 666.2h0M582.7 666.6h0M586.2 658.3h0M587.2 663.3h0M581.7 661.4h0M597.2 665.7h0M596.0 665.1h0M604.4 667.3h0M601.2 674.4h0M594.9 663.6h0M594.9 670.1h0M601.8 666.9h0M603.4 672.6h0M598.1 665.0h0M591.9 668.9h0M594.5 664.0h0M599.9 666.9h0M594.7 667.5h0M603.0 667.4h0M603.5 668.2h0M605.2 669.1h0M598.6 670.8h0M596.0 674.0h0M600.5 667.5h0M603.4 665.2h0M599.9 664.5h0M596.2 663.4h0M598.9 672.5h0M599.7 667.8h0M601.3 666.3h0M598.4 667.5h0M597.4 664.4h0M596.4 670.0h0M604.1 668.6h0M599.7 665.9h0M597.2 669.3h0M600.1 664.5h0M605.0 667.3h0M598.9 668.1h0M595.7 663.0h0M593.0 668.3h0M593.7 667.7h0M602.3 665.6h0M600.4 674.9h0M598.8 670.3h0M596.5 665.2h0M601.5 667.0h0M601.8 676.3h0M601.3 669.3h0M597.5 673.8h0M598.5 666.8h0M595.9 672.2h0M596.0 673.2h0M598.9 664.3h0M601.7 674.1h0M601.6 675.6h0M595.2 662.9h0M597.8 675.8h0M596.3 666.1h0M594.8 661.8h0M610.5 677.2h0M607.7 671.6h0M606.3 671.0h0M605.8 673.7h0M608.3 677.7h0M610.8 672.7h0M605.0 675.7h0M607.7 672.2h0M607.7 671.0h0M605.5 673.7h0M603.5 672.9h0M605.8 672.2h0M605.6 672.4h0M606.3 674.7h0M610.6 677.0h0M604.3 676.7h0M610.1 673.0h0M611.7 674.5h0M609.5 671.8h0M611.8 674.1h0M607.5 674.2h0M614.6 671.5h0M604.6 675.4h0M609.9 671.5h0M608.5 670.5h0M609.8 673.9h0M606.3 675.5h0M609.2 674.7h0M609.4 678.8h0M614.3 674.8h0M605.8 671.8h0M610.5 672.7h0M611.3 674.4h0M605.5 675.2h0M609.4 679.4h0M614.7 682.8h0M615.7 679.2h0M615.1 680.0h0M617.0 677.3h0M614.6 679.2h0M615.0 678.8h0M615.4 684.2h0M617.5 678.4h0M612.1 682.0h0M615.2 680.6h0M614.0 679.6h0M614.6 679.1h0M611.9 680.5h0M616.3 682.2h0M619.5 679.8h0M613.1 683.7h0M616.1 679.5h0M613.8 678.7h0M613.2 679.6h0M614.6 677.5h0M614.4 675.2h0M616.3 682.2h0M622.4 687.8h0M619.5 683.2h0M619.4 685.0h0M624.4 685.6h0M621.0 686.1h0M624.0 686.3h0M619.6 684.4h0M622.5 683.8h0M620.8 684.1h0M620.9 685.0h0M619.2 683.3h0M623.8 687.5h0M619.5 685.0h0M624.1 684.9h0M618.7 682.3h0M619.8 684.5h0M619.5 680.7h0M625.0 685.6h0M621.6 684.4h0M622.0 685.6h0M622.1 688.2h0M628.5 688.3h0M629.2 688.2h0M629.3 688.2h0M625.9 689.5h0M630.6 688.1h0M624.9 688.4h0M626.0 687.3h0M629.7 690.5h0M623.9 690.2h0M625.9 690.1h0M626.1 685.6h0M626.1 687.2h0M625.2 689.8h0M625.1 686.3h0M628.1 689.0h0M627.8 693.7h0M626.1 688.4h0M631.8 692.1h0M623.4 688.3h0M626.5 692.3h0M629.2 694.7h0M629.5 691.8h0M629.5 690.3h0M630.1 691.3h0M634.1 695.8h0M632.0 696.3h0M639.1 698.5h0M638.6 696.8h0M633.4 691.6h0M631.8 696.1h0M635.6 695.6h0M633.2 696.6h0M638.7 696.7h0M634.6 693.9h0M633.6 696.5h0M633.8 695.9h0M633.5 692.5h0M635.3 700.4h0M633.5 693.7h0M639.6 698.8h0M634.4 691.7h0M631.2 694.8h0M640.0 698.3h0M633.2 693.3h0M636.7 697.9h0M635.7 698.5h0M634.8 695.2h0M643.7 701.3h0M642.3 700.4h0M644.5 703.7h0M645.7 706.1h0M640.4 702.4h0M641.8 699.4h0M643.7 704.0h0M645.8 703.5h0M645.6 704.0h0M644.1 700.7h0M637.9 703.0h0M638.8 703.3h0M642.9 701.2h0M642.8 705.7h0M646.2 703.8h0M646.5 704.4h0M643.9 702.8h0M638.8 702.0h0M642.1 700.3h0M645.4 700.4h0M643.7 705.0h0M646.4 702.6h0M639.7 701.9h0M649.1 704.6h0M648.4 704.7h0M646.6 707.9h0M646.4 708.5h0M645.1 706.4h0M646.1 708.0h0M648.1 704.4h0M647.0 708.0h0M647.0 707.7h0" fill="none" stroke="#ffa858" stroke-width="3" stroke-linecap="round"/><path d="M458.6 593.8L465.8 598.8" stroke="#6c7b33" stroke-width="3.1" stroke-linecap="round"/><path d="M465.8 598.8L476.0 605.3" stroke="#6c7b33" stroke-width="3.4" stroke-linecap="round"/><path d="M476.0 605.3L487.5 605.3" stroke="#6c7b33" stroke-width="3.4" stroke-linecap="round"/><path d="M487.5 605.3L490.4 606.8" stroke="#6c7b33" stroke-width="3.1" stroke-linecap="round"/><path d="M459.6 594.5h0M464.3 597.8h0M464.5 599.0h0M462.2 597.5h0M465.3 598.2h0M461.8 597.8h0M463.5 597.6h0M463.6 598.4h0M461.4 595.5h0M458.9 595.0h0M461.4 595.6h0M461.1 596.9h0M462.1 596.6h0M458.0 594.5h0M463.9 597.4h0M461.7 595.6h0M472.7 601.8h0M467.3 598.3h0M469.7 603.9h0M466.8 599.3h0M474.8 603.2h0M468.9 603.0h0M468.2 601.3h0M474.2 605.2h0M477.4 604.5h0M474.3 605.1h0M474.0 603.9h0M471.4 603.2h0M466.0 600.8h0M474.3 603.6h0M471.2 601.4h0M469.1 601.2h0M471.9 602.6h0M466.9 599.9h0M471.4 600.7h0M474.4 605.3h0M467.3 598.2h0M476.1 603.7h0M476.6 606.2h0M479.2 605.3h0M478.7 605.0h0M477.8 606.2h0M478.5 604.4h0M480.2 604.5h0M476.3 604.9h0M487.1 604.1h0M481.0 606.0h0M481.9 606.3h0M482.2 606.2h0M481.4 604.9h0M481.5 604.8h0M486.4 603.7h0M480.4 606.0h0M485.5 605.2h0M478.6 604.3h0M481.0 604.8h0M481.7 603.6h0M484.5 606.6h0M480.8 605.3h0M488.2 606.5h0M489.3 605.7h0M488.1 604.6h0M488.1 607.0h0M489.3 606.9h0M490.5 605.4h0M489.2 608.3h0" fill="none" stroke="#6c7b33" stroke-width="3" stroke-linecap="round"/><path d="M543.6 655.7h0M568.7 668.6h0M567.3 667.2h0M571.7 666.3h0M571.9 675.1h0M558.3 665.5h0M547.8 657.5h0M562.1 662.7h0M551.2 662.9h0M571.9 671.3h0M549.5 661.2h0M555.5 664.6h0M561.9 664.5h0M570.1 669.7h0M551.5 658.9h0M546.1 658.5h0M554.2 658.9h0M568.2 668.0h0M552.2 657.3h0M545.2 654.4h0M546.5 662.1h0M559.2 669.5h0M564.1 665.4h0M568.7 670.3h0M567.8 664.0h0M551.2 658.7h0M548.7 661.1h0M551.1 655.7h0M550.8 659.5h0M550.3 658.5h0M547.7 663.3h0M544.7 653.7h0M556.4 666.8h0M554.4 660.4h0M547.7 659.8h0M565.9 664.4h0M541.5 656.0h0M546.4 660.5h0M563.6 661.9h0M570.4 669.9h0M561.0 669.8h0M568.5 667.8h0M562.4 665.1h0M565.5 665.6h0M546.5 656.7h0M561.1 668.6h0M552.2 665.1h0M551.5 660.0h0M562.5 666.2h0M549.7 663.1h0M552.1 664.5h0M540.1 655.9h0M550.5 656.5h0M553.3 658.4h0M563.4 665.7h0M551.8 659.0h0M558.1 662.7h0M556.6 664.8h0M561.2 667.6h0M571.7 672.5h0M570.9 670.2h0M547.8 659.9h0M555.8 659.8h0M545.8 655.5h0M541.2 660.0h0M541.2 658.4h0M548.7 659.4h0M558.1 662.4h0M571.4 668.0h0M544.6 660.8h0" fill="none" stroke="#ffa858" stroke-width="2.4" stroke-linecap="round"/><path d="M249.0 493.0h0M253.7 491.9h0M231.6 496.0h0M238.6 509.8h0M238.6 517.0h0M241.7 514.5h0M258.4 508.0h0M264.0 509.0h0M258.4 532.0h0M266.0 533.5h0M271.0 530.0h0M276.7 542.0h0M282.0 540.0h0M286.8 539.0h0M271.0 552.0h0M270.0 562.8h0M294.7 524.0h0M313.6 525.6h0M316.7 530.0h0M299.0 546.0h0M304.0 546.0h0M318.0 554.0h0M327.8 554.0h0M334.0 552.0h0M332.5 541.0h0M357.0 572.0h0M364.0 570.6h0M396.0 531.6h0M381.5 546.3h0M384.5 544.9h0M388.4 546.8h0M396.0 547.5h0M383.8 550.4h0M367.9 551.5h0M370.4 553.0h0M368.5 556.2h0M376.9 558.6h0M382.4 555.4h0M407.0 557.0h0M364.3 570.3h0M357.4 572.3h0M372.5 572.3h0M377.9 573.8h0M389.2 577.8h0M385.8 582.5h0M380.5 586.8h0M389.2 586.2h0M416.2 570.9h0M422.0 573.5h0M427.2 580.0h0M428.5 584.6h0M403.6 584.4h0M405.8 584.4h0M394.2 593.0h0M395.7 595.6h0M402.2 595.6h0M410.4 598.1h0M402.2 602.7h0M395.2 605.0h0M420.6 593.5h0M426.0 599.2h0M439.1 589.7h0M442.0 590.4h0M451.4 602.7h0M452.8 601.7h0M463.6 599.2h0M468.0 595.5h0M485.6 597.7h0M509.2 629.9h0M515.7 617.6h0M523.2 615.4h0M535.2 627.7h0M546.5 619.6h0M543.6 631.9h0M558.8 631.9h0M548.7 636.3h0M559.8 637.4h0M564.6 642.8h0M580.8 649.6h0M589.2 652.5h0M585.1 654.6h0M591.4 658.0h0M595.0 658.3h0M548.0 665.6h0M545.8 670.0h0M549.4 668.8h0M554.5 671.7h0M561.0 672.4h0M565.3 670.3h0M569.7 673.2h0M571.1 670.7h0M582.7 671.0h0M589.5 676.5h0M558.8 693.0h0M666.1 702.8h0M525.6 639.9h0M538.6 648.6h0M689.4 696.5h0M666.2 703.0h0M705.1 708.5h0M690.7 711.6h0M715.7 714.8h0M656.1 715.3h0M667.2 718.0h0M671.9 719.6h0M710.3 726.1h0M683.6 723.2h0M684.2 727.1h0M681.7 733.6h0M723.6 734.4h0M694.0 741.3h0M696.9 741.9h0M703.0 750.0h0M704.8 752.7h0M708.7 751.0h0M699.5 753.4h0M706.0 754.9h0M701.2 758.5h0M700.0 762.1h0M717.1 757.9h0M735.9 747.1h0M741.0 748.1h0M750.0 747.7h0M762.0 757.8h0M732.8 762.6h0M732.8 764.7h0M737.1 763.7h0M740.3 765.9h0M756.9 765.9h0M753.3 766.9h0M752.1 770.5h0M774.7 772.0h0M778.6 770.5h0M777.1 777.0h0M648.0 708.8h0M243.8 503.3h0M300.5 532.9h0M274.2 526.3h0M276.7 522.5h0M304.1 539.9h0M255.0 516.8h0M275.5 517.5h0M249.3 508.1h0M298.4 536.6h0M359.6 555.2h0M396.4 581.4h0M410.1 577.7h0M353.8 553.0h0M354.4 555.0h0M404.1 580.9h0M383.3 568.3h0M431.7 590.3h0M363.7 558.2h0M520.6 631.2h0M525.6 630.2h0M597.8 664.7h0M522.1 632.2h0M527.0 633.7h0M518.7 623.5h0M556.5 657.5h0M521.8 625.4h0M555.8 659.6h0M674.9 709.0h0M682.9 717.0h0M691.5 718.8h0M699.8 732.9h0M715.2 747.7h0M710.0 740.0h0M717.6 749.9h0M698.3 724.2h0M734.6 755.4h0" fill="none" stroke="#d6d6d6" stroke-width="2.7" stroke-linecap="round"/></svg>
</div></body></html>
